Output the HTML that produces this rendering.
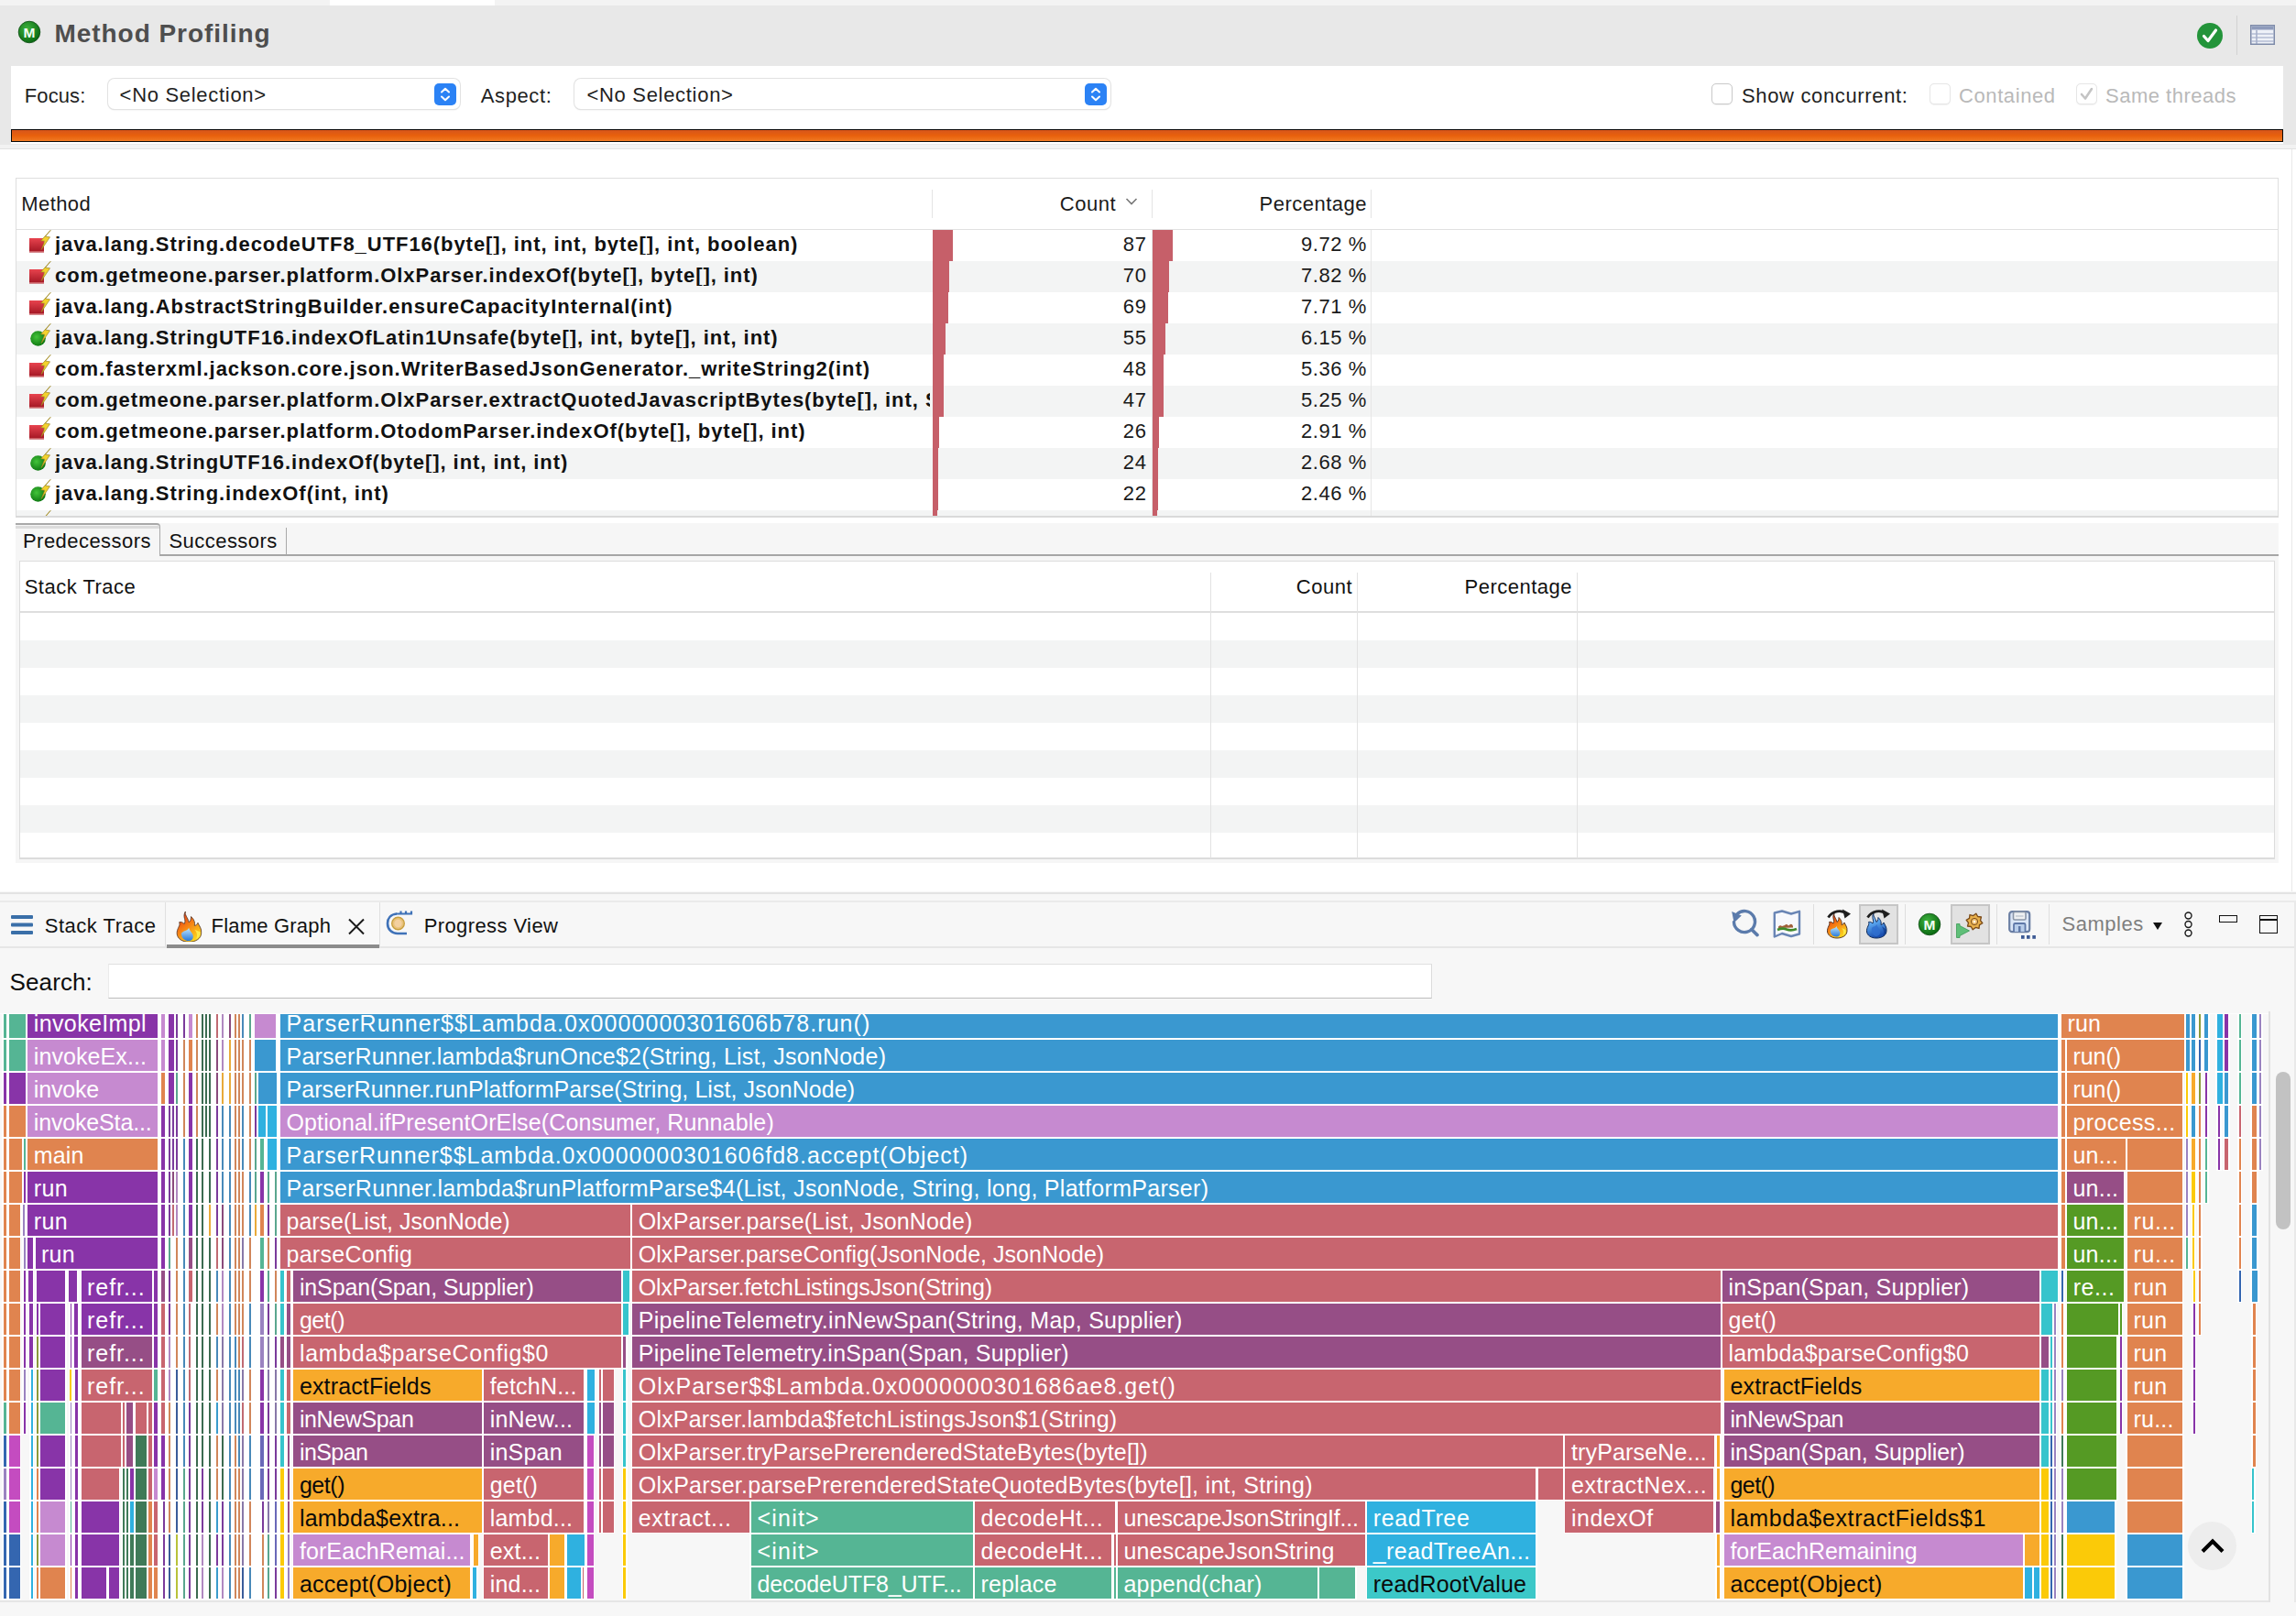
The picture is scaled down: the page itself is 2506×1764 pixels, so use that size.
<!DOCTYPE html>
<html><head><meta charset="utf-8"><title>Method Profiling</title><style>
html,body{margin:0;padding:0;}
body{width:2506px;height:1764px;position:relative;overflow:hidden;background:#fff;font-family:"Liberation Sans", sans-serif;}
.r{position:absolute;}
.t{position:absolute;white-space:pre;line-height:1;}
.fb{position:absolute;overflow:hidden;white-space:pre;font-size:25px;line-height:36px;letter-spacing:0.12px;}
.fb span{position:absolute;left:6.5px;top:0;}
</style></head><body>
<div class="r" style="left:0.00px;top:0.00px;width:2506.00px;height:6.00px;background:#f3f3f3;"></div>
<div class="r" style="left:360.00px;top:0.00px;width:180.00px;height:7.00px;background:#ffffff;"></div>
<div class="r" style="left:0.00px;top:6.00px;width:2506.00px;height:156.00px;background:#e8e8e8;"></div>
<svg class="r" style="left:19px;top:22px" width="26" height="26" viewBox="0 0 26 26"><defs><radialGradient id="gm" cx="40%" cy="35%" r="65%"><stop offset="0" stop-color="#3fb33f"/><stop offset="1" stop-color="#0b6a12"/></radialGradient></defs><circle cx="13" cy="13" r="11.8" fill="url(#gm)" stroke="#0a4a10" stroke-width="0.8"/><text x="13" y="18.8" font-family="Liberation Sans" font-size="15.5" font-weight="700" fill="#f4fff4" text-anchor="middle">M</text></svg>
<div class="t" style="left:59.5px;top:22.7px;font-size:28px;font-weight:700;color:#4e4e4e;letter-spacing:0.95px;">Method Profiling</div>
<svg class="r" style="left:2397px;top:24px" width="30" height="30" viewBox="0 0 30 30"><circle cx="15" cy="15" r="14" fill="#23943a"/><path d="M8.5 15.5 L13 20.5 L21.5 9" stroke="#fff" stroke-width="3.2" fill="none" stroke-linecap="round" stroke-linejoin="round"/></svg>
<div class="r" style="left:2441.00px;top:17.00px;width:1.00px;height:43.00px;background:#d2d2d2;"></div>
<svg class="r" style="left:2456px;top:27px" width="27" height="22" viewBox="0 0 27 22"><rect x="0.75" y="0.75" width="25.5" height="20.5" fill="#eef1f8" stroke="#7d8aa8" stroke-width="1.5"/><rect x="1.5" y="1.5" width="24" height="4" fill="#8e9bbb"/><line x1="7" y1="6" x2="7" y2="21" stroke="#8e9bbb" stroke-width="1.2"/><line x1="1" y1="10" x2="26" y2="10" stroke="#a6b1cc" stroke-width="1.2"/><line x1="1" y1="14" x2="26" y2="14" stroke="#a6b1cc" stroke-width="1.2"/><line x1="1" y1="18" x2="26" y2="18" stroke="#a6b1cc" stroke-width="1.2"/></svg>
<div class="r" style="left:12.00px;top:72.00px;width:2480.00px;height:85.00px;background:#ffffff;"></div>
<div class="t" style="left:26.8px;top:93.8px;font-size:22px;font-weight:400;color:#1f1f1f;letter-spacing:0.1px;">Focus:</div>
<div class="r" style="left:117.6px;top:86px;width:384.4px;height:33px;background:#fff;border-radius:7px;box-shadow:0 0 0 1px #e2e2e2, 0 1px 1.5px rgba(0,0,0,0.18);"></div>
<svg class="r" style="left:474px;top:91px" width="24" height="24" viewBox="0 0 24 24"><rect x="0" y="0" width="24" height="24" rx="5" fill="#2b82f5"/><path d="M8 9.5 L12 5.8 L16 9.5 M8 14.5 L12 18.2 L16 14.5" stroke="#fff" stroke-width="2" fill="none" stroke-linecap="round" stroke-linejoin="round"/></svg>
<div class="t" style="left:130.6px;top:92.9px;font-size:22px;font-weight:400;color:#1f1f1f;letter-spacing:0.7px;">&lt;No Selection&gt;</div>
<div class="t" style="left:524.8px;top:93.9px;font-size:22px;font-weight:400;color:#1f1f1f;letter-spacing:0.6px;">Aspect:</div>
<div class="r" style="left:627.4px;top:86px;width:584.6px;height:33px;background:#fff;border-radius:7px;box-shadow:0 0 0 1px #e2e2e2, 0 1px 1.5px rgba(0,0,0,0.18);"></div>
<svg class="r" style="left:1184px;top:91px" width="24" height="24" viewBox="0 0 24 24"><rect x="0" y="0" width="24" height="24" rx="5" fill="#2b82f5"/><path d="M8 9.5 L12 5.8 L16 9.5 M8 14.5 L12 18.2 L16 14.5" stroke="#fff" stroke-width="2" fill="none" stroke-linecap="round" stroke-linejoin="round"/></svg>
<div class="t" style="left:640.4px;top:92.9px;font-size:22px;font-weight:400;color:#1f1f1f;letter-spacing:0.7px;">&lt;No Selection&gt;</div>
<div class="r" style="left:1868px;top:91px;width:21px;height:21px;border:1.2px solid #c9c9c9;border-radius:5px;background:#fff;box-shadow:0 0.5px 1px rgba(0,0,0,0.06)"></div>
<div class="t" style="left:1901.0px;top:93.9px;font-size:22px;font-weight:400;color:#1f1f1f;letter-spacing:0.65px;">Show concurrent:</div>
<div class="r" style="left:2106px;top:91px;width:21px;height:21px;border:1.2px solid #e6e6e6;border-radius:5px;background:#fff;box-shadow:0 0.5px 1px rgba(0,0,0,0.06)"></div>
<div class="t" style="left:2138.0px;top:93.9px;font-size:22px;font-weight:400;color:#b9b9b9;letter-spacing:0.6px;">Contained</div>
<div class="r" style="left:2266px;top:91px;width:21px;height:21px;border:1.2px solid #e6e6e6;border-radius:5px;background:#fff;box-shadow:0 0.5px 1px rgba(0,0,0,0.06)"></div>
<svg class="r" style="left:2266px;top:91px" width="23" height="23" viewBox="0 0 23 23"><path d="M6 12 L10 16.5 L17 6" stroke="#c4c4c4" stroke-width="2.6" fill="none" stroke-linecap="round" stroke-linejoin="round"/></svg>
<div class="t" style="left:2298.0px;top:93.9px;font-size:22px;font-weight:400;color:#b9b9b9;letter-spacing:0.5px;">Same threads</div>
<div class="r" style="left:12px;top:141px;width:2480px;height:14px;box-sizing:border-box;border:1.6px solid #0a0a0a;background:linear-gradient(#d6561c,#e8600c 50%,#f07a22)"></div>
<div class="r" style="left:0.00px;top:158.00px;width:2506.00px;height:4.00px;background:#f2f2f2;"></div>
<div class="r" style="left:0.00px;top:161.50px;width:2506.00px;height:1.50px;background:#e2e2e2;"></div>
<div class="r" style="left:0.00px;top:163.00px;width:2506.00px;height:811.00px;background:#ffffff;"></div>
<div class="r" style="left:16.5px;top:193.5px;width:2470px;height:371px;box-sizing:border-box;border:1.3px solid #dedede;border-bottom:2px solid #dcdcdc;background:#fff"></div>
<div class="t" style="left:23.3px;top:212.4px;font-size:22px;font-weight:400;color:#1a1a1a;letter-spacing:0.4px;">Method</div>
<div class="t" style="left:18.0px;width:1200px;text-align:right;top:212.4px;font-size:22px;font-weight:400;color:#1a1a1a;letter-spacing:0.5px;">Count</div>
<svg class="r" style="left:1228px;top:215px" width="14" height="10" viewBox="0 0 14 10"><path d="M1.5 2 L7 7.5 L12.5 2" stroke="#777" stroke-width="1.6" fill="none"/></svg>
<div class="t" style="left:292.0px;width:1200px;text-align:right;top:212.4px;font-size:22px;font-weight:400;color:#1a1a1a;letter-spacing:0.5px;">Percentage</div>
<div class="r" style="left:1017.00px;top:207.00px;width:1.20px;height:31.00px;background:#e4e4e4;"></div>
<div class="r" style="left:1257.00px;top:207.00px;width:1.20px;height:31.00px;background:#e4e4e4;"></div>
<div class="r" style="left:1496.00px;top:207.00px;width:1.20px;height:31.00px;background:#e4e4e4;"></div>
<div class="r" style="left:17.50px;top:249.50px;width:2468.00px;height:1.50px;background:#e0e0e0;"></div>
<div class="r" style="left:1018.00px;top:250.50px;width:22.00px;height:34.00px;background:#c65f69;"></div>
<div class="r" style="left:1258.00px;top:250.50px;width:22.00px;height:34.00px;background:#c65f69;"></div>
<svg class="r" style="left:32px;top:250.5px" width="24" height="25" viewBox="0 0 24 25"><defs><linearGradient id="gr0" x1="0" y1="0" x2="0" y2="1"><stop offset="0" stop-color="#e8434e"/><stop offset="1" stop-color="#a01522"/></linearGradient></defs><rect x="0" y="9" width="16" height="15.5" fill="url(#gr0)"/><rect x="0" y="23" width="16" height="1.5" fill="#e89090" opacity="0.6"/><path d="M23.2 0.3 L17.5 7.2 L22.5 7.8 L13.2 21.5 L16.8 12.2 L12.6 11.8 Z" fill="#f3d22c" stroke="#9a8420" stroke-width="0.7" stroke-linejoin="round"/></svg>
<div class="t" style="left:60px;width:955px;overflow:hidden;top:256.2px;font-size:22px;font-weight:700;color:#111;letter-spacing:0.95px">java.lang.String.decodeUTF8_UTF16(byte[], int, int, byte[], int, boolean)</div>
<div class="t" style="left:51.5px;width:1200px;text-align:right;top:256.2px;font-size:22px;font-weight:400;color:#1a1a1a;letter-spacing:0.6px;">87</div>
<div class="t" style="left:292.0px;width:1200px;text-align:right;top:256.2px;font-size:22px;font-weight:400;color:#1a1a1a;letter-spacing:0.6px;">9.72 %</div>
<div class="r" style="left:17.50px;top:284.50px;width:2468.00px;height:34.00px;background:#f3f4f4;"></div>
<div class="r" style="left:1018.00px;top:284.50px;width:17.70px;height:34.00px;background:#c65f69;"></div>
<div class="r" style="left:1258.00px;top:284.50px;width:17.70px;height:34.00px;background:#c65f69;"></div>
<svg class="r" style="left:32px;top:284.5px" width="24" height="25" viewBox="0 0 24 25"><defs><linearGradient id="gr1" x1="0" y1="0" x2="0" y2="1"><stop offset="0" stop-color="#e8434e"/><stop offset="1" stop-color="#a01522"/></linearGradient></defs><rect x="0" y="9" width="16" height="15.5" fill="url(#gr1)"/><rect x="0" y="23" width="16" height="1.5" fill="#e89090" opacity="0.6"/><path d="M23.2 0.3 L17.5 7.2 L22.5 7.8 L13.2 21.5 L16.8 12.2 L12.6 11.8 Z" fill="#f3d22c" stroke="#9a8420" stroke-width="0.7" stroke-linejoin="round"/></svg>
<div class="t" style="left:60px;width:955px;overflow:hidden;top:290.2px;font-size:22px;font-weight:700;color:#111;letter-spacing:0.95px">com.getmeone.parser.platform.OlxParser.indexOf(byte[], byte[], int)</div>
<div class="t" style="left:51.5px;width:1200px;text-align:right;top:290.2px;font-size:22px;font-weight:400;color:#1a1a1a;letter-spacing:0.6px;">70</div>
<div class="t" style="left:292.0px;width:1200px;text-align:right;top:290.2px;font-size:22px;font-weight:400;color:#1a1a1a;letter-spacing:0.6px;">7.82 %</div>
<div class="r" style="left:1018.00px;top:318.50px;width:17.45px;height:34.00px;background:#c65f69;"></div>
<div class="r" style="left:1258.00px;top:318.50px;width:17.45px;height:34.00px;background:#c65f69;"></div>
<svg class="r" style="left:32px;top:318.5px" width="24" height="25" viewBox="0 0 24 25"><defs><linearGradient id="gr2" x1="0" y1="0" x2="0" y2="1"><stop offset="0" stop-color="#e8434e"/><stop offset="1" stop-color="#a01522"/></linearGradient></defs><rect x="0" y="9" width="16" height="15.5" fill="url(#gr2)"/><rect x="0" y="23" width="16" height="1.5" fill="#e89090" opacity="0.6"/><path d="M23.2 0.3 L17.5 7.2 L22.5 7.8 L13.2 21.5 L16.8 12.2 L12.6 11.8 Z" fill="#f3d22c" stroke="#9a8420" stroke-width="0.7" stroke-linejoin="round"/></svg>
<div class="t" style="left:60px;width:955px;overflow:hidden;top:324.2px;font-size:22px;font-weight:700;color:#111;letter-spacing:0.95px">java.lang.AbstractStringBuilder.ensureCapacityInternal(int)</div>
<div class="t" style="left:51.5px;width:1200px;text-align:right;top:324.2px;font-size:22px;font-weight:400;color:#1a1a1a;letter-spacing:0.6px;">69</div>
<div class="t" style="left:292.0px;width:1200px;text-align:right;top:324.2px;font-size:22px;font-weight:400;color:#1a1a1a;letter-spacing:0.6px;">7.71 %</div>
<div class="r" style="left:17.50px;top:352.50px;width:2468.00px;height:34.00px;background:#f3f4f4;"></div>
<div class="r" style="left:1018.00px;top:352.50px;width:13.91px;height:34.00px;background:#c65f69;"></div>
<div class="r" style="left:1258.00px;top:352.50px;width:13.91px;height:34.00px;background:#c65f69;"></div>
<svg class="r" style="left:32px;top:352.5px" width="24" height="25" viewBox="0 0 24 25"><defs><radialGradient id="gg3" cx="40%" cy="40%" r="60%"><stop offset="0" stop-color="#43c43a"/><stop offset="1" stop-color="#0f7a12"/></radialGradient></defs><circle cx="9.5" cy="16.5" r="8.3" fill="url(#gg3)"/><path d="M23.2 0.3 L17.5 7.2 L22.5 7.8 L13.2 21.5 L16.8 12.2 L12.6 11.8 Z" fill="#f3d22c" stroke="#9a8420" stroke-width="0.7" stroke-linejoin="round"/></svg>
<div class="t" style="left:60px;width:955px;overflow:hidden;top:358.2px;font-size:22px;font-weight:700;color:#111;letter-spacing:0.95px">java.lang.StringUTF16.indexOfLatin1Unsafe(byte[], int, byte[], int, int)</div>
<div class="t" style="left:51.5px;width:1200px;text-align:right;top:358.2px;font-size:22px;font-weight:400;color:#1a1a1a;letter-spacing:0.6px;">55</div>
<div class="t" style="left:292.0px;width:1200px;text-align:right;top:358.2px;font-size:22px;font-weight:400;color:#1a1a1a;letter-spacing:0.6px;">6.15 %</div>
<div class="r" style="left:1018.00px;top:386.50px;width:12.14px;height:34.00px;background:#c65f69;"></div>
<div class="r" style="left:1258.00px;top:386.50px;width:12.14px;height:34.00px;background:#c65f69;"></div>
<svg class="r" style="left:32px;top:386.5px" width="24" height="25" viewBox="0 0 24 25"><defs><linearGradient id="gr4" x1="0" y1="0" x2="0" y2="1"><stop offset="0" stop-color="#e8434e"/><stop offset="1" stop-color="#a01522"/></linearGradient></defs><rect x="0" y="9" width="16" height="15.5" fill="url(#gr4)"/><rect x="0" y="23" width="16" height="1.5" fill="#e89090" opacity="0.6"/><path d="M23.2 0.3 L17.5 7.2 L22.5 7.8 L13.2 21.5 L16.8 12.2 L12.6 11.8 Z" fill="#f3d22c" stroke="#9a8420" stroke-width="0.7" stroke-linejoin="round"/></svg>
<div class="t" style="left:60px;width:955px;overflow:hidden;top:392.2px;font-size:22px;font-weight:700;color:#111;letter-spacing:0.95px">com.fasterxml.jackson.core.json.WriterBasedJsonGenerator._writeString2(int)</div>
<div class="t" style="left:51.5px;width:1200px;text-align:right;top:392.2px;font-size:22px;font-weight:400;color:#1a1a1a;letter-spacing:0.6px;">48</div>
<div class="t" style="left:292.0px;width:1200px;text-align:right;top:392.2px;font-size:22px;font-weight:400;color:#1a1a1a;letter-spacing:0.6px;">5.36 %</div>
<div class="r" style="left:17.50px;top:420.50px;width:2468.00px;height:34.00px;background:#f3f4f4;"></div>
<div class="r" style="left:1018.00px;top:420.50px;width:11.89px;height:34.00px;background:#c65f69;"></div>
<div class="r" style="left:1258.00px;top:420.50px;width:11.89px;height:34.00px;background:#c65f69;"></div>
<svg class="r" style="left:32px;top:420.5px" width="24" height="25" viewBox="0 0 24 25"><defs><linearGradient id="gr5" x1="0" y1="0" x2="0" y2="1"><stop offset="0" stop-color="#e8434e"/><stop offset="1" stop-color="#a01522"/></linearGradient></defs><rect x="0" y="9" width="16" height="15.5" fill="url(#gr5)"/><rect x="0" y="23" width="16" height="1.5" fill="#e89090" opacity="0.6"/><path d="M23.2 0.3 L17.5 7.2 L22.5 7.8 L13.2 21.5 L16.8 12.2 L12.6 11.8 Z" fill="#f3d22c" stroke="#9a8420" stroke-width="0.7" stroke-linejoin="round"/></svg>
<div class="t" style="left:60px;width:955px;overflow:hidden;top:426.2px;font-size:22px;font-weight:700;color:#111;letter-spacing:0.95px">com.getmeone.parser.platform.OlxParser.extractQuotedJavascriptBytes(byte[], int, String)</div>
<div class="t" style="left:51.5px;width:1200px;text-align:right;top:426.2px;font-size:22px;font-weight:400;color:#1a1a1a;letter-spacing:0.6px;">47</div>
<div class="t" style="left:292.0px;width:1200px;text-align:right;top:426.2px;font-size:22px;font-weight:400;color:#1a1a1a;letter-spacing:0.6px;">5.25 %</div>
<div class="r" style="left:1018.00px;top:454.50px;width:6.57px;height:34.00px;background:#c65f69;"></div>
<div class="r" style="left:1258.00px;top:454.50px;width:6.57px;height:34.00px;background:#c65f69;"></div>
<svg class="r" style="left:32px;top:454.5px" width="24" height="25" viewBox="0 0 24 25"><defs><linearGradient id="gr6" x1="0" y1="0" x2="0" y2="1"><stop offset="0" stop-color="#e8434e"/><stop offset="1" stop-color="#a01522"/></linearGradient></defs><rect x="0" y="9" width="16" height="15.5" fill="url(#gr6)"/><rect x="0" y="23" width="16" height="1.5" fill="#e89090" opacity="0.6"/><path d="M23.2 0.3 L17.5 7.2 L22.5 7.8 L13.2 21.5 L16.8 12.2 L12.6 11.8 Z" fill="#f3d22c" stroke="#9a8420" stroke-width="0.7" stroke-linejoin="round"/></svg>
<div class="t" style="left:60px;width:955px;overflow:hidden;top:460.2px;font-size:22px;font-weight:700;color:#111;letter-spacing:0.95px">com.getmeone.parser.platform.OtodomParser.indexOf(byte[], byte[], int)</div>
<div class="t" style="left:51.5px;width:1200px;text-align:right;top:460.2px;font-size:22px;font-weight:400;color:#1a1a1a;letter-spacing:0.6px;">26</div>
<div class="t" style="left:292.0px;width:1200px;text-align:right;top:460.2px;font-size:22px;font-weight:400;color:#1a1a1a;letter-spacing:0.6px;">2.91 %</div>
<div class="r" style="left:17.50px;top:488.50px;width:2468.00px;height:34.00px;background:#f3f4f4;"></div>
<div class="r" style="left:1018.00px;top:488.50px;width:6.07px;height:34.00px;background:#c65f69;"></div>
<div class="r" style="left:1258.00px;top:488.50px;width:6.07px;height:34.00px;background:#c65f69;"></div>
<svg class="r" style="left:32px;top:488.5px" width="24" height="25" viewBox="0 0 24 25"><defs><radialGradient id="gg7" cx="40%" cy="40%" r="60%"><stop offset="0" stop-color="#43c43a"/><stop offset="1" stop-color="#0f7a12"/></radialGradient></defs><circle cx="9.5" cy="16.5" r="8.3" fill="url(#gg7)"/><path d="M23.2 0.3 L17.5 7.2 L22.5 7.8 L13.2 21.5 L16.8 12.2 L12.6 11.8 Z" fill="#f3d22c" stroke="#9a8420" stroke-width="0.7" stroke-linejoin="round"/></svg>
<div class="t" style="left:60px;width:955px;overflow:hidden;top:494.2px;font-size:22px;font-weight:700;color:#111;letter-spacing:0.95px">java.lang.StringUTF16.indexOf(byte[], int, int, int)</div>
<div class="t" style="left:51.5px;width:1200px;text-align:right;top:494.2px;font-size:22px;font-weight:400;color:#1a1a1a;letter-spacing:0.6px;">24</div>
<div class="t" style="left:292.0px;width:1200px;text-align:right;top:494.2px;font-size:22px;font-weight:400;color:#1a1a1a;letter-spacing:0.6px;">2.68 %</div>
<div class="r" style="left:1018.00px;top:522.50px;width:5.56px;height:34.00px;background:#c65f69;"></div>
<div class="r" style="left:1258.00px;top:522.50px;width:5.56px;height:34.00px;background:#c65f69;"></div>
<svg class="r" style="left:32px;top:522.5px" width="24" height="25" viewBox="0 0 24 25"><defs><radialGradient id="gg8" cx="40%" cy="40%" r="60%"><stop offset="0" stop-color="#43c43a"/><stop offset="1" stop-color="#0f7a12"/></radialGradient></defs><circle cx="9.5" cy="16.5" r="8.3" fill="url(#gg8)"/><path d="M23.2 0.3 L17.5 7.2 L22.5 7.8 L13.2 21.5 L16.8 12.2 L12.6 11.8 Z" fill="#f3d22c" stroke="#9a8420" stroke-width="0.7" stroke-linejoin="round"/></svg>
<div class="t" style="left:60px;width:955px;overflow:hidden;top:528.2px;font-size:22px;font-weight:700;color:#111;letter-spacing:0.95px">java.lang.String.indexOf(int, int)</div>
<div class="t" style="left:51.5px;width:1200px;text-align:right;top:528.2px;font-size:22px;font-weight:400;color:#1a1a1a;letter-spacing:0.6px;">22</div>
<div class="t" style="left:292.0px;width:1200px;text-align:right;top:528.2px;font-size:22px;font-weight:400;color:#1a1a1a;letter-spacing:0.6px;">2.46 %</div>
<div class="r" style="left:17.50px;top:556.50px;width:2468.00px;height:7.00px;background:#f3f4f4;"></div>
<div class="r" style="left:1018.00px;top:556.50px;width:5.06px;height:7.00px;background:#c65f69;"></div>
<div class="r" style="left:1258.00px;top:556.50px;width:5.06px;height:7.00px;background:#c65f69;"></div>
<svg class="r" style="left:32px;top:556.5px" width="24" height="13" viewBox="0 0 24 13" ><path d="M23.2 0.3 L17.5 7.2 L22.5 7.8 L13.2 21.5 L16.8 12.2 L12.6 11.8 Z" fill="#f3d22c" stroke="#9a8420" stroke-width="0.7" stroke-linejoin="round"/></svg>
<div class="r" style="left:1257.00px;top:251.00px;width:1.20px;height:312.50px;background:#e6e6e6;"></div>
<div class="r" style="left:1496.00px;top:251.00px;width:1.20px;height:312.50px;background:#e6e6e6;"></div>
<div class="r" style="left:16.50px;top:563.30px;width:2470.50px;height:2.00px;background:#d9d9d9;"></div>
<div class="r" style="left:16.50px;top:566.00px;width:2470.50px;height:376.00px;background:#f6f6f6;"></div>
<div class="r" style="left:16.50px;top:565.30px;width:2470.50px;height:5.70px;background:#ffffff;"></div>
<div class="r" style="left:17px;top:571px;width:158px;height:36px;background:#f6f6f6;border-top:2.5px solid #a9a9a9;border-right:1.5px solid #a9a9a9;border-top-right-radius:4px;box-sizing:border-box"></div>
<div class="r" style="left:17.00px;top:573.50px;width:157.00px;height:3.50px;background:#dcdcdc;"></div>
<div class="r" style="left:175.00px;top:605.00px;width:2312.00px;height:1.80px;background:#a6a6a6;"></div>
<div class="r" style="left:311.50px;top:576.00px;width:1.50px;height:30.00px;background:#a9a9a9;"></div>
<div class="t" style="left:25.0px;top:579.9px;font-size:22px;font-weight:400;color:#111;letter-spacing:0.45px;">Predecessors</div>
<div class="t" style="left:184.5px;top:579.9px;font-size:22px;font-weight:400;color:#111;letter-spacing:0.45px;">Successors</div>
<div class="r" style="left:20.5px;top:611.5px;width:2462.5px;height:326.5px;box-sizing:border-box;border:1.3px solid #dcdcdc;border-bottom:2px solid #dcdcdc;background:#fff"></div>
<div class="t" style="left:26.7px;top:630.2px;font-size:22px;font-weight:400;color:#111;letter-spacing:0.5px;">Stack Trace</div>
<div class="t" style="left:276.0px;width:1200px;text-align:right;top:630.2px;font-size:22px;font-weight:400;color:#111;letter-spacing:0.5px;">Count</div>
<div class="t" style="left:516.0px;width:1200px;text-align:right;top:630.2px;font-size:22px;font-weight:400;color:#111;letter-spacing:0.5px;">Percentage</div>
<div class="r" style="left:21.50px;top:667.00px;width:2460.50px;height:1.50px;background:#dedede;"></div>
<div class="r" style="left:21.50px;top:698.50px;width:2460.50px;height:30.00px;background:#f3f4f4;"></div>
<div class="r" style="left:21.50px;top:758.50px;width:2460.50px;height:30.00px;background:#f3f4f4;"></div>
<div class="r" style="left:21.50px;top:818.50px;width:2460.50px;height:30.00px;background:#f3f4f4;"></div>
<div class="r" style="left:21.50px;top:878.50px;width:2460.50px;height:30.00px;background:#f3f4f4;"></div>
<div class="r" style="left:1320.50px;top:625.00px;width:1.20px;height:312.00px;background:#e2e2e2;"></div>
<div class="r" style="left:1480.50px;top:625.00px;width:1.20px;height:312.00px;background:#e2e2e2;"></div>
<div class="r" style="left:1720.50px;top:625.00px;width:1.20px;height:312.00px;background:#e2e2e2;"></div>
<div class="r" style="left:2501.00px;top:163.00px;width:1.20px;height:810.50px;background:#e8e8e8;"></div>
<div class="r" style="left:0.00px;top:973.00px;width:2506.00px;height:791.00px;background:#f7f7f7;"></div>
<div class="r" style="left:0.00px;top:973.50px;width:2506.00px;height:2.00px;background:#e3e3e3;"></div>
<div class="r" style="left:0.00px;top:983.00px;width:2506.00px;height:1.50px;background:#ebebeb;"></div>
<div class="r" style="left:0.00px;top:1033.00px;width:2506.00px;height:2.00px;background:#e6e6e6;"></div>
<svg class="r" style="left:11px;top:998px" width="26" height="23" viewBox="0 0 26 23"><g fill="#3a6fa8"><rect x="1" y="1" width="24" height="4" rx="1"/><rect x="1" y="9.5" width="24" height="4" rx="1"/><rect x="1" y="18" width="24" height="4" rx="1"/></g></svg>
<div class="t" style="left:48.8px;top:1000.2px;font-size:22px;font-weight:400;color:#111;letter-spacing:0.5px;">Stack Trace</div>
<div class="r" style="left:180.00px;top:985.00px;width:1.20px;height:48.00px;background:#e0e0e0;"></div>
<div class="r" style="left:413.50px;top:985.00px;width:1.20px;height:48.00px;background:#e0e0e0;"></div>
<div class="r" style="left:181.50px;top:985.00px;width:232.00px;height:46.00px;background:#f8f8f8;"></div>
<div class="r" style="left:181.50px;top:1031.00px;width:232.00px;height:4.00px;background:#8c8c8c;"></div>
<svg class="r" style="left:191.5px;top:994px" width="29" height="34" viewBox="1.8 5.2 23 27.6"><defs><linearGradient id="ft" x1="0" y1="0" x2="0.6" y2="1"><stop offset="0" stop-color="#d81e1a"/><stop offset="0.5" stop-color="#f57a14"/><stop offset="1" stop-color="#fbd41c"/></linearGradient><linearGradient id="ft2" x1="0" y1="0" x2="0" y2="1"><stop offset="0" stop-color="#bfe6ff"/><stop offset="1" stop-color="#2a7ad8"/></linearGradient></defs><path d="M10 6 C7 11 11 13 9 17 C7.5 15.5 6 15 4.5 15.5 C6 18.5 2 21 2.5 26 C3 30 7 33 13 33 C19 33 24 30 24 25 C24.5 21 22 18.5 21 16 C20 18 19 18.5 18 18.5 C19 14.5 16 11.5 15 10.5 C15 13.5 14 15 13 15.5 C12 11 9 9 10 6 Z" fill="url(#ft)" stroke="#5a3a2a" stroke-width="0.7"/><path d="M6.5 25 C6 29 9 32 13 32 C16 32 17.5 29.5 16.5 26.5 C15.5 24 13.5 23 13 20.5 C11.5 23.5 9.5 22.5 6.5 25 Z" fill="url(#ft2)"/><path d="M18 22 C20 24 21 27 19.5 30.5 C22.5 29 23.5 26.5 23 24 Z" fill="#fce84a"/></svg>
<div class="t" style="left:230.6px;top:1000.2px;font-size:22px;font-weight:400;color:#111;letter-spacing:0.2px;">Flame Graph</div>
<svg class="r" style="left:379px;top:1002px" width="20" height="19" viewBox="0 0 20 19"><path d="M2 1.5 L18 17.5 M18 1.5 L2 17.5" stroke="#1a1a1a" stroke-width="2"/></svg>
<svg class="r" style="left:421px;top:994px" width="30" height="28" viewBox="0 0 30 28"><path d="M12 3.5 C5.5 4 2 8.5 2 14 C2 20.5 6.5 25 13 25 L23 25" stroke="#3f72b8" stroke-width="2.6" fill="none"/><path d="M11 3.5 L28 3.5 L28 0.5 M16.5 3.5 L16.5 0.5 M22 3.5 L22 0.5" stroke="#3f72b8" stroke-width="2.2" fill="none"/><circle cx="13.5" cy="14" r="6.8" fill="#e9c27a" stroke="#c9a040" stroke-width="1.4"/><circle cx="13.5" cy="14" r="4.2" fill="#f3d0a0"/></svg>
<div class="t" style="left:462.7px;top:1000.2px;font-size:22px;font-weight:400;color:#111;letter-spacing:0.4px;">Progress View</div>
<svg class="r" style="left:1888px;top:992px" width="34" height="33" viewBox="0 0 34 33"><path d="M7.9 5.9 A11.5 11.5 0 1 1 4.5 14.5" stroke="#5b7bab" stroke-width="3.4" fill="none" stroke-linecap="round"/><path d="M2.2 3 L12.8 7.6 L4.6 15.2 Z" fill="#5b7bab"/><path d="M23.8 22.6 L30 28.6" stroke="#5b7bab" stroke-width="3.6" stroke-linecap="round"/></svg>
<svg class="r" style="left:1935px;top:993px" width="31" height="32" viewBox="0 0 31 32"><path d="M1.8 3.5 L10 1.5 L20 4.5 L29 1.8 L29 26.5 L20 29 L10 26 L1.8 29.5 Z" fill="#f7f8fc" stroke="#6985b5" stroke-width="2.4" stroke-linejoin="round"/><path d="M6 18.5 Q8 16.5 10 18 L13 17 Q15 15 17 17.5 L19 16 Q21 15 22 18 L22 19.5 L6 20 Z" fill="#a0603a"/><path d="M5 22 Q11 19.5 15 21.5 Q20 23.5 26 21" stroke="#3f8a2a" stroke-width="2.6" fill="none"/></svg>
<div class="r" style="left:1978.50px;top:987.00px;width:1.20px;height:44.00px;background:#dedede;"></div>
<div class="r" style="left:2078.50px;top:987.00px;width:1.20px;height:44.00px;background:#dedede;"></div>
<div class="r" style="left:2178.50px;top:987.00px;width:1.20px;height:44.00px;background:#dedede;"></div>
<div class="r" style="left:2235.50px;top:987.00px;width:1.20px;height:44.00px;background:#dedede;"></div>
<div class="r" style="left:2028.50px;top:987.00px;width:43.00px;height:44.00px;background:#e2e2e2;box-shadow: inset 0 0 0 2px #c6c6c6"></div>
<div class="r" style="left:2128.50px;top:987.00px;width:43.00px;height:44.00px;background:#e2e2e2;box-shadow: inset 0 0 0 2px #c6c6c6"></div>
<svg class="r" style="left:1992px;top:991px" width="30" height="35" viewBox="0 0 30 35"><defs><linearGradient id="fa" x1="0" y1="0" x2="0.6" y2="1"><stop offset="0" stop-color="#d81e1a"/><stop offset="0.5" stop-color="#f57a14"/><stop offset="1" stop-color="#fbd41c"/></linearGradient><linearGradient id="fa2" x1="0" y1="0" x2="0" y2="1"><stop offset="0" stop-color="#bfe6ff"/><stop offset="1" stop-color="#2a7ad8"/></linearGradient></defs><path d="M10 6 C7 11 11 13 9 17 C7.5 15.5 6 15 4.5 15.5 C6 18.5 2 21 2.5 26 C3 30 7 33 13 33 C19 33 24 30 24 25 C24.5 21 22 18.5 21 16 C20 18 19 18.5 18 18.5 C19 14.5 16 11.5 15 10.5 C15 13.5 14 15 13 15.5 C12 11 9 9 10 6 Z" fill="url(#fa)" stroke="#4a2a1a" stroke-width="0.9"/><path d="M6 24 C5 28 8 31.5 12.5 31.5 C15.5 31.5 17 29 16 26 C15 23.5 13 22.5 12.5 20 C11 23 9 21.5 6 24 Z" fill="url(#fa2)"/><path d="M18 22 C20 24 21 27 19.5 30 C22 29 23 26.5 22.5 24 Z" fill="#fce84a"/><path d="M3.5 10.5 C8 3 18 1.5 23.5 6.5" stroke="#1e1e1e" stroke-width="2.8" fill="none"/><path d="M19 1.5 L28 6.5 L21.5 11.5 Z" fill="#1e1e1e"/></svg>
<svg class="r" style="left:2035px;top:991px" width="30" height="35" viewBox="0 0 30 35"><defs><linearGradient id="fb" x1="0" y1="0" x2="0.3" y2="1"><stop offset="0" stop-color="#cfeaff"/><stop offset="0.45" stop-color="#5aa6f0"/><stop offset="1" stop-color="#1a4fb0"/></linearGradient></defs><path d="M10 6 C7 11 11 13 9 17 C7.5 15.5 6 15 4.5 15.5 C6 18.5 2 21 2.5 26 C3 30 7 33 13 33 C19 33 24 30 24 25 C24.5 21 22 18.5 21 16 C20 18 19 18.5 18 18.5 C19 14.5 16 11.5 15 10.5 C15 13.5 14 15 13 15.5 C12 11 9 9 10 6 Z" fill="url(#fb)" stroke="#0e2a5a" stroke-width="1"/><path d="M8 22 C7 27 10 31 13 31 C16 31 18 28 17 25 C16 22 14 21 13.5 18 C12 21 10 19.5 8 22 Z" fill="#2f6fd0" opacity="0.8"/><path d="M18.5 20 C21 23 22 27 20 30.5 C23 29 24 26 23.2 23 Z" fill="#0f3a8a" opacity="0.7"/><path d="M3.5 10.5 C8 3 18 1.5 23.5 6.5" stroke="#1e1e1e" stroke-width="2.8" fill="none"/><path d="M19 1.5 L28 6.5 L21.5 11.5 Z" fill="#1e1e1e"/></svg>
<svg class="r" style="left:2093px;top:996px" width="26" height="26" viewBox="0 0 26 26"><defs><radialGradient id="gm2" cx="40%" cy="35%" r="65%"><stop offset="0" stop-color="#3fb33f"/><stop offset="1" stop-color="#0b6a12"/></radialGradient></defs><circle cx="13" cy="13" r="11.8" fill="url(#gm2)" stroke="#0a4a10" stroke-width="0.8"/><text x="13" y="18.8" font-family="Liberation Sans" font-size="15.5" font-weight="700" fill="#f4fff4" text-anchor="middle">M</text></svg>
<svg class="r" style="left:2134px;top:993px" width="34" height="32" viewBox="0 0 34 32"><path d="M1.5 15.5 L5 15.5 L5 17.5 L15.5 23 L5 28.5 L5 30.5 L1.5 30.5 Z" fill="#5fbf78" stroke="#3a9a55" stroke-width="0.8"/><path d="M29.83,14.76 L26.49,16.67 L26.00,20.48 L22.29,19.47 L19.24,21.83 L17.33,18.49 L13.52,18.00 L14.53,14.29 L12.17,11.24 L15.51,9.33 L16.00,5.52 L19.71,6.53 L22.76,4.17 L24.67,7.51 L28.48,8.00 L27.47,11.71 Z" fill="#e8b04a" stroke="#7a4a18" stroke-width="1.3" stroke-linejoin="round"/><circle cx="21" cy="13" r="3.6" fill="#f0c070" stroke="#7a4a18" stroke-width="1"/><circle cx="21" cy="13" r="1.3" fill="#fff"/></svg>
<svg class="r" style="left:2192px;top:994px" width="34" height="33" viewBox="0 0 34 33"><rect x="1.2" y="1.2" width="22" height="22" rx="3" fill="#dbe6f6" stroke="#6b7fa3" stroke-width="2.2"/><rect x="5.5" y="1.5" width="13.5" height="8.5" rx="1.5" fill="#eef0f2" stroke="#8a96a8" stroke-width="1.6"/><line x1="8" y1="6" x2="16.5" y2="6" stroke="#b8c0ca" stroke-width="1.2"/><path d="M6 23 L6 15.5 Q6 14 7.5 14 L17 14 Q18.5 14 18.5 15.5 L18.5 23" fill="#b8cdea" stroke="#5f78a8" stroke-width="1.8"/><rect x="11" y="17" width="2.5" height="6" fill="#5f78a8"/><rect x="14" y="27" width="3.6" height="3.8" fill="#3d5a94"/><rect x="20" y="27" width="3.6" height="3.8" fill="#3d5a94"/><rect x="26.3" y="27" width="3.6" height="3.8" fill="#3d5a94"/></svg>
<div class="t" style="left:2250.6px;top:998.4px;font-size:22px;font-weight:400;color:#7f7f7f;letter-spacing:0.5px;">Samples</div>
<svg class="r" style="left:2349px;top:1006px" width="12" height="10" viewBox="0 0 12 10"><path d="M1 1 L11 1 L6 9 Z" fill="#111"/></svg>
<svg class="r" style="left:2383px;top:995px" width="11" height="29" viewBox="0 0 11 29"><g fill="none" stroke="#1a1a1a" stroke-width="1.4"><circle cx="5.5" cy="4.5" r="3.5"/><circle cx="5.5" cy="14" r="3.5"/><circle cx="5.5" cy="23.5" r="3.5"/></g></svg>
<div class="r" style="left:2422px;top:999px;width:20px;height:8px;box-sizing:border-box;border:1.8px solid #111"></div>
<div class="r" style="left:2466px;top:999px;width:20px;height:20px;box-sizing:border-box;border:1.7px solid #111"></div>
<div class="r" style="left:2467.00px;top:1003.00px;width:18.00px;height:1.60px;background:#111;"></div>
<div class="t" style="left:10.6px;top:1059.0px;font-size:26px;font-weight:400;color:#0d0d0d;letter-spacing:0.1px;">Search:</div>
<div class="r" style="left:117.5px;top:1052px;width:1445px;height:38px;background:#fff;box-sizing:border-box;border:1px solid #ebebeb;border-top:1.2px solid #e0e0e0;border-right:1.2px solid #dcdcdc;border-bottom:1.8px solid #bcbcbc"></div>
<div class="r" style="left:0.00px;top:1104.00px;width:2476.00px;height:643.00px;background:#f7f7f7;"></div>
<div class="r" style="left:173.00px;top:1107.00px;width:132.00px;height:638.50px;background:#ffffff;"></div>
<div class="r" style="left:0.00px;top:1105.50px;width:2476.00px;height:1.50px;background:#fdfdfd;"></div>
<div class="r" style="left:0;top:1107px;width:2476px;height:640px;overflow:hidden">
<div class="r" style="left:2.4px;top:-9.1px;width:6.6px;height:36.1px;background:#fff"></div>
<div class="r" style="left:8.6px;top:-9.1px;width:20.8px;height:36.1px;background:#fff"></div>
<div class="r" style="left:28.7px;top:-9.1px;width:144.6px;height:36.1px;background:#fff"></div>
<div class="r" style="left:173.9px;top:-9.1px;width:7.6px;height:36.1px;background:#fff"></div>
<div class="r" style="left:182.6px;top:-9.1px;width:8.7px;height:36.1px;background:#fff"></div>
<div class="r" style="left:190.4px;top:-9.1px;width:5.1px;height:36.1px;background:#fff"></div>
<div class="r" style="left:198.4px;top:-9.1px;width:5.1px;height:36.1px;background:#fff"></div>
<div class="r" style="left:204.6px;top:-9.1px;width:7.0px;height:36.1px;background:#fff"></div>
<div class="r" style="left:212.6px;top:-9.1px;width:5.1px;height:36.1px;background:#fff"></div>
<div class="r" style="left:218.4px;top:-9.1px;width:5.1px;height:36.1px;background:#fff"></div>
<div class="r" style="left:222.6px;top:-9.1px;width:5.1px;height:36.1px;background:#fff"></div>
<div class="r" style="left:226.4px;top:-9.1px;width:5.0px;height:36.1px;background:#fff"></div>
<div class="r" style="left:234.4px;top:-9.1px;width:5.0px;height:36.1px;background:#fff"></div>
<div class="r" style="left:240.4px;top:-9.1px;width:5.1px;height:36.1px;background:#fff"></div>
<div class="r" style="left:248.4px;top:-9.1px;width:5.1px;height:36.1px;background:#fff"></div>
<div class="r" style="left:254.5px;top:-9.1px;width:5.1px;height:36.1px;background:#fff"></div>
<div class="r" style="left:258.4px;top:-9.1px;width:5.1px;height:36.1px;background:#fff"></div>
<div class="r" style="left:262.4px;top:-9.1px;width:5.1px;height:36.1px;background:#fff"></div>
<div class="r" style="left:270.4px;top:-9.1px;width:5.1px;height:36.1px;background:#fff"></div>
<div class="r" style="left:276.7px;top:-9.1px;width:26.4px;height:36.1px;background:#fff"></div>
<div class="r" style="left:304.4px;top:-9.1px;width:1943.2px;height:36.1px;background:#fff"></div>
<div class="r" style="left:2248.4px;top:-9.1px;width:137.0px;height:36.1px;background:#fff"></div>
<div class="r" style="left:2384.6px;top:-9.1px;width:6.6px;height:36.1px;background:#fff"></div>
<div class="r" style="left:2390.5px;top:-9.1px;width:7.2px;height:36.1px;background:#fff"></div>
<div class="r" style="left:2398.4px;top:-9.1px;width:5.2px;height:36.1px;background:#fff"></div>
<div class="r" style="left:2404.4px;top:-9.1px;width:7.2px;height:36.1px;background:#fff"></div>
<div class="r" style="left:2418.4px;top:-9.1px;width:9.2px;height:36.1px;background:#fff"></div>
<div class="r" style="left:2426.4px;top:-9.1px;width:7.2px;height:36.1px;background:#fff"></div>
<div class="r" style="left:2442.0px;top:-9.1px;width:5.2px;height:36.1px;background:#fff"></div>
<div class="r" style="left:2456.4px;top:-9.1px;width:8.6px;height:36.1px;background:#fff"></div>
<div class="r" style="left:2464.4px;top:-9.1px;width:5.2px;height:36.1px;background:#fff"></div>
<div class="r" style="left:2.4px;top:26.9px;width:6.6px;height:36.1px;background:#fff"></div>
<div class="r" style="left:8.6px;top:26.9px;width:20.8px;height:36.1px;background:#fff"></div>
<div class="r" style="left:28.7px;top:26.9px;width:144.6px;height:36.1px;background:#fff"></div>
<div class="r" style="left:173.9px;top:26.9px;width:7.6px;height:36.1px;background:#fff"></div>
<div class="r" style="left:182.6px;top:26.9px;width:8.7px;height:36.1px;background:#fff"></div>
<div class="r" style="left:190.4px;top:26.9px;width:5.1px;height:36.1px;background:#fff"></div>
<div class="r" style="left:198.4px;top:26.9px;width:5.1px;height:36.1px;background:#fff"></div>
<div class="r" style="left:204.6px;top:26.9px;width:7.0px;height:36.1px;background:#fff"></div>
<div class="r" style="left:212.6px;top:26.9px;width:5.1px;height:36.1px;background:#fff"></div>
<div class="r" style="left:218.4px;top:26.9px;width:5.1px;height:36.1px;background:#fff"></div>
<div class="r" style="left:222.6px;top:26.9px;width:5.1px;height:36.1px;background:#fff"></div>
<div class="r" style="left:226.4px;top:26.9px;width:5.0px;height:36.1px;background:#fff"></div>
<div class="r" style="left:234.4px;top:26.9px;width:5.0px;height:36.1px;background:#fff"></div>
<div class="r" style="left:240.4px;top:26.9px;width:5.1px;height:36.1px;background:#fff"></div>
<div class="r" style="left:248.4px;top:26.9px;width:5.1px;height:36.1px;background:#fff"></div>
<div class="r" style="left:254.5px;top:26.9px;width:5.1px;height:36.1px;background:#fff"></div>
<div class="r" style="left:258.4px;top:26.9px;width:5.1px;height:36.1px;background:#fff"></div>
<div class="r" style="left:262.4px;top:26.9px;width:5.1px;height:36.1px;background:#fff"></div>
<div class="r" style="left:270.4px;top:26.9px;width:5.1px;height:36.1px;background:#fff"></div>
<div class="r" style="left:276.7px;top:26.9px;width:26.4px;height:36.1px;background:#fff"></div>
<div class="r" style="left:304.4px;top:26.9px;width:1943.2px;height:36.1px;background:#fff"></div>
<div class="r" style="left:2248.4px;top:26.9px;width:6.7px;height:36.1px;background:#fff"></div>
<div class="r" style="left:2254.4px;top:26.9px;width:131.0px;height:36.1px;background:#fff"></div>
<div class="r" style="left:2384.6px;top:26.9px;width:6.6px;height:36.1px;background:#fff"></div>
<div class="r" style="left:2390.5px;top:26.9px;width:7.2px;height:36.1px;background:#fff"></div>
<div class="r" style="left:2398.4px;top:26.9px;width:5.2px;height:36.1px;background:#fff"></div>
<div class="r" style="left:2404.4px;top:26.9px;width:7.2px;height:36.1px;background:#fff"></div>
<div class="r" style="left:2418.4px;top:26.9px;width:9.2px;height:36.1px;background:#fff"></div>
<div class="r" style="left:2426.4px;top:26.9px;width:7.2px;height:36.1px;background:#fff"></div>
<div class="r" style="left:2442.0px;top:26.9px;width:5.2px;height:36.1px;background:#fff"></div>
<div class="r" style="left:2456.4px;top:26.9px;width:8.6px;height:36.1px;background:#fff"></div>
<div class="r" style="left:2464.4px;top:26.9px;width:5.2px;height:36.1px;background:#fff"></div>
<div class="r" style="left:2.4px;top:62.9px;width:6.6px;height:36.1px;background:#fff"></div>
<div class="r" style="left:8.6px;top:62.9px;width:20.8px;height:36.1px;background:#fff"></div>
<div class="r" style="left:28.7px;top:62.9px;width:144.6px;height:36.1px;background:#fff"></div>
<div class="r" style="left:173.9px;top:62.9px;width:7.6px;height:36.1px;background:#fff"></div>
<div class="r" style="left:182.6px;top:62.9px;width:8.7px;height:36.1px;background:#fff"></div>
<div class="r" style="left:190.4px;top:62.9px;width:5.1px;height:36.1px;background:#fff"></div>
<div class="r" style="left:198.4px;top:62.9px;width:5.1px;height:36.1px;background:#fff"></div>
<div class="r" style="left:204.6px;top:62.9px;width:7.0px;height:36.1px;background:#fff"></div>
<div class="r" style="left:212.6px;top:62.9px;width:5.1px;height:36.1px;background:#fff"></div>
<div class="r" style="left:218.4px;top:62.9px;width:5.1px;height:36.1px;background:#fff"></div>
<div class="r" style="left:222.6px;top:62.9px;width:5.1px;height:36.1px;background:#fff"></div>
<div class="r" style="left:226.4px;top:62.9px;width:5.0px;height:36.1px;background:#fff"></div>
<div class="r" style="left:234.4px;top:62.9px;width:5.0px;height:36.1px;background:#fff"></div>
<div class="r" style="left:240.4px;top:62.9px;width:5.1px;height:36.1px;background:#fff"></div>
<div class="r" style="left:248.4px;top:62.9px;width:5.1px;height:36.1px;background:#fff"></div>
<div class="r" style="left:254.5px;top:62.9px;width:5.1px;height:36.1px;background:#fff"></div>
<div class="r" style="left:258.4px;top:62.9px;width:5.1px;height:36.1px;background:#fff"></div>
<div class="r" style="left:262.4px;top:62.9px;width:5.1px;height:36.1px;background:#fff"></div>
<div class="r" style="left:270.4px;top:62.9px;width:5.1px;height:36.1px;background:#fff"></div>
<div class="r" style="left:276.4px;top:62.9px;width:5.0px;height:36.1px;background:#fff"></div>
<div class="r" style="left:280.4px;top:62.9px;width:22.7px;height:36.1px;background:#fff"></div>
<div class="r" style="left:304.4px;top:62.9px;width:1943.2px;height:36.1px;background:#fff"></div>
<div class="r" style="left:2248.4px;top:62.9px;width:6.7px;height:36.1px;background:#fff"></div>
<div class="r" style="left:2254.4px;top:62.9px;width:128.8px;height:36.1px;background:#fff"></div>
<div class="r" style="left:2384.6px;top:62.9px;width:5.0px;height:36.1px;background:#fff"></div>
<div class="r" style="left:2390.5px;top:62.9px;width:7.2px;height:36.1px;background:#fff"></div>
<div class="r" style="left:2398.4px;top:62.9px;width:5.2px;height:36.1px;background:#fff"></div>
<div class="r" style="left:2405.4px;top:62.9px;width:5.2px;height:36.1px;background:#fff"></div>
<div class="r" style="left:2418.4px;top:62.9px;width:9.2px;height:36.1px;background:#fff"></div>
<div class="r" style="left:2426.4px;top:62.9px;width:7.2px;height:36.1px;background:#fff"></div>
<div class="r" style="left:2442.0px;top:62.9px;width:5.2px;height:36.1px;background:#fff"></div>
<div class="r" style="left:2456.4px;top:62.9px;width:8.6px;height:36.1px;background:#fff"></div>
<div class="r" style="left:2464.4px;top:62.9px;width:5.2px;height:36.1px;background:#fff"></div>
<div class="r" style="left:2.4px;top:98.9px;width:6.6px;height:36.1px;background:#fff"></div>
<div class="r" style="left:8.6px;top:98.9px;width:20.8px;height:36.1px;background:#fff"></div>
<div class="r" style="left:28.7px;top:98.9px;width:144.6px;height:36.1px;background:#fff"></div>
<div class="r" style="left:173.9px;top:98.9px;width:7.6px;height:36.1px;background:#fff"></div>
<div class="r" style="left:182.6px;top:98.9px;width:5.0px;height:36.1px;background:#fff"></div>
<div class="r" style="left:186.4px;top:98.9px;width:5.0px;height:36.1px;background:#fff"></div>
<div class="r" style="left:190.4px;top:98.9px;width:5.1px;height:36.1px;background:#fff"></div>
<div class="r" style="left:198.4px;top:98.9px;width:5.1px;height:36.1px;background:#fff"></div>
<div class="r" style="left:204.6px;top:98.9px;width:7.0px;height:36.1px;background:#fff"></div>
<div class="r" style="left:212.6px;top:98.9px;width:5.1px;height:36.1px;background:#fff"></div>
<div class="r" style="left:218.4px;top:98.9px;width:5.1px;height:36.1px;background:#fff"></div>
<div class="r" style="left:222.6px;top:98.9px;width:5.1px;height:36.1px;background:#fff"></div>
<div class="r" style="left:226.4px;top:98.9px;width:5.0px;height:36.1px;background:#fff"></div>
<div class="r" style="left:234.4px;top:98.9px;width:5.0px;height:36.1px;background:#fff"></div>
<div class="r" style="left:240.4px;top:98.9px;width:5.1px;height:36.1px;background:#fff"></div>
<div class="r" style="left:248.4px;top:98.9px;width:5.1px;height:36.1px;background:#fff"></div>
<div class="r" style="left:254.5px;top:98.9px;width:5.1px;height:36.1px;background:#fff"></div>
<div class="r" style="left:258.4px;top:98.9px;width:5.1px;height:36.1px;background:#fff"></div>
<div class="r" style="left:262.4px;top:98.9px;width:5.1px;height:36.1px;background:#fff"></div>
<div class="r" style="left:270.4px;top:98.9px;width:5.1px;height:36.1px;background:#fff"></div>
<div class="r" style="left:276.4px;top:98.9px;width:5.0px;height:36.1px;background:#fff"></div>
<div class="r" style="left:280.4px;top:98.9px;width:10.9px;height:36.1px;background:#fff"></div>
<div class="r" style="left:290.4px;top:98.9px;width:12.7px;height:36.1px;background:#fff"></div>
<div class="r" style="left:304.4px;top:98.9px;width:1943.2px;height:36.1px;background:#fff"></div>
<div class="r" style="left:2248.4px;top:98.9px;width:6.7px;height:36.1px;background:#fff"></div>
<div class="r" style="left:2254.4px;top:98.9px;width:128.8px;height:36.1px;background:#fff"></div>
<div class="r" style="left:2384.6px;top:98.9px;width:5.0px;height:36.1px;background:#fff"></div>
<div class="r" style="left:2390.5px;top:98.9px;width:7.2px;height:36.1px;background:#fff"></div>
<div class="r" style="left:2398.4px;top:98.9px;width:5.2px;height:36.1px;background:#fff"></div>
<div class="r" style="left:2405.4px;top:98.9px;width:5.2px;height:36.1px;background:#fff"></div>
<div class="r" style="left:2419.4px;top:98.9px;width:5.2px;height:36.1px;background:#fff"></div>
<div class="r" style="left:2426.4px;top:98.9px;width:7.2px;height:36.1px;background:#fff"></div>
<div class="r" style="left:2442.0px;top:98.9px;width:5.2px;height:36.1px;background:#fff"></div>
<div class="r" style="left:2456.4px;top:98.9px;width:8.6px;height:36.1px;background:#fff"></div>
<div class="r" style="left:2464.4px;top:98.9px;width:5.2px;height:36.1px;background:#fff"></div>
<div class="r" style="left:2.4px;top:134.9px;width:6.6px;height:36.1px;background:#fff"></div>
<div class="r" style="left:8.6px;top:134.9px;width:16.8px;height:36.1px;background:#fff"></div>
<div class="r" style="left:24.4px;top:134.9px;width:5.2px;height:36.1px;background:#fff"></div>
<div class="r" style="left:28.7px;top:134.9px;width:144.6px;height:36.1px;background:#fff"></div>
<div class="r" style="left:173.9px;top:134.9px;width:7.6px;height:36.1px;background:#fff"></div>
<div class="r" style="left:182.6px;top:134.9px;width:5.0px;height:36.1px;background:#fff"></div>
<div class="r" style="left:186.4px;top:134.9px;width:5.0px;height:36.1px;background:#fff"></div>
<div class="r" style="left:190.4px;top:134.9px;width:5.1px;height:36.1px;background:#fff"></div>
<div class="r" style="left:198.4px;top:134.9px;width:5.1px;height:36.1px;background:#fff"></div>
<div class="r" style="left:204.6px;top:134.9px;width:7.0px;height:36.1px;background:#fff"></div>
<div class="r" style="left:212.6px;top:134.9px;width:5.1px;height:36.1px;background:#fff"></div>
<div class="r" style="left:218.4px;top:134.9px;width:5.1px;height:36.1px;background:#fff"></div>
<div class="r" style="left:226.4px;top:134.9px;width:5.0px;height:36.1px;background:#fff"></div>
<div class="r" style="left:234.4px;top:134.9px;width:5.0px;height:36.1px;background:#fff"></div>
<div class="r" style="left:240.4px;top:134.9px;width:5.1px;height:36.1px;background:#fff"></div>
<div class="r" style="left:248.4px;top:134.9px;width:5.1px;height:36.1px;background:#fff"></div>
<div class="r" style="left:254.5px;top:134.9px;width:5.1px;height:36.1px;background:#fff"></div>
<div class="r" style="left:258.4px;top:134.9px;width:5.1px;height:36.1px;background:#fff"></div>
<div class="r" style="left:262.4px;top:134.9px;width:5.1px;height:36.1px;background:#fff"></div>
<div class="r" style="left:270.4px;top:134.9px;width:5.1px;height:36.1px;background:#fff"></div>
<div class="r" style="left:276.4px;top:134.9px;width:5.0px;height:36.1px;background:#fff"></div>
<div class="r" style="left:282.4px;top:134.9px;width:7.2px;height:36.1px;background:#fff"></div>
<div class="r" style="left:290.4px;top:134.9px;width:12.7px;height:36.1px;background:#fff"></div>
<div class="r" style="left:304.4px;top:134.9px;width:1943.2px;height:36.1px;background:#fff"></div>
<div class="r" style="left:2248.4px;top:134.9px;width:6.7px;height:36.1px;background:#fff"></div>
<div class="r" style="left:2254.4px;top:134.9px;width:67.0px;height:36.1px;background:#fff"></div>
<div class="r" style="left:2320.4px;top:134.9px;width:62.8px;height:36.1px;background:#fff"></div>
<div class="r" style="left:2384.6px;top:134.9px;width:5.0px;height:36.1px;background:#fff"></div>
<div class="r" style="left:2390.5px;top:134.9px;width:7.2px;height:36.1px;background:#fff"></div>
<div class="r" style="left:2398.4px;top:134.9px;width:5.2px;height:36.1px;background:#fff"></div>
<div class="r" style="left:2405.4px;top:134.9px;width:5.2px;height:36.1px;background:#fff"></div>
<div class="r" style="left:2419.4px;top:134.9px;width:5.2px;height:36.1px;background:#fff"></div>
<div class="r" style="left:2426.4px;top:134.9px;width:7.2px;height:36.1px;background:#fff"></div>
<div class="r" style="left:2442.0px;top:134.9px;width:5.2px;height:36.1px;background:#fff"></div>
<div class="r" style="left:2456.4px;top:134.9px;width:8.6px;height:36.1px;background:#fff"></div>
<div class="r" style="left:2464.4px;top:134.9px;width:5.2px;height:36.1px;background:#fff"></div>
<div class="r" style="left:2.4px;top:170.9px;width:6.6px;height:36.1px;background:#fff"></div>
<div class="r" style="left:8.6px;top:170.9px;width:16.8px;height:36.1px;background:#fff"></div>
<div class="r" style="left:24.4px;top:170.9px;width:5.2px;height:36.1px;background:#fff"></div>
<div class="r" style="left:28.7px;top:170.9px;width:144.6px;height:36.1px;background:#fff"></div>
<div class="r" style="left:173.9px;top:170.9px;width:7.6px;height:36.1px;background:#fff"></div>
<div class="r" style="left:182.6px;top:170.9px;width:5.0px;height:36.1px;background:#fff"></div>
<div class="r" style="left:186.4px;top:170.9px;width:5.0px;height:36.1px;background:#fff"></div>
<div class="r" style="left:190.4px;top:170.9px;width:5.1px;height:36.1px;background:#fff"></div>
<div class="r" style="left:198.4px;top:170.9px;width:5.1px;height:36.1px;background:#fff"></div>
<div class="r" style="left:204.6px;top:170.9px;width:7.0px;height:36.1px;background:#fff"></div>
<div class="r" style="left:212.6px;top:170.9px;width:5.1px;height:36.1px;background:#fff"></div>
<div class="r" style="left:218.4px;top:170.9px;width:5.1px;height:36.1px;background:#fff"></div>
<div class="r" style="left:226.4px;top:170.9px;width:5.0px;height:36.1px;background:#fff"></div>
<div class="r" style="left:234.4px;top:170.9px;width:5.0px;height:36.1px;background:#fff"></div>
<div class="r" style="left:240.4px;top:170.9px;width:5.1px;height:36.1px;background:#fff"></div>
<div class="r" style="left:248.4px;top:170.9px;width:5.1px;height:36.1px;background:#fff"></div>
<div class="r" style="left:254.5px;top:170.9px;width:5.1px;height:36.1px;background:#fff"></div>
<div class="r" style="left:258.4px;top:170.9px;width:5.1px;height:36.1px;background:#fff"></div>
<div class="r" style="left:262.4px;top:170.9px;width:5.1px;height:36.1px;background:#fff"></div>
<div class="r" style="left:270.4px;top:170.9px;width:5.1px;height:36.1px;background:#fff"></div>
<div class="r" style="left:276.4px;top:170.9px;width:5.0px;height:36.1px;background:#fff"></div>
<div class="r" style="left:282.6px;top:170.9px;width:7.0px;height:36.1px;background:#fff"></div>
<div class="r" style="left:290.4px;top:170.9px;width:5.1px;height:36.1px;background:#fff"></div>
<div class="r" style="left:298.4px;top:170.9px;width:5.2px;height:36.1px;background:#fff"></div>
<div class="r" style="left:304.4px;top:170.9px;width:1943.2px;height:36.1px;background:#fff"></div>
<div class="r" style="left:2248.4px;top:170.9px;width:6.7px;height:36.1px;background:#fff"></div>
<div class="r" style="left:2254.4px;top:170.9px;width:65.1px;height:36.1px;background:#fff"></div>
<div class="r" style="left:2320.4px;top:170.9px;width:62.8px;height:36.1px;background:#fff"></div>
<div class="r" style="left:2384.6px;top:170.9px;width:5.0px;height:36.1px;background:#fff"></div>
<div class="r" style="left:2390.5px;top:170.9px;width:7.2px;height:36.1px;background:#fff"></div>
<div class="r" style="left:2398.4px;top:170.9px;width:5.2px;height:36.1px;background:#fff"></div>
<div class="r" style="left:2405.4px;top:170.9px;width:5.2px;height:36.1px;background:#fff"></div>
<div class="r" style="left:2442.0px;top:170.9px;width:5.2px;height:36.1px;background:#fff"></div>
<div class="r" style="left:2456.4px;top:170.9px;width:8.6px;height:36.1px;background:#fff"></div>
<div class="r" style="left:2.4px;top:206.9px;width:6.6px;height:36.1px;background:#fff"></div>
<div class="r" style="left:8.6px;top:206.9px;width:14.7px;height:36.1px;background:#fff"></div>
<div class="r" style="left:23.4px;top:206.9px;width:5.2px;height:36.1px;background:#fff"></div>
<div class="r" style="left:28.7px;top:206.9px;width:144.6px;height:36.1px;background:#fff"></div>
<div class="r" style="left:173.9px;top:206.9px;width:7.6px;height:36.1px;background:#fff"></div>
<div class="r" style="left:182.6px;top:206.9px;width:5.0px;height:36.1px;background:#fff"></div>
<div class="r" style="left:186.4px;top:206.9px;width:5.0px;height:36.1px;background:#fff"></div>
<div class="r" style="left:190.4px;top:206.9px;width:5.1px;height:36.1px;background:#fff"></div>
<div class="r" style="left:198.4px;top:206.9px;width:5.1px;height:36.1px;background:#fff"></div>
<div class="r" style="left:204.6px;top:206.9px;width:7.0px;height:36.1px;background:#fff"></div>
<div class="r" style="left:212.6px;top:206.9px;width:5.1px;height:36.1px;background:#fff"></div>
<div class="r" style="left:218.4px;top:206.9px;width:5.1px;height:36.1px;background:#fff"></div>
<div class="r" style="left:226.4px;top:206.9px;width:5.0px;height:36.1px;background:#fff"></div>
<div class="r" style="left:234.4px;top:206.9px;width:5.0px;height:36.1px;background:#fff"></div>
<div class="r" style="left:240.4px;top:206.9px;width:5.1px;height:36.1px;background:#fff"></div>
<div class="r" style="left:248.4px;top:206.9px;width:5.1px;height:36.1px;background:#fff"></div>
<div class="r" style="left:254.5px;top:206.9px;width:5.1px;height:36.1px;background:#fff"></div>
<div class="r" style="left:258.4px;top:206.9px;width:5.1px;height:36.1px;background:#fff"></div>
<div class="r" style="left:262.4px;top:206.9px;width:5.1px;height:36.1px;background:#fff"></div>
<div class="r" style="left:270.4px;top:206.9px;width:5.1px;height:36.1px;background:#fff"></div>
<div class="r" style="left:276.4px;top:206.9px;width:5.0px;height:36.1px;background:#fff"></div>
<div class="r" style="left:282.6px;top:206.9px;width:7.0px;height:36.1px;background:#fff"></div>
<div class="r" style="left:290.4px;top:206.9px;width:5.1px;height:36.1px;background:#fff"></div>
<div class="r" style="left:298.4px;top:206.9px;width:5.2px;height:36.1px;background:#fff"></div>
<div class="r" style="left:304.4px;top:206.9px;width:385.2px;height:36.1px;background:#fff"></div>
<div class="r" style="left:688.7px;top:206.9px;width:1558.9px;height:36.1px;background:#fff"></div>
<div class="r" style="left:2248.4px;top:206.9px;width:6.7px;height:36.1px;background:#fff"></div>
<div class="r" style="left:2254.4px;top:206.9px;width:65.1px;height:36.1px;background:#fff"></div>
<div class="r" style="left:2320.4px;top:206.9px;width:62.8px;height:36.1px;background:#fff"></div>
<div class="r" style="left:2384.6px;top:206.9px;width:5.0px;height:36.1px;background:#fff"></div>
<div class="r" style="left:2391.4px;top:206.9px;width:5.2px;height:36.1px;background:#fff"></div>
<div class="r" style="left:2398.4px;top:206.9px;width:5.2px;height:36.1px;background:#fff"></div>
<div class="r" style="left:2442.0px;top:206.9px;width:5.2px;height:36.1px;background:#fff"></div>
<div class="r" style="left:2456.4px;top:206.9px;width:8.6px;height:36.1px;background:#fff"></div>
<div class="r" style="left:2.4px;top:242.9px;width:6.6px;height:36.1px;background:#fff"></div>
<div class="r" style="left:8.6px;top:242.9px;width:14.7px;height:36.1px;background:#fff"></div>
<div class="r" style="left:24.4px;top:242.9px;width:5.2px;height:36.1px;background:#fff"></div>
<div class="r" style="left:28.7px;top:242.9px;width:9.4px;height:36.1px;background:#fff"></div>
<div class="r" style="left:36.9px;top:242.9px;width:136.4px;height:36.1px;background:#fff"></div>
<div class="r" style="left:173.9px;top:242.9px;width:7.6px;height:36.1px;background:#fff"></div>
<div class="r" style="left:182.6px;top:242.9px;width:5.0px;height:36.1px;background:#fff"></div>
<div class="r" style="left:190.4px;top:242.9px;width:5.1px;height:36.1px;background:#fff"></div>
<div class="r" style="left:198.4px;top:242.9px;width:5.1px;height:36.1px;background:#fff"></div>
<div class="r" style="left:204.6px;top:242.9px;width:7.0px;height:36.1px;background:#fff"></div>
<div class="r" style="left:212.6px;top:242.9px;width:5.1px;height:36.1px;background:#fff"></div>
<div class="r" style="left:218.4px;top:242.9px;width:5.1px;height:36.1px;background:#fff"></div>
<div class="r" style="left:226.4px;top:242.9px;width:5.0px;height:36.1px;background:#fff"></div>
<div class="r" style="left:234.4px;top:242.9px;width:5.0px;height:36.1px;background:#fff"></div>
<div class="r" style="left:240.4px;top:242.9px;width:5.1px;height:36.1px;background:#fff"></div>
<div class="r" style="left:248.4px;top:242.9px;width:5.1px;height:36.1px;background:#fff"></div>
<div class="r" style="left:254.5px;top:242.9px;width:5.1px;height:36.1px;background:#fff"></div>
<div class="r" style="left:258.4px;top:242.9px;width:5.1px;height:36.1px;background:#fff"></div>
<div class="r" style="left:262.4px;top:242.9px;width:5.1px;height:36.1px;background:#fff"></div>
<div class="r" style="left:270.4px;top:242.9px;width:5.1px;height:36.1px;background:#fff"></div>
<div class="r" style="left:282.6px;top:242.9px;width:7.0px;height:36.1px;background:#fff"></div>
<div class="r" style="left:290.4px;top:242.9px;width:5.1px;height:36.1px;background:#fff"></div>
<div class="r" style="left:298.4px;top:242.9px;width:5.2px;height:36.1px;background:#fff"></div>
<div class="r" style="left:304.4px;top:242.9px;width:385.2px;height:36.1px;background:#fff"></div>
<div class="r" style="left:688.7px;top:242.9px;width:1558.9px;height:36.1px;background:#fff"></div>
<div class="r" style="left:2248.4px;top:242.9px;width:6.7px;height:36.1px;background:#fff"></div>
<div class="r" style="left:2254.4px;top:242.9px;width:65.1px;height:36.1px;background:#fff"></div>
<div class="r" style="left:2320.4px;top:242.9px;width:62.8px;height:36.1px;background:#fff"></div>
<div class="r" style="left:2384.6px;top:242.9px;width:5.0px;height:36.1px;background:#fff"></div>
<div class="r" style="left:2391.4px;top:242.9px;width:5.2px;height:36.1px;background:#fff"></div>
<div class="r" style="left:2398.4px;top:242.9px;width:5.2px;height:36.1px;background:#fff"></div>
<div class="r" style="left:2442.0px;top:242.9px;width:5.2px;height:36.1px;background:#fff"></div>
<div class="r" style="left:2456.4px;top:242.9px;width:8.6px;height:36.1px;background:#fff"></div>
<div class="r" style="left:2.4px;top:278.9px;width:6.6px;height:36.1px;background:#fff"></div>
<div class="r" style="left:8.6px;top:278.9px;width:14.8px;height:36.1px;background:#fff"></div>
<div class="r" style="left:24.4px;top:278.9px;width:5.2px;height:36.1px;background:#fff"></div>
<div class="r" style="left:28.9px;top:278.9px;width:8.4px;height:36.1px;background:#fff"></div>
<div class="r" style="left:38.4px;top:278.9px;width:34.6px;height:36.1px;background:#fff"></div>
<div class="r" style="left:73.0px;top:278.9px;width:13.1px;height:36.1px;background:#fff"></div>
<div class="r" style="left:86.9px;top:278.9px;width:80.2px;height:36.1px;background:#fff"></div>
<div class="r" style="left:166.4px;top:278.9px;width:6.8px;height:36.1px;background:#fff"></div>
<div class="r" style="left:173.9px;top:278.9px;width:7.6px;height:36.1px;background:#fff"></div>
<div class="r" style="left:182.6px;top:278.9px;width:5.0px;height:36.1px;background:#fff"></div>
<div class="r" style="left:190.4px;top:278.9px;width:5.1px;height:36.1px;background:#fff"></div>
<div class="r" style="left:198.4px;top:278.9px;width:5.1px;height:36.1px;background:#fff"></div>
<div class="r" style="left:204.6px;top:278.9px;width:7.0px;height:36.1px;background:#fff"></div>
<div class="r" style="left:212.6px;top:278.9px;width:5.1px;height:36.1px;background:#fff"></div>
<div class="r" style="left:218.4px;top:278.9px;width:5.1px;height:36.1px;background:#fff"></div>
<div class="r" style="left:226.4px;top:278.9px;width:5.0px;height:36.1px;background:#fff"></div>
<div class="r" style="left:234.4px;top:278.9px;width:5.0px;height:36.1px;background:#fff"></div>
<div class="r" style="left:240.4px;top:278.9px;width:5.1px;height:36.1px;background:#fff"></div>
<div class="r" style="left:248.4px;top:278.9px;width:5.1px;height:36.1px;background:#fff"></div>
<div class="r" style="left:254.5px;top:278.9px;width:5.1px;height:36.1px;background:#fff"></div>
<div class="r" style="left:258.4px;top:278.9px;width:5.1px;height:36.1px;background:#fff"></div>
<div class="r" style="left:262.4px;top:278.9px;width:5.1px;height:36.1px;background:#fff"></div>
<div class="r" style="left:270.4px;top:278.9px;width:5.1px;height:36.1px;background:#fff"></div>
<div class="r" style="left:282.6px;top:278.9px;width:7.0px;height:36.1px;background:#fff"></div>
<div class="r" style="left:290.4px;top:278.9px;width:5.1px;height:36.1px;background:#fff"></div>
<div class="r" style="left:298.4px;top:278.9px;width:5.2px;height:36.1px;background:#fff"></div>
<div class="r" style="left:304.6px;top:278.9px;width:7.2px;height:36.1px;background:#fff"></div>
<div class="r" style="left:311.0px;top:278.9px;width:7.9px;height:36.1px;background:#fff"></div>
<div class="r" style="left:318.8px;top:278.9px;width:360.8px;height:36.1px;background:#fff"></div>
<div class="r" style="left:678.7px;top:278.9px;width:10.3px;height:36.1px;background:#fff"></div>
<div class="r" style="left:688.7px;top:278.9px;width:1190.6px;height:36.1px;background:#fff"></div>
<div class="r" style="left:1878.4px;top:278.9px;width:349.2px;height:36.1px;background:#fff"></div>
<div class="r" style="left:2226.7px;top:278.9px;width:20.7px;height:36.1px;background:#fff"></div>
<div class="r" style="left:2248.4px;top:278.9px;width:5.5px;height:36.1px;background:#fff"></div>
<div class="r" style="left:2254.6px;top:278.9px;width:64.8px;height:36.1px;background:#fff"></div>
<div class="r" style="left:2320.4px;top:278.9px;width:63.0px;height:36.1px;background:#fff"></div>
<div class="r" style="left:2392.6px;top:278.9px;width:4.8px;height:36.1px;background:#fff"></div>
<div class="r" style="left:2398.4px;top:278.9px;width:4.7px;height:36.1px;background:#fff"></div>
<div class="r" style="left:2442.2px;top:278.9px;width:5.3px;height:36.1px;background:#fff"></div>
<div class="r" style="left:2456.2px;top:278.9px;width:9.4px;height:36.1px;background:#fff"></div>
<div class="r" style="left:2.4px;top:314.9px;width:6.6px;height:36.1px;background:#fff"></div>
<div class="r" style="left:8.6px;top:314.9px;width:14.8px;height:36.1px;background:#fff"></div>
<div class="r" style="left:24.4px;top:314.9px;width:5.2px;height:36.1px;background:#fff"></div>
<div class="r" style="left:30.6px;top:314.9px;width:6.7px;height:36.1px;background:#fff"></div>
<div class="r" style="left:38.8px;top:314.9px;width:4.6px;height:36.1px;background:#fff"></div>
<div class="r" style="left:42.8px;top:314.9px;width:30.2px;height:36.1px;background:#fff"></div>
<div class="r" style="left:75.1px;top:314.9px;width:4.9px;height:36.1px;background:#fff"></div>
<div class="r" style="left:78.9px;top:314.9px;width:8.1px;height:36.1px;background:#fff"></div>
<div class="r" style="left:86.9px;top:314.9px;width:80.2px;height:36.1px;background:#fff"></div>
<div class="r" style="left:166.4px;top:314.9px;width:6.8px;height:36.1px;background:#fff"></div>
<div class="r" style="left:173.9px;top:314.9px;width:7.6px;height:36.1px;background:#fff"></div>
<div class="r" style="left:182.6px;top:314.9px;width:5.0px;height:36.1px;background:#fff"></div>
<div class="r" style="left:190.4px;top:314.9px;width:5.1px;height:36.1px;background:#fff"></div>
<div class="r" style="left:198.4px;top:314.9px;width:5.1px;height:36.1px;background:#fff"></div>
<div class="r" style="left:204.6px;top:314.9px;width:5.1px;height:36.1px;background:#fff"></div>
<div class="r" style="left:212.6px;top:314.9px;width:5.1px;height:36.1px;background:#fff"></div>
<div class="r" style="left:218.4px;top:314.9px;width:5.1px;height:36.1px;background:#fff"></div>
<div class="r" style="left:226.4px;top:314.9px;width:5.0px;height:36.1px;background:#fff"></div>
<div class="r" style="left:234.4px;top:314.9px;width:5.0px;height:36.1px;background:#fff"></div>
<div class="r" style="left:240.4px;top:314.9px;width:5.1px;height:36.1px;background:#fff"></div>
<div class="r" style="left:248.4px;top:314.9px;width:5.1px;height:36.1px;background:#fff"></div>
<div class="r" style="left:254.5px;top:314.9px;width:5.1px;height:36.1px;background:#fff"></div>
<div class="r" style="left:258.4px;top:314.9px;width:5.1px;height:36.1px;background:#fff"></div>
<div class="r" style="left:262.4px;top:314.9px;width:5.1px;height:36.1px;background:#fff"></div>
<div class="r" style="left:270.4px;top:314.9px;width:5.1px;height:36.1px;background:#fff"></div>
<div class="r" style="left:282.6px;top:314.9px;width:7.0px;height:36.1px;background:#fff"></div>
<div class="r" style="left:290.4px;top:314.9px;width:5.1px;height:36.1px;background:#fff"></div>
<div class="r" style="left:298.4px;top:314.9px;width:5.2px;height:36.1px;background:#fff"></div>
<div class="r" style="left:304.6px;top:314.9px;width:7.2px;height:36.1px;background:#fff"></div>
<div class="r" style="left:311.0px;top:314.9px;width:7.9px;height:36.1px;background:#fff"></div>
<div class="r" style="left:318.8px;top:314.9px;width:360.8px;height:36.1px;background:#fff"></div>
<div class="r" style="left:678.7px;top:314.9px;width:8.7px;height:36.1px;background:#fff"></div>
<div class="r" style="left:688.7px;top:314.9px;width:1190.6px;height:36.1px;background:#fff"></div>
<div class="r" style="left:1878.4px;top:314.9px;width:349.2px;height:36.1px;background:#fff"></div>
<div class="r" style="left:2226.7px;top:314.9px;width:14.7px;height:36.1px;background:#fff"></div>
<div class="r" style="left:2240.7px;top:314.9px;width:4.7px;height:36.1px;background:#fff"></div>
<div class="r" style="left:2248.4px;top:314.9px;width:5.5px;height:36.1px;background:#fff"></div>
<div class="r" style="left:2254.4px;top:314.9px;width:59.2px;height:36.1px;background:#fff"></div>
<div class="r" style="left:2312.4px;top:314.9px;width:4.8px;height:36.1px;background:#fff"></div>
<div class="r" style="left:2320.4px;top:314.9px;width:63.0px;height:36.1px;background:#fff"></div>
<div class="r" style="left:2392.2px;top:314.9px;width:5.2px;height:36.1px;background:#fff"></div>
<div class="r" style="left:2398.4px;top:314.9px;width:4.7px;height:36.1px;background:#fff"></div>
<div class="r" style="left:2457.0px;top:314.9px;width:6.3px;height:36.1px;background:#fff"></div>
<div class="r" style="left:2.4px;top:350.9px;width:6.6px;height:36.1px;background:#fff"></div>
<div class="r" style="left:8.6px;top:350.9px;width:14.8px;height:36.1px;background:#fff"></div>
<div class="r" style="left:24.4px;top:350.9px;width:5.2px;height:36.1px;background:#fff"></div>
<div class="r" style="left:30.6px;top:350.9px;width:6.7px;height:36.1px;background:#fff"></div>
<div class="r" style="left:38.4px;top:350.9px;width:5.0px;height:36.1px;background:#fff"></div>
<div class="r" style="left:42.8px;top:350.9px;width:30.2px;height:36.1px;background:#fff"></div>
<div class="r" style="left:75.1px;top:350.9px;width:4.9px;height:36.1px;background:#fff"></div>
<div class="r" style="left:79.4px;top:350.9px;width:7.6px;height:36.1px;background:#fff"></div>
<div class="r" style="left:86.9px;top:350.9px;width:80.2px;height:36.1px;background:#fff"></div>
<div class="r" style="left:166.4px;top:350.9px;width:6.8px;height:36.1px;background:#fff"></div>
<div class="r" style="left:173.9px;top:350.9px;width:7.6px;height:36.1px;background:#fff"></div>
<div class="r" style="left:182.6px;top:350.9px;width:5.0px;height:36.1px;background:#fff"></div>
<div class="r" style="left:190.4px;top:350.9px;width:5.1px;height:36.1px;background:#fff"></div>
<div class="r" style="left:198.4px;top:350.9px;width:5.1px;height:36.1px;background:#fff"></div>
<div class="r" style="left:204.6px;top:350.9px;width:5.1px;height:36.1px;background:#fff"></div>
<div class="r" style="left:212.6px;top:350.9px;width:5.1px;height:36.1px;background:#fff"></div>
<div class="r" style="left:218.4px;top:350.9px;width:5.1px;height:36.1px;background:#fff"></div>
<div class="r" style="left:226.4px;top:350.9px;width:5.0px;height:36.1px;background:#fff"></div>
<div class="r" style="left:234.4px;top:350.9px;width:5.0px;height:36.1px;background:#fff"></div>
<div class="r" style="left:240.4px;top:350.9px;width:5.1px;height:36.1px;background:#fff"></div>
<div class="r" style="left:248.4px;top:350.9px;width:5.1px;height:36.1px;background:#fff"></div>
<div class="r" style="left:254.5px;top:350.9px;width:5.1px;height:36.1px;background:#fff"></div>
<div class="r" style="left:258.4px;top:350.9px;width:5.1px;height:36.1px;background:#fff"></div>
<div class="r" style="left:262.4px;top:350.9px;width:5.1px;height:36.1px;background:#fff"></div>
<div class="r" style="left:270.4px;top:350.9px;width:5.1px;height:36.1px;background:#fff"></div>
<div class="r" style="left:282.6px;top:350.9px;width:7.0px;height:36.1px;background:#fff"></div>
<div class="r" style="left:290.4px;top:350.9px;width:5.1px;height:36.1px;background:#fff"></div>
<div class="r" style="left:298.4px;top:350.9px;width:5.2px;height:36.1px;background:#fff"></div>
<div class="r" style="left:304.6px;top:350.9px;width:7.2px;height:36.1px;background:#fff"></div>
<div class="r" style="left:311.0px;top:350.9px;width:7.9px;height:36.1px;background:#fff"></div>
<div class="r" style="left:318.8px;top:350.9px;width:360.8px;height:36.1px;background:#fff"></div>
<div class="r" style="left:678.7px;top:350.9px;width:6.3px;height:36.1px;background:#fff"></div>
<div class="r" style="left:688.7px;top:350.9px;width:1190.6px;height:36.1px;background:#fff"></div>
<div class="r" style="left:1878.4px;top:350.9px;width:349.2px;height:36.1px;background:#fff"></div>
<div class="r" style="left:2226.7px;top:350.9px;width:10.9px;height:36.1px;background:#fff"></div>
<div class="r" style="left:2236.8px;top:350.9px;width:4.4px;height:36.1px;background:#fff"></div>
<div class="r" style="left:2240.7px;top:350.9px;width:4.7px;height:36.1px;background:#fff"></div>
<div class="r" style="left:2248.4px;top:350.9px;width:5.5px;height:36.1px;background:#fff"></div>
<div class="r" style="left:2254.4px;top:350.9px;width:57.2px;height:36.1px;background:#fff"></div>
<div class="r" style="left:2312.4px;top:350.9px;width:4.8px;height:36.1px;background:#fff"></div>
<div class="r" style="left:2320.4px;top:350.9px;width:63.0px;height:36.1px;background:#fff"></div>
<div class="r" style="left:2392.2px;top:350.9px;width:5.2px;height:36.1px;background:#fff"></div>
<div class="r" style="left:2457.0px;top:350.9px;width:6.3px;height:36.1px;background:#fff"></div>
<div class="r" style="left:2.4px;top:386.9px;width:6.6px;height:36.1px;background:#fff"></div>
<div class="r" style="left:8.6px;top:386.9px;width:14.8px;height:36.1px;background:#fff"></div>
<div class="r" style="left:24.4px;top:386.9px;width:5.2px;height:36.1px;background:#fff"></div>
<div class="r" style="left:32.4px;top:386.9px;width:4.9px;height:36.1px;background:#fff"></div>
<div class="r" style="left:38.4px;top:386.9px;width:5.0px;height:36.1px;background:#fff"></div>
<div class="r" style="left:42.8px;top:386.9px;width:30.2px;height:36.1px;background:#fff"></div>
<div class="r" style="left:74.7px;top:386.9px;width:4.9px;height:36.1px;background:#fff"></div>
<div class="r" style="left:80.3px;top:386.9px;width:6.7px;height:36.1px;background:#fff"></div>
<div class="r" style="left:86.9px;top:386.9px;width:80.2px;height:36.1px;background:#fff"></div>
<div class="r" style="left:166.4px;top:386.9px;width:6.8px;height:36.1px;background:#fff"></div>
<div class="r" style="left:173.9px;top:386.9px;width:7.6px;height:36.1px;background:#fff"></div>
<div class="r" style="left:182.6px;top:386.9px;width:5.0px;height:36.1px;background:#fff"></div>
<div class="r" style="left:190.4px;top:386.9px;width:5.1px;height:36.1px;background:#fff"></div>
<div class="r" style="left:198.4px;top:386.9px;width:5.1px;height:36.1px;background:#fff"></div>
<div class="r" style="left:204.6px;top:386.9px;width:5.1px;height:36.1px;background:#fff"></div>
<div class="r" style="left:212.6px;top:386.9px;width:5.1px;height:36.1px;background:#fff"></div>
<div class="r" style="left:218.4px;top:386.9px;width:5.1px;height:36.1px;background:#fff"></div>
<div class="r" style="left:226.4px;top:386.9px;width:5.0px;height:36.1px;background:#fff"></div>
<div class="r" style="left:234.4px;top:386.9px;width:5.0px;height:36.1px;background:#fff"></div>
<div class="r" style="left:240.4px;top:386.9px;width:5.1px;height:36.1px;background:#fff"></div>
<div class="r" style="left:248.4px;top:386.9px;width:5.1px;height:36.1px;background:#fff"></div>
<div class="r" style="left:254.5px;top:386.9px;width:5.1px;height:36.1px;background:#fff"></div>
<div class="r" style="left:258.4px;top:386.9px;width:5.1px;height:36.1px;background:#fff"></div>
<div class="r" style="left:262.4px;top:386.9px;width:5.1px;height:36.1px;background:#fff"></div>
<div class="r" style="left:270.4px;top:386.9px;width:5.1px;height:36.1px;background:#fff"></div>
<div class="r" style="left:282.6px;top:386.9px;width:7.0px;height:36.1px;background:#fff"></div>
<div class="r" style="left:290.4px;top:386.9px;width:5.1px;height:36.1px;background:#fff"></div>
<div class="r" style="left:298.4px;top:386.9px;width:5.2px;height:36.1px;background:#fff"></div>
<div class="r" style="left:304.6px;top:386.9px;width:7.2px;height:36.1px;background:#fff"></div>
<div class="r" style="left:311.0px;top:386.9px;width:7.9px;height:36.1px;background:#fff"></div>
<div class="r" style="left:318.8px;top:386.9px;width:208.8px;height:36.1px;background:#fff"></div>
<div class="r" style="left:526.6px;top:386.9px;width:112.5px;height:36.1px;background:#fff"></div>
<div class="r" style="left:639.0px;top:386.9px;width:12.0px;height:36.1px;background:#fff"></div>
<div class="r" style="left:652.4px;top:386.9px;width:4.8px;height:36.1px;background:#fff"></div>
<div class="r" style="left:656.8px;top:386.9px;width:14.4px;height:36.1px;background:#fff"></div>
<div class="r" style="left:678.7px;top:386.9px;width:6.3px;height:36.1px;background:#fff"></div>
<div class="r" style="left:688.7px;top:386.9px;width:1190.6px;height:36.1px;background:#fff"></div>
<div class="r" style="left:1880.4px;top:386.9px;width:347.2px;height:36.1px;background:#fff"></div>
<div class="r" style="left:2226.7px;top:386.9px;width:10.9px;height:36.1px;background:#fff"></div>
<div class="r" style="left:2236.8px;top:386.9px;width:4.4px;height:36.1px;background:#fff"></div>
<div class="r" style="left:2240.7px;top:386.9px;width:4.7px;height:36.1px;background:#fff"></div>
<div class="r" style="left:2248.4px;top:386.9px;width:5.5px;height:36.1px;background:#fff"></div>
<div class="r" style="left:2254.4px;top:386.9px;width:57.2px;height:36.1px;background:#fff"></div>
<div class="r" style="left:2312.4px;top:386.9px;width:4.8px;height:36.1px;background:#fff"></div>
<div class="r" style="left:2320.4px;top:386.9px;width:63.0px;height:36.1px;background:#fff"></div>
<div class="r" style="left:2392.2px;top:386.9px;width:5.2px;height:36.1px;background:#fff"></div>
<div class="r" style="left:2457.0px;top:386.9px;width:6.3px;height:36.1px;background:#fff"></div>
<div class="r" style="left:2.4px;top:422.9px;width:6.6px;height:36.1px;background:#fff"></div>
<div class="r" style="left:8.6px;top:422.9px;width:14.8px;height:36.1px;background:#fff"></div>
<div class="r" style="left:32.4px;top:422.9px;width:4.9px;height:36.1px;background:#fff"></div>
<div class="r" style="left:38.4px;top:422.9px;width:5.0px;height:36.1px;background:#fff"></div>
<div class="r" style="left:42.8px;top:422.9px;width:30.2px;height:36.1px;background:#fff"></div>
<div class="r" style="left:75.1px;top:422.9px;width:4.9px;height:36.1px;background:#fff"></div>
<div class="r" style="left:80.3px;top:422.9px;width:6.7px;height:36.1px;background:#fff"></div>
<div class="r" style="left:24.4px;top:422.9px;width:5.2px;height:36.1px;background:#fff"></div>
<div class="r" style="left:132.4px;top:422.9px;width:4.9px;height:36.1px;background:#fff"></div>
<div class="r" style="left:86.9px;top:422.9px;width:46.2px;height:36.1px;background:#fff"></div>
<div class="r" style="left:136.0px;top:422.9px;width:11.1px;height:36.1px;background:#fff"></div>
<div class="r" style="left:146.4px;top:422.9px;width:15.2px;height:36.1px;background:#fff"></div>
<div class="r" style="left:160.4px;top:422.9px;width:6.7px;height:36.1px;background:#fff"></div>
<div class="r" style="left:166.4px;top:422.9px;width:6.8px;height:36.1px;background:#fff"></div>
<div class="r" style="left:173.9px;top:422.9px;width:7.6px;height:36.1px;background:#fff"></div>
<div class="r" style="left:182.6px;top:422.9px;width:5.0px;height:36.1px;background:#fff"></div>
<div class="r" style="left:190.4px;top:422.9px;width:5.1px;height:36.1px;background:#fff"></div>
<div class="r" style="left:198.4px;top:422.9px;width:5.1px;height:36.1px;background:#fff"></div>
<div class="r" style="left:204.6px;top:422.9px;width:5.1px;height:36.1px;background:#fff"></div>
<div class="r" style="left:212.6px;top:422.9px;width:5.1px;height:36.1px;background:#fff"></div>
<div class="r" style="left:218.4px;top:422.9px;width:5.1px;height:36.1px;background:#fff"></div>
<div class="r" style="left:226.4px;top:422.9px;width:5.0px;height:36.1px;background:#fff"></div>
<div class="r" style="left:234.4px;top:422.9px;width:5.0px;height:36.1px;background:#fff"></div>
<div class="r" style="left:240.4px;top:422.9px;width:5.1px;height:36.1px;background:#fff"></div>
<div class="r" style="left:248.4px;top:422.9px;width:5.1px;height:36.1px;background:#fff"></div>
<div class="r" style="left:254.5px;top:422.9px;width:5.1px;height:36.1px;background:#fff"></div>
<div class="r" style="left:258.4px;top:422.9px;width:5.1px;height:36.1px;background:#fff"></div>
<div class="r" style="left:262.4px;top:422.9px;width:5.1px;height:36.1px;background:#fff"></div>
<div class="r" style="left:270.4px;top:422.9px;width:5.1px;height:36.1px;background:#fff"></div>
<div class="r" style="left:282.6px;top:422.9px;width:7.0px;height:36.1px;background:#fff"></div>
<div class="r" style="left:290.4px;top:422.9px;width:5.1px;height:36.1px;background:#fff"></div>
<div class="r" style="left:298.4px;top:422.9px;width:5.2px;height:36.1px;background:#fff"></div>
<div class="r" style="left:304.6px;top:422.9px;width:7.2px;height:36.1px;background:#fff"></div>
<div class="r" style="left:311.0px;top:422.9px;width:7.9px;height:36.1px;background:#fff"></div>
<div class="r" style="left:318.8px;top:422.9px;width:208.8px;height:36.1px;background:#fff"></div>
<div class="r" style="left:526.6px;top:422.9px;width:112.5px;height:36.1px;background:#fff"></div>
<div class="r" style="left:639.0px;top:422.9px;width:12.0px;height:36.1px;background:#fff"></div>
<div class="r" style="left:652.4px;top:422.9px;width:4.8px;height:36.1px;background:#fff"></div>
<div class="r" style="left:656.8px;top:422.9px;width:14.4px;height:36.1px;background:#fff"></div>
<div class="r" style="left:678.7px;top:422.9px;width:6.3px;height:36.1px;background:#fff"></div>
<div class="r" style="left:688.7px;top:422.9px;width:1190.6px;height:36.1px;background:#fff"></div>
<div class="r" style="left:1880.4px;top:422.9px;width:347.2px;height:36.1px;background:#fff"></div>
<div class="r" style="left:2226.7px;top:422.9px;width:10.9px;height:36.1px;background:#fff"></div>
<div class="r" style="left:2236.8px;top:422.9px;width:4.4px;height:36.1px;background:#fff"></div>
<div class="r" style="left:2240.7px;top:422.9px;width:4.7px;height:36.1px;background:#fff"></div>
<div class="r" style="left:2248.4px;top:422.9px;width:5.5px;height:36.1px;background:#fff"></div>
<div class="r" style="left:2254.4px;top:422.9px;width:57.2px;height:36.1px;background:#fff"></div>
<div class="r" style="left:2312.4px;top:422.9px;width:4.8px;height:36.1px;background:#fff"></div>
<div class="r" style="left:2320.4px;top:422.9px;width:63.0px;height:36.1px;background:#fff"></div>
<div class="r" style="left:2392.2px;top:422.9px;width:5.2px;height:36.1px;background:#fff"></div>
<div class="r" style="left:2457.0px;top:422.9px;width:6.3px;height:36.1px;background:#fff"></div>
<div class="r" style="left:2.4px;top:458.9px;width:6.6px;height:36.1px;background:#fff"></div>
<div class="r" style="left:8.6px;top:458.9px;width:14.8px;height:36.1px;background:#fff"></div>
<div class="r" style="left:32.4px;top:458.9px;width:4.9px;height:36.1px;background:#fff"></div>
<div class="r" style="left:38.4px;top:458.9px;width:5.0px;height:36.1px;background:#fff"></div>
<div class="r" style="left:42.8px;top:458.9px;width:30.2px;height:36.1px;background:#fff"></div>
<div class="r" style="left:75.1px;top:458.9px;width:4.9px;height:36.1px;background:#fff"></div>
<div class="r" style="left:80.3px;top:458.9px;width:6.7px;height:36.1px;background:#fff"></div>
<div class="r" style="left:132.4px;top:458.9px;width:4.9px;height:36.1px;background:#fff"></div>
<div class="r" style="left:86.9px;top:458.9px;width:46.2px;height:36.1px;background:#fff"></div>
<div class="r" style="left:136.0px;top:458.9px;width:11.1px;height:36.1px;background:#fff"></div>
<div class="r" style="left:146.4px;top:458.9px;width:15.2px;height:36.1px;background:#fff"></div>
<div class="r" style="left:160.4px;top:458.9px;width:6.7px;height:36.1px;background:#fff"></div>
<div class="r" style="left:166.4px;top:458.9px;width:6.8px;height:36.1px;background:#fff"></div>
<div class="r" style="left:173.9px;top:458.9px;width:7.6px;height:36.1px;background:#fff"></div>
<div class="r" style="left:182.6px;top:458.9px;width:5.0px;height:36.1px;background:#fff"></div>
<div class="r" style="left:190.4px;top:458.9px;width:5.1px;height:36.1px;background:#fff"></div>
<div class="r" style="left:198.4px;top:458.9px;width:5.1px;height:36.1px;background:#fff"></div>
<div class="r" style="left:204.6px;top:458.9px;width:5.1px;height:36.1px;background:#fff"></div>
<div class="r" style="left:212.6px;top:458.9px;width:5.1px;height:36.1px;background:#fff"></div>
<div class="r" style="left:218.4px;top:458.9px;width:5.1px;height:36.1px;background:#fff"></div>
<div class="r" style="left:226.4px;top:458.9px;width:5.0px;height:36.1px;background:#fff"></div>
<div class="r" style="left:234.4px;top:458.9px;width:5.0px;height:36.1px;background:#fff"></div>
<div class="r" style="left:240.4px;top:458.9px;width:5.1px;height:36.1px;background:#fff"></div>
<div class="r" style="left:248.4px;top:458.9px;width:5.1px;height:36.1px;background:#fff"></div>
<div class="r" style="left:254.5px;top:458.9px;width:5.1px;height:36.1px;background:#fff"></div>
<div class="r" style="left:258.4px;top:458.9px;width:5.1px;height:36.1px;background:#fff"></div>
<div class="r" style="left:262.4px;top:458.9px;width:5.1px;height:36.1px;background:#fff"></div>
<div class="r" style="left:270.4px;top:458.9px;width:5.1px;height:36.1px;background:#fff"></div>
<div class="r" style="left:282.6px;top:458.9px;width:7.0px;height:36.1px;background:#fff"></div>
<div class="r" style="left:290.4px;top:458.9px;width:5.1px;height:36.1px;background:#fff"></div>
<div class="r" style="left:298.4px;top:458.9px;width:5.2px;height:36.1px;background:#fff"></div>
<div class="r" style="left:304.6px;top:458.9px;width:7.2px;height:36.1px;background:#fff"></div>
<div class="r" style="left:312.4px;top:458.9px;width:5.2px;height:36.1px;background:#fff"></div>
<div class="r" style="left:318.8px;top:458.9px;width:208.8px;height:36.1px;background:#fff"></div>
<div class="r" style="left:526.6px;top:458.9px;width:112.5px;height:36.1px;background:#fff"></div>
<div class="r" style="left:639.0px;top:458.9px;width:10.3px;height:36.1px;background:#fff"></div>
<div class="r" style="left:652.4px;top:458.9px;width:4.8px;height:36.1px;background:#fff"></div>
<div class="r" style="left:656.8px;top:458.9px;width:14.4px;height:36.1px;background:#fff"></div>
<div class="r" style="left:678.7px;top:458.9px;width:6.3px;height:36.1px;background:#fff"></div>
<div class="r" style="left:688.7px;top:458.9px;width:1018.9px;height:36.1px;background:#fff"></div>
<div class="r" style="left:1706.8px;top:458.9px;width:166.2px;height:36.1px;background:#fff"></div>
<div class="r" style="left:1872.4px;top:458.9px;width:6.2px;height:36.1px;background:#fff"></div>
<div class="r" style="left:1880.4px;top:458.9px;width:347.2px;height:36.1px;background:#fff"></div>
<div class="r" style="left:2226.7px;top:458.9px;width:10.9px;height:36.1px;background:#fff"></div>
<div class="r" style="left:2236.4px;top:458.9px;width:5.0px;height:36.1px;background:#fff"></div>
<div class="r" style="left:2240.4px;top:458.9px;width:4.9px;height:36.1px;background:#fff"></div>
<div class="r" style="left:2248.2px;top:458.9px;width:5.4px;height:36.1px;background:#fff"></div>
<div class="r" style="left:2254.4px;top:458.9px;width:57.2px;height:36.1px;background:#fff"></div>
<div class="r" style="left:2320.4px;top:458.9px;width:63.2px;height:36.1px;background:#fff"></div>
<div class="r" style="left:2457.0px;top:458.9px;width:6.3px;height:36.1px;background:#fff"></div>
<div class="r" style="left:2.4px;top:494.9px;width:6.6px;height:36.1px;background:#fff"></div>
<div class="r" style="left:8.6px;top:494.9px;width:14.8px;height:36.1px;background:#fff"></div>
<div class="r" style="left:32.4px;top:494.9px;width:4.9px;height:36.1px;background:#fff"></div>
<div class="r" style="left:38.4px;top:494.9px;width:5.0px;height:36.1px;background:#fff"></div>
<div class="r" style="left:42.8px;top:494.9px;width:30.2px;height:36.1px;background:#fff"></div>
<div class="r" style="left:75.1px;top:494.9px;width:4.9px;height:36.1px;background:#fff"></div>
<div class="r" style="left:80.3px;top:494.9px;width:6.7px;height:36.1px;background:#fff"></div>
<div class="r" style="left:86.9px;top:494.9px;width:44.5px;height:36.1px;background:#fff"></div>
<div class="r" style="left:132.4px;top:494.9px;width:4.9px;height:36.1px;background:#fff"></div>
<div class="r" style="left:136.7px;top:494.9px;width:4.5px;height:36.1px;background:#fff"></div>
<div class="r" style="left:140.4px;top:494.9px;width:6.7px;height:36.1px;background:#fff"></div>
<div class="r" style="left:146.4px;top:494.9px;width:15.2px;height:36.1px;background:#fff"></div>
<div class="r" style="left:160.4px;top:494.9px;width:6.7px;height:36.1px;background:#fff"></div>
<div class="r" style="left:166.4px;top:494.9px;width:6.8px;height:36.1px;background:#fff"></div>
<div class="r" style="left:173.9px;top:494.9px;width:7.6px;height:36.1px;background:#fff"></div>
<div class="r" style="left:182.6px;top:494.9px;width:5.0px;height:36.1px;background:#fff"></div>
<div class="r" style="left:190.4px;top:494.9px;width:5.1px;height:36.1px;background:#fff"></div>
<div class="r" style="left:198.4px;top:494.9px;width:5.1px;height:36.1px;background:#fff"></div>
<div class="r" style="left:204.6px;top:494.9px;width:5.1px;height:36.1px;background:#fff"></div>
<div class="r" style="left:212.6px;top:494.9px;width:5.1px;height:36.1px;background:#fff"></div>
<div class="r" style="left:218.4px;top:494.9px;width:5.1px;height:36.1px;background:#fff"></div>
<div class="r" style="left:226.4px;top:494.9px;width:5.0px;height:36.1px;background:#fff"></div>
<div class="r" style="left:234.4px;top:494.9px;width:5.0px;height:36.1px;background:#fff"></div>
<div class="r" style="left:240.4px;top:494.9px;width:5.1px;height:36.1px;background:#fff"></div>
<div class="r" style="left:248.4px;top:494.9px;width:5.1px;height:36.1px;background:#fff"></div>
<div class="r" style="left:254.5px;top:494.9px;width:5.1px;height:36.1px;background:#fff"></div>
<div class="r" style="left:258.4px;top:494.9px;width:5.1px;height:36.1px;background:#fff"></div>
<div class="r" style="left:262.4px;top:494.9px;width:5.1px;height:36.1px;background:#fff"></div>
<div class="r" style="left:270.4px;top:494.9px;width:5.1px;height:36.1px;background:#fff"></div>
<div class="r" style="left:282.6px;top:494.9px;width:7.0px;height:36.1px;background:#fff"></div>
<div class="r" style="left:290.4px;top:494.9px;width:5.1px;height:36.1px;background:#fff"></div>
<div class="r" style="left:298.4px;top:494.9px;width:5.2px;height:36.1px;background:#fff"></div>
<div class="r" style="left:304.6px;top:494.9px;width:7.2px;height:36.1px;background:#fff"></div>
<div class="r" style="left:312.4px;top:494.9px;width:5.2px;height:36.1px;background:#fff"></div>
<div class="r" style="left:318.8px;top:494.9px;width:208.8px;height:36.1px;background:#fff"></div>
<div class="r" style="left:526.6px;top:494.9px;width:112.5px;height:36.1px;background:#fff"></div>
<div class="r" style="left:639.0px;top:494.9px;width:10.3px;height:36.1px;background:#fff"></div>
<div class="r" style="left:652.4px;top:494.9px;width:4.8px;height:36.1px;background:#fff"></div>
<div class="r" style="left:656.8px;top:494.9px;width:14.4px;height:36.1px;background:#fff"></div>
<div class="r" style="left:678.7px;top:494.9px;width:6.3px;height:36.1px;background:#fff"></div>
<div class="r" style="left:688.7px;top:494.9px;width:989.2px;height:36.1px;background:#fff"></div>
<div class="r" style="left:1677.1px;top:494.9px;width:30.5px;height:36.1px;background:#fff"></div>
<div class="r" style="left:1706.8px;top:494.9px;width:164.5px;height:36.1px;background:#fff"></div>
<div class="r" style="left:1872.4px;top:494.9px;width:6.2px;height:36.1px;background:#fff"></div>
<div class="r" style="left:1880.4px;top:494.9px;width:347.2px;height:36.1px;background:#fff"></div>
<div class="r" style="left:2226.7px;top:494.9px;width:10.9px;height:36.1px;background:#fff"></div>
<div class="r" style="left:2236.4px;top:494.9px;width:5.0px;height:36.1px;background:#fff"></div>
<div class="r" style="left:2240.4px;top:494.9px;width:4.9px;height:36.1px;background:#fff"></div>
<div class="r" style="left:2248.2px;top:494.9px;width:5.4px;height:36.1px;background:#fff"></div>
<div class="r" style="left:2254.4px;top:494.9px;width:57.2px;height:36.1px;background:#fff"></div>
<div class="r" style="left:2320.4px;top:494.9px;width:63.2px;height:36.1px;background:#fff"></div>
<div class="r" style="left:2456.7px;top:494.9px;width:4.9px;height:36.1px;background:#fff"></div>
<div class="r" style="left:2.4px;top:530.9px;width:6.6px;height:36.1px;background:#fff"></div>
<div class="r" style="left:8.6px;top:530.9px;width:14.8px;height:36.1px;background:#fff"></div>
<div class="r" style="left:32.4px;top:530.9px;width:4.9px;height:36.1px;background:#fff"></div>
<div class="r" style="left:38.4px;top:530.9px;width:5.0px;height:36.1px;background:#fff"></div>
<div class="r" style="left:42.8px;top:530.9px;width:30.2px;height:36.1px;background:#fff"></div>
<div class="r" style="left:75.1px;top:530.9px;width:4.9px;height:36.1px;background:#fff"></div>
<div class="r" style="left:80.3px;top:530.9px;width:6.7px;height:36.1px;background:#fff"></div>
<div class="r" style="left:86.9px;top:530.9px;width:44.5px;height:36.1px;background:#fff"></div>
<div class="r" style="left:132.4px;top:530.9px;width:4.9px;height:36.1px;background:#fff"></div>
<div class="r" style="left:136.7px;top:530.9px;width:4.5px;height:36.1px;background:#fff"></div>
<div class="r" style="left:140.4px;top:530.9px;width:6.7px;height:36.1px;background:#fff"></div>
<div class="r" style="left:146.4px;top:530.9px;width:15.2px;height:36.1px;background:#fff"></div>
<div class="r" style="left:160.4px;top:530.9px;width:6.7px;height:36.1px;background:#fff"></div>
<div class="r" style="left:166.4px;top:530.9px;width:6.8px;height:36.1px;background:#fff"></div>
<div class="r" style="left:176.2px;top:530.9px;width:5.3px;height:36.1px;background:#fff"></div>
<div class="r" style="left:182.6px;top:530.9px;width:5.0px;height:36.1px;background:#fff"></div>
<div class="r" style="left:190.4px;top:530.9px;width:5.1px;height:36.1px;background:#fff"></div>
<div class="r" style="left:198.4px;top:530.9px;width:5.1px;height:36.1px;background:#fff"></div>
<div class="r" style="left:204.6px;top:530.9px;width:5.1px;height:36.1px;background:#fff"></div>
<div class="r" style="left:212.6px;top:530.9px;width:5.1px;height:36.1px;background:#fff"></div>
<div class="r" style="left:218.4px;top:530.9px;width:5.1px;height:36.1px;background:#fff"></div>
<div class="r" style="left:226.4px;top:530.9px;width:5.0px;height:36.1px;background:#fff"></div>
<div class="r" style="left:234.4px;top:530.9px;width:5.0px;height:36.1px;background:#fff"></div>
<div class="r" style="left:240.4px;top:530.9px;width:5.1px;height:36.1px;background:#fff"></div>
<div class="r" style="left:248.4px;top:530.9px;width:5.1px;height:36.1px;background:#fff"></div>
<div class="r" style="left:254.5px;top:530.9px;width:5.1px;height:36.1px;background:#fff"></div>
<div class="r" style="left:258.4px;top:530.9px;width:5.1px;height:36.1px;background:#fff"></div>
<div class="r" style="left:262.4px;top:530.9px;width:5.1px;height:36.1px;background:#fff"></div>
<div class="r" style="left:270.4px;top:530.9px;width:5.1px;height:36.1px;background:#fff"></div>
<div class="r" style="left:284.4px;top:530.9px;width:5.2px;height:36.1px;background:#fff"></div>
<div class="r" style="left:290.4px;top:530.9px;width:5.1px;height:36.1px;background:#fff"></div>
<div class="r" style="left:298.4px;top:530.9px;width:5.2px;height:36.1px;background:#fff"></div>
<div class="r" style="left:304.6px;top:530.9px;width:7.2px;height:36.1px;background:#fff"></div>
<div class="r" style="left:312.4px;top:530.9px;width:5.2px;height:36.1px;background:#fff"></div>
<div class="r" style="left:318.8px;top:530.9px;width:208.8px;height:36.1px;background:#fff"></div>
<div class="r" style="left:526.6px;top:530.9px;width:112.5px;height:36.1px;background:#fff"></div>
<div class="r" style="left:639.0px;top:530.9px;width:10.3px;height:36.1px;background:#fff"></div>
<div class="r" style="left:652.4px;top:530.9px;width:4.8px;height:36.1px;background:#fff"></div>
<div class="r" style="left:656.8px;top:530.9px;width:14.4px;height:36.1px;background:#fff"></div>
<div class="r" style="left:678.7px;top:530.9px;width:6.3px;height:36.1px;background:#fff"></div>
<div class="r" style="left:688.7px;top:530.9px;width:130.9px;height:36.1px;background:#fff"></div>
<div class="r" style="left:818.4px;top:530.9px;width:245.2px;height:36.1px;background:#fff"></div>
<div class="r" style="left:1062.4px;top:530.9px;width:156.2px;height:36.1px;background:#fff"></div>
<div class="r" style="left:1218.4px;top:530.9px;width:273.2px;height:36.1px;background:#fff"></div>
<div class="r" style="left:1490.7px;top:530.9px;width:187.2px;height:36.1px;background:#fff"></div>
<div class="r" style="left:1706.8px;top:530.9px;width:164.5px;height:36.1px;background:#fff"></div>
<div class="r" style="left:1871.4px;top:530.9px;width:7.2px;height:36.1px;background:#fff"></div>
<div class="r" style="left:1880.4px;top:530.9px;width:347.2px;height:36.1px;background:#fff"></div>
<div class="r" style="left:2226.7px;top:530.9px;width:10.9px;height:36.1px;background:#fff"></div>
<div class="r" style="left:2236.4px;top:530.9px;width:5.0px;height:36.1px;background:#fff"></div>
<div class="r" style="left:2240.4px;top:530.9px;width:4.9px;height:36.1px;background:#fff"></div>
<div class="r" style="left:2248.2px;top:530.9px;width:5.4px;height:36.1px;background:#fff"></div>
<div class="r" style="left:2254.4px;top:530.9px;width:55.2px;height:36.1px;background:#fff"></div>
<div class="r" style="left:2320.4px;top:530.9px;width:63.2px;height:36.1px;background:#fff"></div>
<div class="r" style="left:2456.7px;top:530.9px;width:4.9px;height:36.1px;background:#fff"></div>
<div class="r" style="left:2.4px;top:566.9px;width:6.6px;height:36.1px;background:#fff"></div>
<div class="r" style="left:8.6px;top:566.9px;width:14.8px;height:36.1px;background:#fff"></div>
<div class="r" style="left:32.4px;top:566.9px;width:4.9px;height:36.1px;background:#fff"></div>
<div class="r" style="left:38.4px;top:566.9px;width:5.0px;height:36.1px;background:#fff"></div>
<div class="r" style="left:42.8px;top:566.9px;width:30.2px;height:36.1px;background:#fff"></div>
<div class="r" style="left:75.1px;top:566.9px;width:4.9px;height:36.1px;background:#fff"></div>
<div class="r" style="left:80.3px;top:566.9px;width:6.7px;height:36.1px;background:#fff"></div>
<div class="r" style="left:86.9px;top:566.9px;width:44.5px;height:36.1px;background:#fff"></div>
<div class="r" style="left:132.4px;top:566.9px;width:4.9px;height:36.1px;background:#fff"></div>
<div class="r" style="left:136.7px;top:566.9px;width:4.5px;height:36.1px;background:#fff"></div>
<div class="r" style="left:140.4px;top:566.9px;width:6.7px;height:36.1px;background:#fff"></div>
<div class="r" style="left:146.4px;top:566.9px;width:15.2px;height:36.1px;background:#fff"></div>
<div class="r" style="left:160.4px;top:566.9px;width:6.7px;height:36.1px;background:#fff"></div>
<div class="r" style="left:166.4px;top:566.9px;width:6.8px;height:36.1px;background:#fff"></div>
<div class="r" style="left:176.2px;top:566.9px;width:5.3px;height:36.1px;background:#fff"></div>
<div class="r" style="left:182.6px;top:566.9px;width:5.0px;height:36.1px;background:#fff"></div>
<div class="r" style="left:190.4px;top:566.9px;width:5.1px;height:36.1px;background:#fff"></div>
<div class="r" style="left:198.4px;top:566.9px;width:5.1px;height:36.1px;background:#fff"></div>
<div class="r" style="left:204.6px;top:566.9px;width:5.1px;height:36.1px;background:#fff"></div>
<div class="r" style="left:212.6px;top:566.9px;width:5.1px;height:36.1px;background:#fff"></div>
<div class="r" style="left:218.4px;top:566.9px;width:5.1px;height:36.1px;background:#fff"></div>
<div class="r" style="left:226.4px;top:566.9px;width:5.0px;height:36.1px;background:#fff"></div>
<div class="r" style="left:234.4px;top:566.9px;width:5.0px;height:36.1px;background:#fff"></div>
<div class="r" style="left:240.4px;top:566.9px;width:5.1px;height:36.1px;background:#fff"></div>
<div class="r" style="left:248.4px;top:566.9px;width:5.1px;height:36.1px;background:#fff"></div>
<div class="r" style="left:254.5px;top:566.9px;width:5.1px;height:36.1px;background:#fff"></div>
<div class="r" style="left:258.4px;top:566.9px;width:5.1px;height:36.1px;background:#fff"></div>
<div class="r" style="left:262.4px;top:566.9px;width:5.1px;height:36.1px;background:#fff"></div>
<div class="r" style="left:270.4px;top:566.9px;width:5.1px;height:36.1px;background:#fff"></div>
<div class="r" style="left:284.4px;top:566.9px;width:5.2px;height:36.1px;background:#fff"></div>
<div class="r" style="left:290.4px;top:566.9px;width:5.1px;height:36.1px;background:#fff"></div>
<div class="r" style="left:298.4px;top:566.9px;width:5.2px;height:36.1px;background:#fff"></div>
<div class="r" style="left:304.6px;top:566.9px;width:7.2px;height:36.1px;background:#fff"></div>
<div class="r" style="left:312.4px;top:566.9px;width:5.2px;height:36.1px;background:#fff"></div>
<div class="r" style="left:318.8px;top:566.9px;width:196.2px;height:36.1px;background:#fff"></div>
<div class="r" style="left:515.4px;top:566.9px;width:8.0px;height:36.1px;background:#fff"></div>
<div class="r" style="left:526.6px;top:566.9px;width:72.8px;height:36.1px;background:#fff"></div>
<div class="r" style="left:598.6px;top:566.9px;width:18.6px;height:36.1px;background:#fff"></div>
<div class="r" style="left:616.9px;top:566.9px;width:22.2px;height:36.1px;background:#fff"></div>
<div class="r" style="left:639.0px;top:566.9px;width:10.3px;height:36.1px;background:#fff"></div>
<div class="r" style="left:678.7px;top:566.9px;width:6.3px;height:36.1px;background:#fff"></div>
<div class="r" style="left:818.4px;top:566.9px;width:245.2px;height:36.1px;background:#fff"></div>
<div class="r" style="left:1062.4px;top:566.9px;width:152.2px;height:36.1px;background:#fff"></div>
<div class="r" style="left:1213.9px;top:566.9px;width:5.2px;height:36.1px;background:#fff"></div>
<div class="r" style="left:1218.4px;top:566.9px;width:273.2px;height:36.1px;background:#fff"></div>
<div class="r" style="left:1490.7px;top:566.9px;width:187.2px;height:36.1px;background:#fff"></div>
<div class="r" style="left:1872.4px;top:566.9px;width:6.2px;height:36.1px;background:#fff"></div>
<div class="r" style="left:1880.4px;top:566.9px;width:329.0px;height:36.1px;background:#fff"></div>
<div class="r" style="left:2208.4px;top:566.9px;width:19.0px;height:36.1px;background:#fff"></div>
<div class="r" style="left:2226.7px;top:566.9px;width:10.9px;height:36.1px;background:#fff"></div>
<div class="r" style="left:2236.4px;top:566.9px;width:5.0px;height:36.1px;background:#fff"></div>
<div class="r" style="left:2240.4px;top:566.9px;width:4.9px;height:36.1px;background:#fff"></div>
<div class="r" style="left:2248.2px;top:566.9px;width:5.4px;height:36.1px;background:#fff"></div>
<div class="r" style="left:2254.4px;top:566.9px;width:55.2px;height:36.1px;background:#fff"></div>
<div class="r" style="left:2320.4px;top:566.9px;width:63.2px;height:36.1px;background:#fff"></div>
<div class="r" style="left:2.4px;top:602.9px;width:6.6px;height:36.1px;background:#fff"></div>
<div class="r" style="left:8.6px;top:602.9px;width:14.8px;height:36.1px;background:#fff"></div>
<div class="r" style="left:32.4px;top:602.9px;width:4.9px;height:36.1px;background:#fff"></div>
<div class="r" style="left:38.4px;top:602.9px;width:5.0px;height:36.1px;background:#fff"></div>
<div class="r" style="left:42.8px;top:602.9px;width:30.2px;height:36.1px;background:#fff"></div>
<div class="r" style="left:75.1px;top:602.9px;width:4.9px;height:36.1px;background:#fff"></div>
<div class="r" style="left:80.3px;top:602.9px;width:6.7px;height:36.1px;background:#fff"></div>
<div class="r" style="left:86.9px;top:602.9px;width:30.6px;height:36.1px;background:#fff"></div>
<div class="r" style="left:116.9px;top:602.9px;width:14.5px;height:36.1px;background:#fff"></div>
<div class="r" style="left:132.4px;top:602.9px;width:4.9px;height:36.1px;background:#fff"></div>
<div class="r" style="left:136.7px;top:602.9px;width:4.5px;height:36.1px;background:#fff"></div>
<div class="r" style="left:140.4px;top:602.9px;width:6.7px;height:36.1px;background:#fff"></div>
<div class="r" style="left:146.4px;top:602.9px;width:15.2px;height:36.1px;background:#fff"></div>
<div class="r" style="left:160.4px;top:602.9px;width:6.7px;height:36.1px;background:#fff"></div>
<div class="r" style="left:166.4px;top:602.9px;width:6.8px;height:36.1px;background:#fff"></div>
<div class="r" style="left:176.2px;top:602.9px;width:5.3px;height:36.1px;background:#fff"></div>
<div class="r" style="left:182.6px;top:602.9px;width:5.0px;height:36.1px;background:#fff"></div>
<div class="r" style="left:190.4px;top:602.9px;width:5.1px;height:36.1px;background:#fff"></div>
<div class="r" style="left:198.4px;top:602.9px;width:5.1px;height:36.1px;background:#fff"></div>
<div class="r" style="left:204.6px;top:602.9px;width:5.1px;height:36.1px;background:#fff"></div>
<div class="r" style="left:212.6px;top:602.9px;width:5.1px;height:36.1px;background:#fff"></div>
<div class="r" style="left:218.4px;top:602.9px;width:5.1px;height:36.1px;background:#fff"></div>
<div class="r" style="left:226.4px;top:602.9px;width:5.0px;height:36.1px;background:#fff"></div>
<div class="r" style="left:234.4px;top:602.9px;width:5.0px;height:36.1px;background:#fff"></div>
<div class="r" style="left:240.4px;top:602.9px;width:5.1px;height:36.1px;background:#fff"></div>
<div class="r" style="left:248.4px;top:602.9px;width:5.1px;height:36.1px;background:#fff"></div>
<div class="r" style="left:254.5px;top:602.9px;width:5.1px;height:36.1px;background:#fff"></div>
<div class="r" style="left:258.4px;top:602.9px;width:5.1px;height:36.1px;background:#fff"></div>
<div class="r" style="left:262.4px;top:602.9px;width:5.1px;height:36.1px;background:#fff"></div>
<div class="r" style="left:270.4px;top:602.9px;width:5.1px;height:36.1px;background:#fff"></div>
<div class="r" style="left:284.4px;top:602.9px;width:5.2px;height:36.1px;background:#fff"></div>
<div class="r" style="left:290.4px;top:602.9px;width:5.1px;height:36.1px;background:#fff"></div>
<div class="r" style="left:298.4px;top:602.9px;width:5.2px;height:36.1px;background:#fff"></div>
<div class="r" style="left:304.6px;top:602.9px;width:7.2px;height:36.1px;background:#fff"></div>
<div class="r" style="left:312.4px;top:602.9px;width:5.2px;height:36.1px;background:#fff"></div>
<div class="r" style="left:318.8px;top:602.9px;width:196.2px;height:36.1px;background:#fff"></div>
<div class="r" style="left:514.7px;top:602.9px;width:6.9px;height:36.1px;background:#fff"></div>
<div class="r" style="left:526.6px;top:602.9px;width:72.8px;height:36.1px;background:#fff"></div>
<div class="r" style="left:598.6px;top:602.9px;width:18.6px;height:36.1px;background:#fff"></div>
<div class="r" style="left:616.9px;top:602.9px;width:18.2px;height:36.1px;background:#fff"></div>
<div class="r" style="left:634.2px;top:602.9px;width:4.9px;height:36.1px;background:#fff"></div>
<div class="r" style="left:639.0px;top:602.9px;width:10.3px;height:36.1px;background:#fff"></div>
<div class="r" style="left:678.7px;top:602.9px;width:6.3px;height:36.1px;background:#fff"></div>
<div class="r" style="left:818.4px;top:602.9px;width:245.2px;height:36.1px;background:#fff"></div>
<div class="r" style="left:1062.4px;top:602.9px;width:152.2px;height:36.1px;background:#fff"></div>
<div class="r" style="left:1213.9px;top:602.9px;width:5.2px;height:36.1px;background:#fff"></div>
<div class="r" style="left:1218.4px;top:602.9px;width:220.8px;height:36.1px;background:#fff"></div>
<div class="r" style="left:1438.4px;top:602.9px;width:42.6px;height:36.1px;background:#fff"></div>
<div class="r" style="left:1490.7px;top:602.9px;width:187.2px;height:36.1px;background:#fff"></div>
<div class="r" style="left:1872.4px;top:602.9px;width:6.2px;height:36.1px;background:#fff"></div>
<div class="r" style="left:1880.4px;top:602.9px;width:329.0px;height:36.1px;background:#fff"></div>
<div class="r" style="left:2208.4px;top:602.9px;width:11.2px;height:36.1px;background:#fff"></div>
<div class="r" style="left:2218.4px;top:602.9px;width:9.0px;height:36.1px;background:#fff"></div>
<div class="r" style="left:2226.7px;top:602.9px;width:10.9px;height:36.1px;background:#fff"></div>
<div class="r" style="left:2236.4px;top:602.9px;width:5.0px;height:36.1px;background:#fff"></div>
<div class="r" style="left:2240.4px;top:602.9px;width:4.9px;height:36.1px;background:#fff"></div>
<div class="r" style="left:2248.2px;top:602.9px;width:5.4px;height:36.1px;background:#fff"></div>
<div class="r" style="left:2254.4px;top:602.9px;width:55.2px;height:36.1px;background:#fff"></div>
<div class="r" style="left:2320.4px;top:602.9px;width:63.2px;height:36.1px;background:#fff"></div>
<div class="fb" style="left:4.0px;top:-7.7px;width:3.4px;height:33.3px;background:#55b594"></div>
<div class="fb" style="left:10.2px;top:-7.7px;width:17.6px;height:33.3px;background:#55b594"></div>
<div class="fb" style="left:30.3px;top:-7.7px;width:141.4px;height:33.3px;background:#8834a8;color:#ffffff"><span style="letter-spacing:0.37px">invokeImpl</span></div>
<div class="fb" style="left:175.5px;top:-7.7px;width:4.4px;height:33.3px;background:#c68ad0"></div>
<div class="fb" style="left:184.2px;top:-7.7px;width:5.5px;height:33.3px;background:#8834a8"></div>
<div class="fb" style="left:192.0px;top:-7.7px;width:1.9px;height:33.3px;background:#7b3b9b"></div>
<div class="fb" style="left:200.0px;top:-7.7px;width:1.9px;height:33.3px;background:#7b3b9b"></div>
<div class="fb" style="left:206.2px;top:-7.7px;width:3.8px;height:33.3px;background:#c68ad0"></div>
<div class="fb" style="left:214.2px;top:-7.7px;width:1.9px;height:33.3px;background:#d0865a"></div>
<div class="fb" style="left:220.0px;top:-7.7px;width:1.9px;height:33.3px;background:#3b6b50"></div>
<div class="fb" style="left:224.2px;top:-7.7px;width:1.9px;height:33.3px;background:#3b6b50"></div>
<div class="fb" style="left:228.0px;top:-7.7px;width:1.8px;height:33.3px;background:#3b6b50"></div>
<div class="fb" style="left:236.0px;top:-7.7px;width:1.8px;height:33.3px;background:#c06a72"></div>
<div class="fb" style="left:242.0px;top:-7.7px;width:1.9px;height:33.3px;background:#b088c0"></div>
<div class="fb" style="left:250.0px;top:-7.7px;width:1.9px;height:33.3px;background:#8a4a7c"></div>
<div class="fb" style="left:256.1px;top:-7.7px;width:1.9px;height:33.3px;background:#d0865a"></div>
<div class="fb" style="left:260.0px;top:-7.7px;width:1.9px;height:33.3px;background:#d0865a"></div>
<div class="fb" style="left:264.0px;top:-7.7px;width:1.9px;height:33.3px;background:#4889b9"></div>
<div class="fb" style="left:272.0px;top:-7.7px;width:1.9px;height:33.3px;background:#5aa68e"></div>
<div class="fb" style="left:278.3px;top:-7.7px;width:23.2px;height:33.3px;background:#c68ad0"></div>
<div class="fb" style="left:306.0px;top:-7.7px;width:1940.0px;height:33.3px;background:#3a98d0;color:#ffffff"><span style="letter-spacing:1.08px">ParserRunner$$Lambda.0x0000000301606b78.run()</span></div>
<div class="fb" style="left:2250.0px;top:-7.7px;width:133.8px;height:33.3px;background:#e0844f;color:#ffffff"><span style="letter-spacing:0.18px">run</span></div>
<div class="fb" style="left:2386.2px;top:-7.7px;width:3.4px;height:33.3px;background:#3a98d0"></div>
<div class="fb" style="left:2392.1px;top:-7.7px;width:4.0px;height:33.3px;background:#3a98d0"></div>
<div class="fb" style="left:2400.0px;top:-7.7px;width:2.0px;height:33.3px;background:#8a9a3a"></div>
<div class="fb" style="left:2406.0px;top:-7.7px;width:4.0px;height:33.3px;background:#3a98d0"></div>
<div class="fb" style="left:2420.0px;top:-7.7px;width:6.0px;height:33.3px;background:#2fb1e0"></div>
<div class="fb" style="left:2428.0px;top:-7.7px;width:4.0px;height:33.3px;background:#8834a8"></div>
<div class="fb" style="left:2443.6px;top:-7.7px;width:2.0px;height:33.3px;background:#55b594"></div>
<div class="fb" style="left:2458.0px;top:-7.7px;width:5.4px;height:33.3px;background:#3a98d0"></div>
<div class="fb" style="left:2466.0px;top:-7.7px;width:2.0px;height:33.3px;background:#9a82c0"></div>
<div class="fb" style="left:4.0px;top:28.3px;width:3.4px;height:33.3px;background:#55b594"></div>
<div class="fb" style="left:10.2px;top:28.3px;width:17.6px;height:33.3px;background:#55b594"></div>
<div class="fb" style="left:30.3px;top:28.3px;width:141.4px;height:33.3px;background:#c68ad0;color:#ffffff"><span style="letter-spacing:0.09px">invokeEx...</span></div>
<div class="fb" style="left:175.5px;top:28.3px;width:4.4px;height:33.3px;background:#c68ad0"></div>
<div class="fb" style="left:184.2px;top:28.3px;width:5.5px;height:33.3px;background:#8834a8"></div>
<div class="fb" style="left:192.0px;top:28.3px;width:1.9px;height:33.3px;background:#7b3b9b"></div>
<div class="fb" style="left:200.0px;top:28.3px;width:1.9px;height:33.3px;background:#d0865a"></div>
<div class="fb" style="left:206.2px;top:28.3px;width:3.8px;height:33.3px;background:#e0844f"></div>
<div class="fb" style="left:214.2px;top:28.3px;width:1.9px;height:33.3px;background:#d0865a"></div>
<div class="fb" style="left:220.0px;top:28.3px;width:1.9px;height:33.3px;background:#3b6b50"></div>
<div class="fb" style="left:224.2px;top:28.3px;width:1.9px;height:33.3px;background:#3b6b50"></div>
<div class="fb" style="left:228.0px;top:28.3px;width:1.8px;height:33.3px;background:#3b6b50"></div>
<div class="fb" style="left:236.0px;top:28.3px;width:1.8px;height:33.3px;background:#8a4a7c"></div>
<div class="fb" style="left:242.0px;top:28.3px;width:1.9px;height:33.3px;background:#b088c0"></div>
<div class="fb" style="left:250.0px;top:28.3px;width:1.9px;height:33.3px;background:#e8aa3a"></div>
<div class="fb" style="left:256.1px;top:28.3px;width:1.9px;height:33.3px;background:#d0865a"></div>
<div class="fb" style="left:260.0px;top:28.3px;width:1.9px;height:33.3px;background:#d0865a"></div>
<div class="fb" style="left:264.0px;top:28.3px;width:1.9px;height:33.3px;background:#d0865a"></div>
<div class="fb" style="left:272.0px;top:28.3px;width:1.9px;height:33.3px;background:#d0865a"></div>
<div class="fb" style="left:278.3px;top:28.3px;width:23.2px;height:33.3px;background:#3a98d0"></div>
<div class="fb" style="left:306.0px;top:28.3px;width:1940.0px;height:33.3px;background:#3a98d0;color:#ffffff"><span style="letter-spacing:0.24px">ParserRunner.lambda$runOnce$2(String, List, JsonNode)</span></div>
<div class="fb" style="left:2250.0px;top:28.3px;width:3.5px;height:33.3px;background:#e0844f"></div>
<div class="fb" style="left:2256.0px;top:28.3px;width:127.8px;height:33.3px;background:#e0844f;color:#ffffff"><span style="letter-spacing:-0.07px">run()</span></div>
<div class="fb" style="left:2386.2px;top:28.3px;width:3.4px;height:33.3px;background:#3a98d0"></div>
<div class="fb" style="left:2392.1px;top:28.3px;width:4.0px;height:33.3px;background:#3a98d0"></div>
<div class="fb" style="left:2400.0px;top:28.3px;width:2.0px;height:33.3px;background:#3466b0"></div>
<div class="fb" style="left:2406.0px;top:28.3px;width:4.0px;height:33.3px;background:#3a98d0"></div>
<div class="fb" style="left:2420.0px;top:28.3px;width:6.0px;height:33.3px;background:#2fb1e0"></div>
<div class="fb" style="left:2428.0px;top:28.3px;width:4.0px;height:33.3px;background:#8834a8"></div>
<div class="fb" style="left:2443.6px;top:28.3px;width:2.0px;height:33.3px;background:#55b594"></div>
<div class="fb" style="left:2458.0px;top:28.3px;width:5.4px;height:33.3px;background:#3a98d0"></div>
<div class="fb" style="left:2466.0px;top:28.3px;width:2.0px;height:33.3px;background:#9a82c0"></div>
<div class="fb" style="left:4.0px;top:64.3px;width:3.4px;height:33.3px;background:#8834a8"></div>
<div class="fb" style="left:10.2px;top:64.3px;width:17.6px;height:33.3px;background:#8834a8"></div>
<div class="fb" style="left:30.3px;top:64.3px;width:141.4px;height:33.3px;background:#c68ad0;color:#ffffff"><span style="letter-spacing:-0.17px">invoke</span></div>
<div class="fb" style="left:175.5px;top:64.3px;width:4.4px;height:33.3px;background:#e0844f"></div>
<div class="fb" style="left:184.2px;top:64.3px;width:5.5px;height:33.3px;background:#8834a8"></div>
<div class="fb" style="left:192.0px;top:64.3px;width:1.9px;height:33.3px;background:#5aa68e"></div>
<div class="fb" style="left:200.0px;top:64.3px;width:1.9px;height:33.3px;background:#d0865a"></div>
<div class="fb" style="left:206.2px;top:64.3px;width:3.8px;height:33.3px;background:#8834a8"></div>
<div class="fb" style="left:214.2px;top:64.3px;width:1.9px;height:33.3px;background:#d0865a"></div>
<div class="fb" style="left:220.0px;top:64.3px;width:1.9px;height:33.3px;background:#3b6b50"></div>
<div class="fb" style="left:224.2px;top:64.3px;width:1.9px;height:33.3px;background:#3b6b50"></div>
<div class="fb" style="left:228.0px;top:64.3px;width:1.8px;height:33.3px;background:#3b6b50"></div>
<div class="fb" style="left:236.0px;top:64.3px;width:1.8px;height:33.3px;background:#8a4a7c"></div>
<div class="fb" style="left:242.0px;top:64.3px;width:1.9px;height:33.3px;background:#e8aa3a"></div>
<div class="fb" style="left:250.0px;top:64.3px;width:1.9px;height:33.3px;background:#e8aa3a"></div>
<div class="fb" style="left:256.1px;top:64.3px;width:1.9px;height:33.3px;background:#d0865a"></div>
<div class="fb" style="left:260.0px;top:64.3px;width:1.9px;height:33.3px;background:#d0865a"></div>
<div class="fb" style="left:264.0px;top:64.3px;width:1.9px;height:33.3px;background:#d0865a"></div>
<div class="fb" style="left:272.0px;top:64.3px;width:1.9px;height:33.3px;background:#d0865a"></div>
<div class="fb" style="left:278.0px;top:64.3px;width:1.8px;height:33.3px;background:#5aa68e"></div>
<div class="fb" style="left:282.0px;top:64.3px;width:19.5px;height:33.3px;background:#3a98d0"></div>
<div class="fb" style="left:306.0px;top:64.3px;width:1940.0px;height:33.3px;background:#3a98d0;color:#ffffff"><span style="letter-spacing:0.07px">ParserRunner.runPlatformParse(String, List, JsonNode)</span></div>
<div class="fb" style="left:2250.0px;top:64.3px;width:3.5px;height:33.3px;background:#e0844f"></div>
<div class="fb" style="left:2256.0px;top:64.3px;width:125.6px;height:33.3px;background:#e0844f;color:#ffffff"><span style="letter-spacing:-0.07px">run()</span></div>
<div class="fb" style="left:2386.2px;top:64.3px;width:1.8px;height:33.3px;background:#fbca08"></div>
<div class="fb" style="left:2392.1px;top:64.3px;width:4.0px;height:33.3px;background:#f7aa2b"></div>
<div class="fb" style="left:2400.0px;top:64.3px;width:2.0px;height:33.3px;background:#8a9a3a"></div>
<div class="fb" style="left:2407.0px;top:64.3px;width:2.0px;height:33.3px;background:#8834a8"></div>
<div class="fb" style="left:2420.0px;top:64.3px;width:6.0px;height:33.3px;background:#2fb1e0"></div>
<div class="fb" style="left:2428.0px;top:64.3px;width:4.0px;height:33.3px;background:#3a98d0"></div>
<div class="fb" style="left:2443.6px;top:64.3px;width:2.0px;height:33.3px;background:#55b594"></div>
<div class="fb" style="left:2458.0px;top:64.3px;width:5.4px;height:33.3px;background:#3a98d0"></div>
<div class="fb" style="left:2466.0px;top:64.3px;width:2.0px;height:33.3px;background:#9a82c0"></div>
<div class="fb" style="left:4.0px;top:100.3px;width:3.4px;height:33.3px;background:#e0844f"></div>
<div class="fb" style="left:10.2px;top:100.3px;width:17.6px;height:33.3px;background:#e0844f"></div>
<div class="fb" style="left:30.3px;top:100.3px;width:141.4px;height:33.3px;background:#c68ad0;color:#ffffff"><span style="letter-spacing:-0.16px">invokeSta...</span></div>
<div class="fb" style="left:175.5px;top:100.3px;width:4.4px;height:33.3px;background:#8834a8"></div>
<div class="fb" style="left:184.2px;top:100.3px;width:1.8px;height:33.3px;background:#7b3b9b"></div>
<div class="fb" style="left:188.0px;top:100.3px;width:1.8px;height:33.3px;background:#7b3b9b"></div>
<div class="fb" style="left:192.0px;top:100.3px;width:1.9px;height:33.3px;background:#7b3b9b"></div>
<div class="fb" style="left:200.0px;top:100.3px;width:1.9px;height:33.3px;background:#d0865a"></div>
<div class="fb" style="left:206.2px;top:100.3px;width:3.8px;height:33.3px;background:#8834a8"></div>
<div class="fb" style="left:214.2px;top:100.3px;width:1.9px;height:33.3px;background:#d0865a"></div>
<div class="fb" style="left:220.0px;top:100.3px;width:1.9px;height:33.3px;background:#3b6b50"></div>
<div class="fb" style="left:224.2px;top:100.3px;width:1.9px;height:33.3px;background:#3b6b50"></div>
<div class="fb" style="left:228.0px;top:100.3px;width:1.8px;height:33.3px;background:#3b6b50"></div>
<div class="fb" style="left:236.0px;top:100.3px;width:1.8px;height:33.3px;background:#7b3b9b"></div>
<div class="fb" style="left:242.0px;top:100.3px;width:1.9px;height:33.3px;background:#4889b9"></div>
<div class="fb" style="left:250.0px;top:100.3px;width:1.9px;height:33.3px;background:#4889b9"></div>
<div class="fb" style="left:256.1px;top:100.3px;width:1.9px;height:33.3px;background:#d0865a"></div>
<div class="fb" style="left:260.0px;top:100.3px;width:1.9px;height:33.3px;background:#d0865a"></div>
<div class="fb" style="left:264.0px;top:100.3px;width:1.9px;height:33.3px;background:#4889b9"></div>
<div class="fb" style="left:272.0px;top:100.3px;width:1.9px;height:33.3px;background:#d0865a"></div>
<div class="fb" style="left:278.0px;top:100.3px;width:1.8px;height:33.3px;background:#7b3b9b"></div>
<div class="fb" style="left:282.0px;top:100.3px;width:7.7px;height:33.3px;background:#2fb1e0"></div>
<div class="fb" style="left:292.0px;top:100.3px;width:9.5px;height:33.3px;background:#2fb1e0"></div>
<div class="fb" style="left:306.0px;top:100.3px;width:1940.0px;height:33.3px;background:#c68ad0;color:#ffffff"><span style="letter-spacing:0.13px">Optional.ifPresentOrElse(Consumer, Runnable)</span></div>
<div class="fb" style="left:2250.0px;top:100.3px;width:3.5px;height:33.3px;background:#e0844f"></div>
<div class="fb" style="left:2256.0px;top:100.3px;width:125.6px;height:33.3px;background:#e0844f;color:#ffffff"><span style="letter-spacing:0.38px">process...</span></div>
<div class="fb" style="left:2386.2px;top:100.3px;width:1.8px;height:33.3px;background:#fbca08"></div>
<div class="fb" style="left:2392.1px;top:100.3px;width:4.0px;height:33.3px;background:#3a98d0"></div>
<div class="fb" style="left:2400.0px;top:100.3px;width:2.0px;height:33.3px;background:#e0844f"></div>
<div class="fb" style="left:2407.0px;top:100.3px;width:2.0px;height:33.3px;background:#8834a8"></div>
<div class="fb" style="left:2421.0px;top:100.3px;width:2.0px;height:33.3px;background:#8834a8"></div>
<div class="fb" style="left:2428.0px;top:100.3px;width:4.0px;height:33.3px;background:#3a98d0"></div>
<div class="fb" style="left:2443.6px;top:100.3px;width:2.0px;height:33.3px;background:#c8656f"></div>
<div class="fb" style="left:2458.0px;top:100.3px;width:5.4px;height:33.3px;background:#e0844f"></div>
<div class="fb" style="left:2466.0px;top:100.3px;width:2.0px;height:33.3px;background:#9a82c0"></div>
<div class="fb" style="left:4.0px;top:136.3px;width:3.4px;height:33.3px;background:#e0844f"></div>
<div class="fb" style="left:10.2px;top:136.3px;width:13.6px;height:33.3px;background:#e0844f"></div>
<div class="fb" style="left:26.0px;top:136.3px;width:2.0px;height:33.3px;background:#55b594"></div>
<div class="fb" style="left:30.3px;top:136.3px;width:141.4px;height:33.3px;background:#e0844f;color:#ffffff"><span style="letter-spacing:0.17px">main</span></div>
<div class="fb" style="left:175.5px;top:136.3px;width:4.4px;height:33.3px;background:#8834a8"></div>
<div class="fb" style="left:184.2px;top:136.3px;width:1.8px;height:33.3px;background:#7b3b9b"></div>
<div class="fb" style="left:188.0px;top:136.3px;width:1.8px;height:33.3px;background:#7b3b9b"></div>
<div class="fb" style="left:192.0px;top:136.3px;width:1.9px;height:33.3px;background:#7b3b9b"></div>
<div class="fb" style="left:200.0px;top:136.3px;width:1.9px;height:33.3px;background:#4889b9"></div>
<div class="fb" style="left:206.2px;top:136.3px;width:3.8px;height:33.3px;background:#8834a8"></div>
<div class="fb" style="left:214.2px;top:136.3px;width:1.9px;height:33.3px;background:#3b6b50"></div>
<div class="fb" style="left:220.0px;top:136.3px;width:1.9px;height:33.3px;background:#3b6b50"></div>
<div class="fb" style="left:228.0px;top:136.3px;width:1.8px;height:33.3px;background:#3b6b50"></div>
<div class="fb" style="left:236.0px;top:136.3px;width:1.8px;height:33.3px;background:#7b3b9b"></div>
<div class="fb" style="left:242.0px;top:136.3px;width:1.9px;height:33.3px;background:#4889b9"></div>
<div class="fb" style="left:250.0px;top:136.3px;width:1.9px;height:33.3px;background:#4889b9"></div>
<div class="fb" style="left:256.1px;top:136.3px;width:1.9px;height:33.3px;background:#d0865a"></div>
<div class="fb" style="left:260.0px;top:136.3px;width:1.9px;height:33.3px;background:#d0865a"></div>
<div class="fb" style="left:264.0px;top:136.3px;width:1.9px;height:33.3px;background:#4889b9"></div>
<div class="fb" style="left:272.0px;top:136.3px;width:1.9px;height:33.3px;background:#d0865a"></div>
<div class="fb" style="left:278.0px;top:136.3px;width:1.8px;height:33.3px;background:#5aa68e"></div>
<div class="fb" style="left:284.0px;top:136.3px;width:4.0px;height:33.3px;background:#55b594"></div>
<div class="fb" style="left:292.0px;top:136.3px;width:9.5px;height:33.3px;background:#2fb1e0"></div>
<div class="fb" style="left:306.0px;top:136.3px;width:1940.0px;height:33.3px;background:#3a98d0;color:#ffffff"><span style="letter-spacing:0.97px">ParserRunner$$Lambda.0x0000000301606fd8.accept(Object)</span></div>
<div class="fb" style="left:2250.0px;top:136.3px;width:3.5px;height:33.3px;background:#e0844f"></div>
<div class="fb" style="left:2256.0px;top:136.3px;width:63.8px;height:33.3px;background:#e0844f;color:#ffffff"><span style="letter-spacing:0.21px">un...</span></div>
<div class="fb" style="left:2322.0px;top:136.3px;width:59.6px;height:33.3px;background:#e0844f"></div>
<div class="fb" style="left:2386.2px;top:136.3px;width:1.8px;height:33.3px;background:#9a82c0"></div>
<div class="fb" style="left:2392.1px;top:136.3px;width:4.0px;height:33.3px;background:#f7aa2b"></div>
<div class="fb" style="left:2400.0px;top:136.3px;width:2.0px;height:33.3px;background:#e0844f"></div>
<div class="fb" style="left:2407.0px;top:136.3px;width:2.0px;height:33.3px;background:#55b594"></div>
<div class="fb" style="left:2421.0px;top:136.3px;width:2.0px;height:33.3px;background:#8834a8"></div>
<div class="fb" style="left:2428.0px;top:136.3px;width:4.0px;height:33.3px;background:#c8656f"></div>
<div class="fb" style="left:2443.6px;top:136.3px;width:2.0px;height:33.3px;background:#e0844f"></div>
<div class="fb" style="left:2458.0px;top:136.3px;width:5.4px;height:33.3px;background:#e0844f"></div>
<div class="fb" style="left:2466.0px;top:136.3px;width:2.0px;height:33.3px;background:#9a82c0"></div>
<div class="fb" style="left:4.0px;top:172.3px;width:3.4px;height:33.3px;background:#e0844f"></div>
<div class="fb" style="left:10.2px;top:172.3px;width:13.6px;height:33.3px;background:#e0844f"></div>
<div class="fb" style="left:26.0px;top:172.3px;width:2.0px;height:33.3px;background:#8834a8"></div>
<div class="fb" style="left:30.3px;top:172.3px;width:141.4px;height:33.3px;background:#8834a8;color:#ffffff"><span style="letter-spacing:0.38px">run</span></div>
<div class="fb" style="left:175.5px;top:172.3px;width:4.4px;height:33.3px;background:#8834a8"></div>
<div class="fb" style="left:184.2px;top:172.3px;width:1.8px;height:33.3px;background:#7b3b9b"></div>
<div class="fb" style="left:188.0px;top:172.3px;width:1.8px;height:33.3px;background:#8a4a7c"></div>
<div class="fb" style="left:192.0px;top:172.3px;width:1.9px;height:33.3px;background:#b088c0"></div>
<div class="fb" style="left:200.0px;top:172.3px;width:1.9px;height:33.3px;background:#4889b9"></div>
<div class="fb" style="left:206.2px;top:172.3px;width:3.8px;height:33.3px;background:#8834a8"></div>
<div class="fb" style="left:214.2px;top:172.3px;width:1.9px;height:33.3px;background:#3b6b50"></div>
<div class="fb" style="left:220.0px;top:172.3px;width:1.9px;height:33.3px;background:#3b6b50"></div>
<div class="fb" style="left:228.0px;top:172.3px;width:1.8px;height:33.3px;background:#3b6b50"></div>
<div class="fb" style="left:236.0px;top:172.3px;width:1.8px;height:33.3px;background:#7b3b9b"></div>
<div class="fb" style="left:242.0px;top:172.3px;width:1.9px;height:33.3px;background:#4889b9"></div>
<div class="fb" style="left:250.0px;top:172.3px;width:1.9px;height:33.3px;background:#4889b9"></div>
<div class="fb" style="left:256.1px;top:172.3px;width:1.9px;height:33.3px;background:#d0865a"></div>
<div class="fb" style="left:260.0px;top:172.3px;width:1.9px;height:33.3px;background:#d0865a"></div>
<div class="fb" style="left:264.0px;top:172.3px;width:1.9px;height:33.3px;background:#d0865a"></div>
<div class="fb" style="left:272.0px;top:172.3px;width:1.9px;height:33.3px;background:#4889b9"></div>
<div class="fb" style="left:278.0px;top:172.3px;width:1.8px;height:33.3px;background:#5aa68e"></div>
<div class="fb" style="left:284.2px;top:172.3px;width:3.8px;height:33.3px;background:#8834a8"></div>
<div class="fb" style="left:292.0px;top:172.3px;width:1.9px;height:33.3px;background:#5aa68e"></div>
<div class="fb" style="left:300.0px;top:172.3px;width:2.0px;height:33.3px;background:#5aa68e"></div>
<div class="fb" style="left:306.0px;top:172.3px;width:1940.0px;height:33.3px;background:#3a98d0;color:#ffffff"><span style="letter-spacing:0.29px">ParserRunner.lambda$runPlatformParse$4(List, JsonNode, String, long, PlatformParser)</span></div>
<div class="fb" style="left:2250.0px;top:172.3px;width:3.5px;height:33.3px;background:#e0844f"></div>
<div class="fb" style="left:2256.0px;top:172.3px;width:61.9px;height:33.3px;background:#964e86;color:#ffffff"><span style="letter-spacing:0.21px">un...</span></div>
<div class="fb" style="left:2322.0px;top:172.3px;width:59.6px;height:33.3px;background:#e0844f"></div>
<div class="fb" style="left:2386.2px;top:172.3px;width:1.8px;height:33.3px;background:#9a82c0"></div>
<div class="fb" style="left:2392.1px;top:172.3px;width:4.0px;height:33.3px;background:#fbca08"></div>
<div class="fb" style="left:2400.0px;top:172.3px;width:2.0px;height:33.3px;background:#e0844f"></div>
<div class="fb" style="left:2407.0px;top:172.3px;width:2.0px;height:33.3px;background:#55b594"></div>
<div class="fb" style="left:2443.6px;top:172.3px;width:2.0px;height:33.3px;background:#e0844f"></div>
<div class="fb" style="left:2458.0px;top:172.3px;width:5.4px;height:33.3px;background:#e0844f"></div>
<div class="fb" style="left:4.0px;top:208.3px;width:3.4px;height:33.3px;background:#e0844f"></div>
<div class="fb" style="left:10.2px;top:208.3px;width:11.5px;height:33.3px;background:#e0844f"></div>
<div class="fb" style="left:25.0px;top:208.3px;width:2.0px;height:33.3px;background:#9a82c0"></div>
<div class="fb" style="left:30.3px;top:208.3px;width:141.4px;height:33.3px;background:#8834a8;color:#ffffff"><span style="letter-spacing:0.38px">run</span></div>
<div class="fb" style="left:175.5px;top:208.3px;width:4.4px;height:33.3px;background:#8834a8"></div>
<div class="fb" style="left:184.2px;top:208.3px;width:1.8px;height:33.3px;background:#7b3b9b"></div>
<div class="fb" style="left:188.0px;top:208.3px;width:1.8px;height:33.3px;background:#c06a72"></div>
<div class="fb" style="left:192.0px;top:208.3px;width:1.9px;height:33.3px;background:#b088c0"></div>
<div class="fb" style="left:200.0px;top:208.3px;width:1.9px;height:33.3px;background:#4889b9"></div>
<div class="fb" style="left:206.2px;top:208.3px;width:3.8px;height:33.3px;background:#8834a8"></div>
<div class="fb" style="left:214.2px;top:208.3px;width:1.9px;height:33.3px;background:#3b6b50"></div>
<div class="fb" style="left:220.0px;top:208.3px;width:1.9px;height:33.3px;background:#3b6b50"></div>
<div class="fb" style="left:228.0px;top:208.3px;width:1.8px;height:33.3px;background:#e8aa3a"></div>
<div class="fb" style="left:236.0px;top:208.3px;width:1.8px;height:33.3px;background:#7b3b9b"></div>
<div class="fb" style="left:242.0px;top:208.3px;width:1.9px;height:33.3px;background:#8a4a7c"></div>
<div class="fb" style="left:250.0px;top:208.3px;width:1.9px;height:33.3px;background:#4889b9"></div>
<div class="fb" style="left:256.1px;top:208.3px;width:1.9px;height:33.3px;background:#d0865a"></div>
<div class="fb" style="left:260.0px;top:208.3px;width:1.9px;height:33.3px;background:#d0865a"></div>
<div class="fb" style="left:264.0px;top:208.3px;width:1.9px;height:33.3px;background:#d0865a"></div>
<div class="fb" style="left:272.0px;top:208.3px;width:1.9px;height:33.3px;background:#4889b9"></div>
<div class="fb" style="left:278.0px;top:208.3px;width:1.8px;height:33.3px;background:#e8aa3a"></div>
<div class="fb" style="left:284.2px;top:208.3px;width:3.8px;height:33.3px;background:#e0844f"></div>
<div class="fb" style="left:292.0px;top:208.3px;width:1.9px;height:33.3px;background:#7b3b9b"></div>
<div class="fb" style="left:300.0px;top:208.3px;width:2.0px;height:33.3px;background:#5aa68e"></div>
<div class="fb" style="left:306.0px;top:208.3px;width:382.0px;height:33.3px;background:#c8656f;color:#ffffff"><span style="letter-spacing:-0.02px">parse(List, JsonNode)</span></div>
<div class="fb" style="left:690.3px;top:208.3px;width:1555.7px;height:33.3px;background:#c8656f;color:#ffffff"><span style="letter-spacing:0.11px">OlxParser.parse(List, JsonNode)</span></div>
<div class="fb" style="left:2250.0px;top:208.3px;width:3.5px;height:33.3px;background:#e0844f"></div>
<div class="fb" style="left:2256.0px;top:208.3px;width:61.9px;height:33.3px;background:#559a24;color:#ffffff"><span style="letter-spacing:0.21px">un...</span></div>
<div class="fb" style="left:2322.0px;top:208.3px;width:59.6px;height:33.3px;background:#e0844f;color:#ffffff"><span style="letter-spacing:0.68px">ru...</span></div>
<div class="fb" style="left:2386.2px;top:208.3px;width:1.8px;height:33.3px;background:#9a82c0"></div>
<div class="fb" style="left:2393.0px;top:208.3px;width:2.0px;height:33.3px;background:#fbca08"></div>
<div class="fb" style="left:2400.0px;top:208.3px;width:2.0px;height:33.3px;background:#e0844f"></div>
<div class="fb" style="left:2443.6px;top:208.3px;width:2.0px;height:33.3px;background:#e0844f"></div>
<div class="fb" style="left:2458.0px;top:208.3px;width:5.4px;height:33.3px;background:#3a98d0"></div>
<div class="fb" style="left:4.0px;top:244.3px;width:3.4px;height:33.3px;background:#e0844f"></div>
<div class="fb" style="left:10.2px;top:244.3px;width:11.5px;height:33.3px;background:#e0844f"></div>
<div class="fb" style="left:26.0px;top:244.3px;width:2.0px;height:33.3px;background:#9a82c0"></div>
<div class="fb" style="left:30.3px;top:244.3px;width:6.2px;height:33.3px;background:#8834a8"></div>
<div class="fb" style="left:38.5px;top:244.3px;width:133.2px;height:33.3px;background:#8834a8;color:#ffffff"><span style="letter-spacing:0.23px">run</span></div>
<div class="fb" style="left:175.5px;top:244.3px;width:4.4px;height:33.3px;background:#8834a8"></div>
<div class="fb" style="left:184.2px;top:244.3px;width:1.8px;height:33.3px;background:#5aa68e"></div>
<div class="fb" style="left:192.0px;top:244.3px;width:1.9px;height:33.3px;background:#d0865a"></div>
<div class="fb" style="left:200.0px;top:244.3px;width:1.9px;height:33.3px;background:#4889b9"></div>
<div class="fb" style="left:206.2px;top:244.3px;width:3.8px;height:33.3px;background:#964e86"></div>
<div class="fb" style="left:214.2px;top:244.3px;width:1.9px;height:33.3px;background:#3b6b50"></div>
<div class="fb" style="left:220.0px;top:244.3px;width:1.9px;height:33.3px;background:#3b6b50"></div>
<div class="fb" style="left:228.0px;top:244.3px;width:1.8px;height:33.3px;background:#3b6b50"></div>
<div class="fb" style="left:236.0px;top:244.3px;width:1.8px;height:33.3px;background:#c06a72"></div>
<div class="fb" style="left:242.0px;top:244.3px;width:1.9px;height:33.3px;background:#8a4a7c"></div>
<div class="fb" style="left:250.0px;top:244.3px;width:1.9px;height:33.3px;background:#4889b9"></div>
<div class="fb" style="left:256.1px;top:244.3px;width:1.9px;height:33.3px;background:#d0865a"></div>
<div class="fb" style="left:260.0px;top:244.3px;width:1.9px;height:33.3px;background:#d0865a"></div>
<div class="fb" style="left:264.0px;top:244.3px;width:1.9px;height:33.3px;background:#8878a8"></div>
<div class="fb" style="left:272.0px;top:244.3px;width:1.9px;height:33.3px;background:#d0865a"></div>
<div class="fb" style="left:284.2px;top:244.3px;width:3.8px;height:33.3px;background:#55b594"></div>
<div class="fb" style="left:292.0px;top:244.3px;width:1.9px;height:33.3px;background:#d0865a"></div>
<div class="fb" style="left:300.0px;top:244.3px;width:2.0px;height:33.3px;background:#7b3b9b"></div>
<div class="fb" style="left:306.0px;top:244.3px;width:382.0px;height:33.3px;background:#c8656f;color:#ffffff"><span style="letter-spacing:0.27px">parseConfig</span></div>
<div class="fb" style="left:690.3px;top:244.3px;width:1555.7px;height:33.3px;background:#c8656f;color:#ffffff"><span style="letter-spacing:0.03px">OlxParser.parseConfig(JsonNode, JsonNode)</span></div>
<div class="fb" style="left:2250.0px;top:244.3px;width:3.5px;height:33.3px;background:#e0844f"></div>
<div class="fb" style="left:2256.0px;top:244.3px;width:61.9px;height:33.3px;background:#559a24;color:#ffffff"><span style="letter-spacing:0.21px">un...</span></div>
<div class="fb" style="left:2322.0px;top:244.3px;width:59.6px;height:33.3px;background:#e0844f;color:#ffffff"><span style="letter-spacing:0.68px">ru...</span></div>
<div class="fb" style="left:2386.2px;top:244.3px;width:1.8px;height:33.3px;background:#55b594"></div>
<div class="fb" style="left:2393.0px;top:244.3px;width:2.0px;height:33.3px;background:#fbca08"></div>
<div class="fb" style="left:2400.0px;top:244.3px;width:2.0px;height:33.3px;background:#e0844f"></div>
<div class="fb" style="left:2443.6px;top:244.3px;width:2.0px;height:33.3px;background:#e0844f"></div>
<div class="fb" style="left:2458.0px;top:244.3px;width:5.4px;height:33.3px;background:#3a98d0"></div>
<div class="fb" style="left:4.0px;top:280.3px;width:3.4px;height:33.3px;background:#e0844f"></div>
<div class="fb" style="left:10.2px;top:280.3px;width:11.6px;height:33.3px;background:#e0844f"></div>
<div class="fb" style="left:26.0px;top:280.3px;width:2.0px;height:33.3px;background:#8834a8"></div>
<div class="fb" style="left:30.5px;top:280.3px;width:5.2px;height:33.3px;background:#8834a8"></div>
<div class="fb" style="left:40.0px;top:280.3px;width:31.4px;height:33.3px;background:#8834a8"></div>
<div class="fb" style="left:74.6px;top:280.3px;width:9.9px;height:33.3px;background:#8834a8"></div>
<div class="fb" style="left:88.5px;top:280.3px;width:77.0px;height:33.3px;background:#8834a8;color:#ffffff"><span style="letter-spacing:0.95px">refr...</span></div>
<div class="fb" style="left:168.0px;top:280.3px;width:3.6px;height:33.3px;background:#8834a8"></div>
<div class="fb" style="left:175.5px;top:280.3px;width:4.4px;height:33.3px;background:#964e86"></div>
<div class="fb" style="left:184.2px;top:280.3px;width:1.8px;height:33.3px;background:#7b3b9b"></div>
<div class="fb" style="left:192.0px;top:280.3px;width:1.9px;height:33.3px;background:#d0865a"></div>
<div class="fb" style="left:200.0px;top:280.3px;width:1.9px;height:33.3px;background:#4889b9"></div>
<div class="fb" style="left:206.2px;top:280.3px;width:3.8px;height:33.3px;background:#c8656f"></div>
<div class="fb" style="left:214.2px;top:280.3px;width:1.9px;height:33.3px;background:#3b6b50"></div>
<div class="fb" style="left:220.0px;top:280.3px;width:1.9px;height:33.3px;background:#3b6b50"></div>
<div class="fb" style="left:228.0px;top:280.3px;width:1.8px;height:33.3px;background:#3b6b50"></div>
<div class="fb" style="left:236.0px;top:280.3px;width:1.8px;height:33.3px;background:#4889b9"></div>
<div class="fb" style="left:242.0px;top:280.3px;width:1.9px;height:33.3px;background:#b088c0"></div>
<div class="fb" style="left:250.0px;top:280.3px;width:1.9px;height:33.3px;background:#4889b9"></div>
<div class="fb" style="left:256.1px;top:280.3px;width:1.9px;height:33.3px;background:#d0865a"></div>
<div class="fb" style="left:260.0px;top:280.3px;width:1.9px;height:33.3px;background:#d0865a"></div>
<div class="fb" style="left:264.0px;top:280.3px;width:1.9px;height:33.3px;background:#d0865a"></div>
<div class="fb" style="left:272.0px;top:280.3px;width:1.9px;height:33.3px;background:#d0865a"></div>
<div class="fb" style="left:284.2px;top:280.3px;width:3.8px;height:33.3px;background:#8834a8"></div>
<div class="fb" style="left:292.0px;top:280.3px;width:1.9px;height:33.3px;background:#5aa68e"></div>
<div class="fb" style="left:300.0px;top:280.3px;width:2.0px;height:33.3px;background:#d0865a"></div>
<div class="fb" style="left:306.2px;top:280.3px;width:4.0px;height:33.3px;background:#36c4cc"></div>
<div class="fb" style="left:312.6px;top:280.3px;width:4.7px;height:33.3px;background:#c8656f"></div>
<div class="fb" style="left:320.4px;top:280.3px;width:357.6px;height:33.3px;background:#964e86;color:#ffffff"><span style="letter-spacing:-0.12px">inSpan(Span, Supplier)</span></div>
<div class="fb" style="left:680.3px;top:280.3px;width:7.1px;height:33.3px;background:#36c4cc"></div>
<div class="fb" style="left:690.3px;top:280.3px;width:1187.4px;height:33.3px;background:#c8656f;color:#ffffff"><span style="letter-spacing:-0.12px">OlxParser.fetchListingsJson(String)</span></div>
<div class="fb" style="left:1880.0px;top:280.3px;width:346.0px;height:33.3px;background:#964e86;color:#ffffff"><span style="letter-spacing:0.20px">inSpan(Span, Supplier)</span></div>
<div class="fb" style="left:2228.3px;top:280.3px;width:17.5px;height:33.3px;background:#36c4cc"></div>
<div class="fb" style="left:2250.0px;top:280.3px;width:2.3px;height:33.3px;background:#3466b0"></div>
<div class="fb" style="left:2256.2px;top:280.3px;width:61.6px;height:33.3px;background:#559a24;color:#ffffff"><span style="letter-spacing:0.56px">re...</span></div>
<div class="fb" style="left:2322.0px;top:280.3px;width:59.8px;height:33.3px;background:#e0844f;color:#ffffff"><span style="letter-spacing:0.38px">run</span></div>
<div class="fb" style="left:2394.2px;top:280.3px;width:1.6px;height:33.3px;background:#fbca08"></div>
<div class="fb" style="left:2400.0px;top:280.3px;width:1.5px;height:33.3px;background:#e0844f"></div>
<div class="fb" style="left:2443.8px;top:280.3px;width:2.1px;height:33.3px;background:#3466b0"></div>
<div class="fb" style="left:2457.8px;top:280.3px;width:6.2px;height:33.3px;background:#3a98d0"></div>
<div class="fb" style="left:4.0px;top:316.3px;width:3.4px;height:33.3px;background:#e0844f"></div>
<div class="fb" style="left:10.2px;top:316.3px;width:11.6px;height:33.3px;background:#e0844f"></div>
<div class="fb" style="left:26.0px;top:316.3px;width:2.0px;height:33.3px;background:#8834a8"></div>
<div class="fb" style="left:32.2px;top:316.3px;width:3.5px;height:33.3px;background:#8834a8"></div>
<div class="fb" style="left:40.4px;top:316.3px;width:1.4px;height:33.3px;background:#8834a8"></div>
<div class="fb" style="left:44.4px;top:316.3px;width:27.0px;height:33.3px;background:#8834a8"></div>
<div class="fb" style="left:76.7px;top:316.3px;width:1.7px;height:33.3px;background:#8834a8"></div>
<div class="fb" style="left:80.5px;top:316.3px;width:4.9px;height:33.3px;background:#8834a8"></div>
<div class="fb" style="left:88.5px;top:316.3px;width:77.0px;height:33.3px;background:#8834a8;color:#ffffff"><span style="letter-spacing:0.95px">refr...</span></div>
<div class="fb" style="left:168.0px;top:316.3px;width:3.6px;height:33.3px;background:#8834a8"></div>
<div class="fb" style="left:175.5px;top:316.3px;width:4.4px;height:33.3px;background:#c8656f"></div>
<div class="fb" style="left:184.2px;top:316.3px;width:1.8px;height:33.3px;background:#7b3b9b"></div>
<div class="fb" style="left:192.0px;top:316.3px;width:1.9px;height:33.3px;background:#d0865a"></div>
<div class="fb" style="left:200.0px;top:316.3px;width:1.9px;height:33.3px;background:#4889b9"></div>
<div class="fb" style="left:206.2px;top:316.3px;width:1.9px;height:33.3px;background:#c06a72"></div>
<div class="fb" style="left:214.2px;top:316.3px;width:1.9px;height:33.3px;background:#3b6b50"></div>
<div class="fb" style="left:220.0px;top:316.3px;width:1.9px;height:33.3px;background:#3b6b50"></div>
<div class="fb" style="left:228.0px;top:316.3px;width:1.8px;height:33.3px;background:#3b6b50"></div>
<div class="fb" style="left:236.0px;top:316.3px;width:1.8px;height:33.3px;background:#d0865a"></div>
<div class="fb" style="left:242.0px;top:316.3px;width:1.9px;height:33.3px;background:#b088c0"></div>
<div class="fb" style="left:250.0px;top:316.3px;width:1.9px;height:33.3px;background:#4889b9"></div>
<div class="fb" style="left:256.1px;top:316.3px;width:1.9px;height:33.3px;background:#d0865a"></div>
<div class="fb" style="left:260.0px;top:316.3px;width:1.9px;height:33.3px;background:#d0865a"></div>
<div class="fb" style="left:264.0px;top:316.3px;width:1.9px;height:33.3px;background:#d0865a"></div>
<div class="fb" style="left:272.0px;top:316.3px;width:1.9px;height:33.3px;background:#4889b9"></div>
<div class="fb" style="left:284.2px;top:316.3px;width:3.8px;height:33.3px;background:#9a82c0"></div>
<div class="fb" style="left:292.0px;top:316.3px;width:1.9px;height:33.3px;background:#7b3b9b"></div>
<div class="fb" style="left:300.0px;top:316.3px;width:2.0px;height:33.3px;background:#5aa68e"></div>
<div class="fb" style="left:306.2px;top:316.3px;width:4.0px;height:33.3px;background:#36c4cc"></div>
<div class="fb" style="left:312.6px;top:316.3px;width:4.7px;height:33.3px;background:#964e86"></div>
<div class="fb" style="left:320.4px;top:316.3px;width:357.6px;height:33.3px;background:#c8656f;color:#ffffff"><span style="letter-spacing:-0.45px">get()</span></div>
<div class="fb" style="left:680.3px;top:316.3px;width:5.5px;height:33.3px;background:#36c4cc"></div>
<div class="fb" style="left:690.3px;top:316.3px;width:1187.4px;height:33.3px;background:#964e86;color:#ffffff"><span style="letter-spacing:0.27px">PipelineTelemetry.inNewSpan(String, Map, Supplier)</span></div>
<div class="fb" style="left:1880.0px;top:316.3px;width:346.0px;height:33.3px;background:#c8656f;color:#ffffff"><span style="letter-spacing:0.20px">get()</span></div>
<div class="fb" style="left:2228.3px;top:316.3px;width:11.5px;height:33.3px;background:#36c4cc"></div>
<div class="fb" style="left:2242.3px;top:316.3px;width:1.5px;height:33.3px;background:#9a82c0"></div>
<div class="fb" style="left:2250.0px;top:316.3px;width:2.3px;height:33.3px;background:#e0844f"></div>
<div class="fb" style="left:2256.0px;top:316.3px;width:56.0px;height:33.3px;background:#559a24"></div>
<div class="fb" style="left:2314.0px;top:316.3px;width:1.6px;height:33.3px;background:#559a24"></div>
<div class="fb" style="left:2322.0px;top:316.3px;width:59.8px;height:33.3px;background:#e0844f;color:#ffffff"><span style="letter-spacing:0.20px">run</span></div>
<div class="fb" style="left:2393.8px;top:316.3px;width:2.0px;height:33.3px;background:#8834a8"></div>
<div class="fb" style="left:2400.0px;top:316.3px;width:1.5px;height:33.3px;background:#e0844f"></div>
<div class="fb" style="left:2458.6px;top:316.3px;width:3.1px;height:33.3px;background:#e0844f"></div>
<div class="fb" style="left:4.0px;top:352.3px;width:3.4px;height:33.3px;background:#e0844f"></div>
<div class="fb" style="left:10.2px;top:352.3px;width:11.6px;height:33.3px;background:#e0844f"></div>
<div class="fb" style="left:26.0px;top:352.3px;width:2.0px;height:33.3px;background:#8834a8"></div>
<div class="fb" style="left:32.2px;top:352.3px;width:3.5px;height:33.3px;background:#8834a8"></div>
<div class="fb" style="left:40.0px;top:352.3px;width:1.8px;height:33.3px;background:#8a9a3a"></div>
<div class="fb" style="left:44.4px;top:352.3px;width:27.0px;height:33.3px;background:#8834a8"></div>
<div class="fb" style="left:76.7px;top:352.3px;width:1.7px;height:33.3px;background:#8834a8"></div>
<div class="fb" style="left:81.0px;top:352.3px;width:4.4px;height:33.3px;background:#8834a8"></div>
<div class="fb" style="left:88.5px;top:352.3px;width:77.0px;height:33.3px;background:#964e86;color:#ffffff"><span style="letter-spacing:0.95px">refr...</span></div>
<div class="fb" style="left:168.0px;top:352.3px;width:3.6px;height:33.3px;background:#8834a8"></div>
<div class="fb" style="left:175.5px;top:352.3px;width:4.4px;height:33.3px;background:#c8656f"></div>
<div class="fb" style="left:184.2px;top:352.3px;width:1.8px;height:33.3px;background:#b088c0"></div>
<div class="fb" style="left:192.0px;top:352.3px;width:1.9px;height:33.3px;background:#d0865a"></div>
<div class="fb" style="left:200.0px;top:352.3px;width:1.9px;height:33.3px;background:#4889b9"></div>
<div class="fb" style="left:206.2px;top:352.3px;width:1.9px;height:33.3px;background:#c06a72"></div>
<div class="fb" style="left:214.2px;top:352.3px;width:1.9px;height:33.3px;background:#3b6b50"></div>
<div class="fb" style="left:220.0px;top:352.3px;width:1.9px;height:33.3px;background:#3b6b50"></div>
<div class="fb" style="left:228.0px;top:352.3px;width:1.8px;height:33.3px;background:#3b6b50"></div>
<div class="fb" style="left:236.0px;top:352.3px;width:1.8px;height:33.3px;background:#4889b9"></div>
<div class="fb" style="left:242.0px;top:352.3px;width:1.9px;height:33.3px;background:#8878a8"></div>
<div class="fb" style="left:250.0px;top:352.3px;width:1.9px;height:33.3px;background:#4889b9"></div>
<div class="fb" style="left:256.1px;top:352.3px;width:1.9px;height:33.3px;background:#4889b9"></div>
<div class="fb" style="left:260.0px;top:352.3px;width:1.9px;height:33.3px;background:#d0865a"></div>
<div class="fb" style="left:264.0px;top:352.3px;width:1.9px;height:33.3px;background:#c06a72"></div>
<div class="fb" style="left:272.0px;top:352.3px;width:1.9px;height:33.3px;background:#4889b9"></div>
<div class="fb" style="left:284.2px;top:352.3px;width:3.8px;height:33.3px;background:#9a82c0"></div>
<div class="fb" style="left:292.0px;top:352.3px;width:1.9px;height:33.3px;background:#8878a8"></div>
<div class="fb" style="left:300.0px;top:352.3px;width:2.0px;height:33.3px;background:#7b3b9b"></div>
<div class="fb" style="left:306.2px;top:352.3px;width:4.0px;height:33.3px;background:#964e86"></div>
<div class="fb" style="left:312.6px;top:352.3px;width:4.7px;height:33.3px;background:#964e86"></div>
<div class="fb" style="left:320.4px;top:352.3px;width:357.6px;height:33.3px;background:#c8656f;color:#ffffff"><span style="letter-spacing:0.69px">lambda$parseConfig$0</span></div>
<div class="fb" style="left:680.3px;top:352.3px;width:3.1px;height:33.3px;background:#964e86"></div>
<div class="fb" style="left:690.3px;top:352.3px;width:1187.4px;height:33.3px;background:#964e86;color:#ffffff"><span style="letter-spacing:0.23px">PipelineTelemetry.inSpan(Span, Supplier)</span></div>
<div class="fb" style="left:1880.0px;top:352.3px;width:346.0px;height:33.3px;background:#c8656f;color:#ffffff"><span style="letter-spacing:0.20px">lambda$parseConfig$0</span></div>
<div class="fb" style="left:2228.3px;top:352.3px;width:7.7px;height:33.3px;background:#964e86"></div>
<div class="fb" style="left:2238.4px;top:352.3px;width:1.2px;height:33.3px;background:#36c4cc"></div>
<div class="fb" style="left:2242.3px;top:352.3px;width:1.5px;height:33.3px;background:#9a82c0"></div>
<div class="fb" style="left:2250.0px;top:352.3px;width:2.3px;height:33.3px;background:#e0844f"></div>
<div class="fb" style="left:2256.0px;top:352.3px;width:54.0px;height:33.3px;background:#559a24"></div>
<div class="fb" style="left:2314.0px;top:352.3px;width:1.6px;height:33.3px;background:#8834a8"></div>
<div class="fb" style="left:2322.0px;top:352.3px;width:59.8px;height:33.3px;background:#e0844f;color:#ffffff"><span style="letter-spacing:0.20px">run</span></div>
<div class="fb" style="left:2393.8px;top:352.3px;width:2.0px;height:33.3px;background:#8834a8"></div>
<div class="fb" style="left:2458.6px;top:352.3px;width:3.1px;height:33.3px;background:#e0844f"></div>
<div class="fb" style="left:4.0px;top:388.3px;width:3.4px;height:33.3px;background:#e0844f"></div>
<div class="fb" style="left:10.2px;top:388.3px;width:11.6px;height:33.3px;background:#e0844f"></div>
<div class="fb" style="left:26.0px;top:388.3px;width:2.0px;height:33.3px;background:#9a82c0"></div>
<div class="fb" style="left:34.0px;top:388.3px;width:1.7px;height:33.3px;background:#2fb1e0"></div>
<div class="fb" style="left:40.0px;top:388.3px;width:1.8px;height:33.3px;background:#8a9a3a"></div>
<div class="fb" style="left:44.4px;top:388.3px;width:27.0px;height:33.3px;background:#8834a8"></div>
<div class="fb" style="left:76.3px;top:388.3px;width:1.7px;height:33.3px;background:#fbca08"></div>
<div class="fb" style="left:81.9px;top:388.3px;width:3.5px;height:33.3px;background:#8834a8"></div>
<div class="fb" style="left:88.5px;top:388.3px;width:77.0px;height:33.3px;background:#c8656f;color:#ffffff"><span style="letter-spacing:0.95px">refr...</span></div>
<div class="fb" style="left:168.0px;top:388.3px;width:3.6px;height:33.3px;background:#55b594"></div>
<div class="fb" style="left:175.5px;top:388.3px;width:4.4px;height:33.3px;background:#c8656f"></div>
<div class="fb" style="left:184.2px;top:388.3px;width:1.8px;height:33.3px;background:#b088c0"></div>
<div class="fb" style="left:192.0px;top:388.3px;width:1.9px;height:33.3px;background:#3a5c9a"></div>
<div class="fb" style="left:200.0px;top:388.3px;width:1.9px;height:33.3px;background:#4889b9"></div>
<div class="fb" style="left:206.2px;top:388.3px;width:1.9px;height:33.3px;background:#c06a72"></div>
<div class="fb" style="left:214.2px;top:388.3px;width:1.9px;height:33.3px;background:#3b6b50"></div>
<div class="fb" style="left:220.0px;top:388.3px;width:1.9px;height:33.3px;background:#3b6b50"></div>
<div class="fb" style="left:228.0px;top:388.3px;width:1.8px;height:33.3px;background:#3b6b50"></div>
<div class="fb" style="left:236.0px;top:388.3px;width:1.8px;height:33.3px;background:#d0865a"></div>
<div class="fb" style="left:242.0px;top:388.3px;width:1.9px;height:33.3px;background:#8878a8"></div>
<div class="fb" style="left:250.0px;top:388.3px;width:1.9px;height:33.3px;background:#4889b9"></div>
<div class="fb" style="left:256.1px;top:388.3px;width:1.9px;height:33.3px;background:#4889b9"></div>
<div class="fb" style="left:260.0px;top:388.3px;width:1.9px;height:33.3px;background:#4889b9"></div>
<div class="fb" style="left:264.0px;top:388.3px;width:1.9px;height:33.3px;background:#8878a8"></div>
<div class="fb" style="left:272.0px;top:388.3px;width:1.9px;height:33.3px;background:#d0865a"></div>
<div class="fb" style="left:284.2px;top:388.3px;width:3.8px;height:33.3px;background:#8834a8"></div>
<div class="fb" style="left:292.0px;top:388.3px;width:1.9px;height:33.3px;background:#8878a8"></div>
<div class="fb" style="left:300.0px;top:388.3px;width:2.0px;height:33.3px;background:#8878a8"></div>
<div class="fb" style="left:306.2px;top:388.3px;width:4.0px;height:33.3px;background:#36c4cc"></div>
<div class="fb" style="left:312.6px;top:388.3px;width:4.7px;height:33.3px;background:#c8656f"></div>
<div class="fb" style="left:320.4px;top:388.3px;width:205.6px;height:33.3px;background:#f7aa2b;color:#0a0a0a"><span style="letter-spacing:0.15px">extractFields</span></div>
<div class="fb" style="left:528.2px;top:388.3px;width:109.3px;height:33.3px;background:#c8656f;color:#ffffff"><span style="letter-spacing:0.20px">fetchN...</span></div>
<div class="fb" style="left:640.6px;top:388.3px;width:8.8px;height:33.3px;background:#2fb1e0"></div>
<div class="fb" style="left:654.0px;top:388.3px;width:1.6px;height:33.3px;background:#c8656f"></div>
<div class="fb" style="left:658.4px;top:388.3px;width:11.2px;height:33.3px;background:#c8656f"></div>
<div class="fb" style="left:680.3px;top:388.3px;width:3.1px;height:33.3px;background:#36c4cc"></div>
<div class="fb" style="left:690.3px;top:388.3px;width:1187.4px;height:33.3px;background:#c8656f;color:#ffffff"><span style="letter-spacing:1.04px">OlxParser$$Lambda.0x0000000301686ae8.get()</span></div>
<div class="fb" style="left:1882.0px;top:388.3px;width:344.0px;height:33.3px;background:#f7aa2b;color:#0a0a0a"><span style="letter-spacing:0.18px">extractFields</span></div>
<div class="fb" style="left:2228.3px;top:388.3px;width:7.7px;height:33.3px;background:#36c4cc"></div>
<div class="fb" style="left:2238.4px;top:388.3px;width:1.2px;height:33.3px;background:#36c4cc"></div>
<div class="fb" style="left:2242.3px;top:388.3px;width:1.5px;height:33.3px;background:#9a82c0"></div>
<div class="fb" style="left:2250.0px;top:388.3px;width:2.3px;height:33.3px;background:#9a82c0"></div>
<div class="fb" style="left:2256.0px;top:388.3px;width:54.0px;height:33.3px;background:#559a24"></div>
<div class="fb" style="left:2314.0px;top:388.3px;width:1.6px;height:33.3px;background:#8834a8"></div>
<div class="fb" style="left:2322.0px;top:388.3px;width:59.8px;height:33.3px;background:#e0844f;color:#ffffff"><span style="letter-spacing:0.20px">run</span></div>
<div class="fb" style="left:2393.8px;top:388.3px;width:2.0px;height:33.3px;background:#8834a8"></div>
<div class="fb" style="left:2458.6px;top:388.3px;width:3.1px;height:33.3px;background:#e0844f"></div>
<div class="fb" style="left:4.0px;top:424.3px;width:3.4px;height:33.3px;background:#55b594"></div>
<div class="fb" style="left:10.2px;top:424.3px;width:11.6px;height:33.3px;background:#e0844f"></div>
<div class="fb" style="left:34.0px;top:424.3px;width:1.7px;height:33.3px;background:#2fb1e0"></div>
<div class="fb" style="left:40.0px;top:424.3px;width:1.8px;height:33.3px;background:#8a9a3a"></div>
<div class="fb" style="left:44.4px;top:424.3px;width:27.0px;height:33.3px;background:#55b594"></div>
<div class="fb" style="left:76.7px;top:424.3px;width:1.7px;height:33.3px;background:#9a82c0"></div>
<div class="fb" style="left:81.9px;top:424.3px;width:3.5px;height:33.3px;background:#8834a8"></div>
<div class="fb" style="left:26.0px;top:424.3px;width:2.0px;height:33.3px;background:#8834a8"></div>
<div class="fb" style="left:134.0px;top:424.3px;width:1.7px;height:33.3px;background:#c8656f"></div>
<div class="fb" style="left:88.5px;top:424.3px;width:43.0px;height:33.3px;background:#c8656f"></div>
<div class="fb" style="left:137.6px;top:424.3px;width:7.9px;height:33.3px;background:#964e86"></div>
<div class="fb" style="left:148.0px;top:424.3px;width:12.0px;height:33.3px;background:#c8656f"></div>
<div class="fb" style="left:162.0px;top:424.3px;width:3.5px;height:33.3px;background:#c8656f"></div>
<div class="fb" style="left:168.0px;top:424.3px;width:3.6px;height:33.3px;background:#8834a8"></div>
<div class="fb" style="left:175.5px;top:424.3px;width:4.4px;height:33.3px;background:#c8656f"></div>
<div class="fb" style="left:184.2px;top:424.3px;width:1.8px;height:33.3px;background:#d0865a"></div>
<div class="fb" style="left:192.0px;top:424.3px;width:1.9px;height:33.3px;background:#3a5c9a"></div>
<div class="fb" style="left:200.0px;top:424.3px;width:1.9px;height:33.3px;background:#4889b9"></div>
<div class="fb" style="left:206.2px;top:424.3px;width:1.9px;height:33.3px;background:#7b3b9b"></div>
<div class="fb" style="left:214.2px;top:424.3px;width:1.9px;height:33.3px;background:#3b6b50"></div>
<div class="fb" style="left:220.0px;top:424.3px;width:1.9px;height:33.3px;background:#3b6b50"></div>
<div class="fb" style="left:228.0px;top:424.3px;width:1.8px;height:33.3px;background:#3b6b50"></div>
<div class="fb" style="left:236.0px;top:424.3px;width:1.8px;height:33.3px;background:#3a9ccc"></div>
<div class="fb" style="left:242.0px;top:424.3px;width:1.9px;height:33.3px;background:#8878a8"></div>
<div class="fb" style="left:250.0px;top:424.3px;width:1.9px;height:33.3px;background:#4889b9"></div>
<div class="fb" style="left:256.1px;top:424.3px;width:1.9px;height:33.3px;background:#4889b9"></div>
<div class="fb" style="left:260.0px;top:424.3px;width:1.9px;height:33.3px;background:#4889b9"></div>
<div class="fb" style="left:264.0px;top:424.3px;width:1.9px;height:33.3px;background:#c06a72"></div>
<div class="fb" style="left:272.0px;top:424.3px;width:1.9px;height:33.3px;background:#d0865a"></div>
<div class="fb" style="left:284.2px;top:424.3px;width:3.8px;height:33.3px;background:#8834a8"></div>
<div class="fb" style="left:292.0px;top:424.3px;width:1.9px;height:33.3px;background:#7b3b9b"></div>
<div class="fb" style="left:300.0px;top:424.3px;width:2.0px;height:33.3px;background:#8878a8"></div>
<div class="fb" style="left:306.2px;top:424.3px;width:4.0px;height:33.3px;background:#36c4cc"></div>
<div class="fb" style="left:312.6px;top:424.3px;width:4.7px;height:33.3px;background:#c8656f"></div>
<div class="fb" style="left:320.4px;top:424.3px;width:205.6px;height:33.3px;background:#964e86;color:#ffffff"><span style="letter-spacing:-0.37px">inNewSpan</span></div>
<div class="fb" style="left:528.2px;top:424.3px;width:109.3px;height:33.3px;background:#964e86;color:#ffffff"><span style="letter-spacing:0.20px">inNew...</span></div>
<div class="fb" style="left:640.6px;top:424.3px;width:8.8px;height:33.3px;background:#2fb1e0"></div>
<div class="fb" style="left:654.0px;top:424.3px;width:1.6px;height:33.3px;background:#964e86"></div>
<div class="fb" style="left:658.4px;top:424.3px;width:11.2px;height:33.3px;background:#964e86"></div>
<div class="fb" style="left:680.3px;top:424.3px;width:3.1px;height:33.3px;background:#36c4cc"></div>
<div class="fb" style="left:690.3px;top:424.3px;width:1187.4px;height:33.3px;background:#c8656f;color:#ffffff"><span style="letter-spacing:0.19px">OlxParser.lambda$fetchListingsJson$1(String)</span></div>
<div class="fb" style="left:1882.0px;top:424.3px;width:344.0px;height:33.3px;background:#964e86;color:#ffffff"><span style="letter-spacing:-0.48px">inNewSpan</span></div>
<div class="fb" style="left:2228.3px;top:424.3px;width:7.7px;height:33.3px;background:#36c4cc"></div>
<div class="fb" style="left:2238.4px;top:424.3px;width:1.2px;height:33.3px;background:#36c4cc"></div>
<div class="fb" style="left:2242.3px;top:424.3px;width:1.5px;height:33.3px;background:#9a82c0"></div>
<div class="fb" style="left:2250.0px;top:424.3px;width:2.3px;height:33.3px;background:#e0844f"></div>
<div class="fb" style="left:2256.0px;top:424.3px;width:54.0px;height:33.3px;background:#559a24"></div>
<div class="fb" style="left:2314.0px;top:424.3px;width:1.6px;height:33.3px;background:#8834a8"></div>
<div class="fb" style="left:2322.0px;top:424.3px;width:59.8px;height:33.3px;background:#e0844f;color:#ffffff"><span style="letter-spacing:0.20px">ru...</span></div>
<div class="fb" style="left:2393.8px;top:424.3px;width:2.0px;height:33.3px;background:#8834a8"></div>
<div class="fb" style="left:2458.6px;top:424.3px;width:3.1px;height:33.3px;background:#e0844f"></div>
<div class="fb" style="left:4.0px;top:460.3px;width:3.4px;height:33.3px;background:#3466b0"></div>
<div class="fb" style="left:10.2px;top:460.3px;width:11.6px;height:33.3px;background:#c44cc0"></div>
<div class="fb" style="left:34.0px;top:460.3px;width:1.7px;height:33.3px;background:#2fb1e0"></div>
<div class="fb" style="left:40.0px;top:460.3px;width:1.8px;height:33.3px;background:#8a9a3a"></div>
<div class="fb" style="left:44.4px;top:460.3px;width:27.0px;height:33.3px;background:#8834a8"></div>
<div class="fb" style="left:76.7px;top:460.3px;width:1.7px;height:33.3px;background:#9a82c0"></div>
<div class="fb" style="left:81.9px;top:460.3px;width:3.5px;height:33.3px;background:#8834a8"></div>
<div class="fb" style="left:134.0px;top:460.3px;width:1.7px;height:33.3px;background:#c8656f"></div>
<div class="fb" style="left:88.5px;top:460.3px;width:43.0px;height:33.3px;background:#c8656f"></div>
<div class="fb" style="left:137.6px;top:460.3px;width:7.9px;height:33.3px;background:#964e86"></div>
<div class="fb" style="left:148.0px;top:460.3px;width:12.0px;height:33.3px;background:#3f7a58"></div>
<div class="fb" style="left:162.0px;top:460.3px;width:3.5px;height:33.3px;background:#c8656f"></div>
<div class="fb" style="left:168.0px;top:460.3px;width:3.6px;height:33.3px;background:#8834a8"></div>
<div class="fb" style="left:175.5px;top:460.3px;width:4.4px;height:33.3px;background:#8834a8"></div>
<div class="fb" style="left:184.2px;top:460.3px;width:1.8px;height:33.3px;background:#d0865a"></div>
<div class="fb" style="left:192.0px;top:460.3px;width:1.9px;height:33.3px;background:#3a5c9a"></div>
<div class="fb" style="left:200.0px;top:460.3px;width:1.9px;height:33.3px;background:#4889b9"></div>
<div class="fb" style="left:206.2px;top:460.3px;width:1.9px;height:33.3px;background:#7b3b9b"></div>
<div class="fb" style="left:214.2px;top:460.3px;width:1.9px;height:33.3px;background:#3b6b50"></div>
<div class="fb" style="left:220.0px;top:460.3px;width:1.9px;height:33.3px;background:#3b6b50"></div>
<div class="fb" style="left:228.0px;top:460.3px;width:1.8px;height:33.3px;background:#3b6b50"></div>
<div class="fb" style="left:236.0px;top:460.3px;width:1.8px;height:33.3px;background:#d0865a"></div>
<div class="fb" style="left:242.0px;top:460.3px;width:1.9px;height:33.3px;background:#3b6b50"></div>
<div class="fb" style="left:250.0px;top:460.3px;width:1.9px;height:33.3px;background:#4889b9"></div>
<div class="fb" style="left:256.1px;top:460.3px;width:1.9px;height:33.3px;background:#d0865a"></div>
<div class="fb" style="left:260.0px;top:460.3px;width:1.9px;height:33.3px;background:#4889b9"></div>
<div class="fb" style="left:264.0px;top:460.3px;width:1.9px;height:33.3px;background:#8878a8"></div>
<div class="fb" style="left:272.0px;top:460.3px;width:1.9px;height:33.3px;background:#4889b9"></div>
<div class="fb" style="left:284.2px;top:460.3px;width:3.8px;height:33.3px;background:#6a68b8"></div>
<div class="fb" style="left:292.0px;top:460.3px;width:1.9px;height:33.3px;background:#7b3b9b"></div>
<div class="fb" style="left:300.0px;top:460.3px;width:2.0px;height:33.3px;background:#7b3b9b"></div>
<div class="fb" style="left:306.2px;top:460.3px;width:4.0px;height:33.3px;background:#36c4cc"></div>
<div class="fb" style="left:314.0px;top:460.3px;width:2.0px;height:33.3px;background:#964e86"></div>
<div class="fb" style="left:320.4px;top:460.3px;width:205.6px;height:33.3px;background:#964e86;color:#ffffff"><span style="letter-spacing:-0.55px">inSpan</span></div>
<div class="fb" style="left:528.2px;top:460.3px;width:109.3px;height:33.3px;background:#964e86;color:#ffffff"><span style="letter-spacing:0.20px">inSpan</span></div>
<div class="fb" style="left:640.6px;top:460.3px;width:7.1px;height:33.3px;background:#c44cc0"></div>
<div class="fb" style="left:654.0px;top:460.3px;width:1.6px;height:33.3px;background:#964e86"></div>
<div class="fb" style="left:658.4px;top:460.3px;width:11.2px;height:33.3px;background:#964e86"></div>
<div class="fb" style="left:680.3px;top:460.3px;width:3.1px;height:33.3px;background:#36c4cc"></div>
<div class="fb" style="left:690.3px;top:460.3px;width:1015.7px;height:33.3px;background:#c8656f;color:#ffffff"><span style="letter-spacing:0.18px">OlxParser.tryParsePrerenderedStateBytes(byte[])</span></div>
<div class="fb" style="left:1708.4px;top:460.3px;width:163.0px;height:33.3px;background:#c8656f;color:#ffffff"><span style="letter-spacing:0.16px">tryParseNe...</span></div>
<div class="fb" style="left:1874.0px;top:460.3px;width:3.0px;height:33.3px;background:#f7aa2b"></div>
<div class="fb" style="left:1882.0px;top:460.3px;width:344.0px;height:33.3px;background:#964e86;color:#ffffff"><span style="letter-spacing:-0.12px">inSpan(Span, Supplier)</span></div>
<div class="fb" style="left:2228.3px;top:460.3px;width:7.7px;height:33.3px;background:#36c4cc"></div>
<div class="fb" style="left:2238.0px;top:460.3px;width:1.8px;height:33.3px;background:#3466b0"></div>
<div class="fb" style="left:2242.0px;top:460.3px;width:1.7px;height:33.3px;background:#9a82c0"></div>
<div class="fb" style="left:2249.8px;top:460.3px;width:2.2px;height:33.3px;background:#3f7a58"></div>
<div class="fb" style="left:2256.0px;top:460.3px;width:54.0px;height:33.3px;background:#559a24"></div>
<div class="fb" style="left:2322.0px;top:460.3px;width:60.0px;height:33.3px;background:#e0844f"></div>
<div class="fb" style="left:2458.6px;top:460.3px;width:3.1px;height:33.3px;background:#e0844f"></div>
<div class="fb" style="left:4.0px;top:496.3px;width:3.4px;height:33.3px;background:#9a82c0"></div>
<div class="fb" style="left:10.2px;top:496.3px;width:11.6px;height:33.3px;background:#c44cc0"></div>
<div class="fb" style="left:34.0px;top:496.3px;width:1.7px;height:33.3px;background:#2fb1e0"></div>
<div class="fb" style="left:40.0px;top:496.3px;width:1.8px;height:33.3px;background:#e0844f"></div>
<div class="fb" style="left:44.4px;top:496.3px;width:27.0px;height:33.3px;background:#8834a8"></div>
<div class="fb" style="left:76.7px;top:496.3px;width:1.7px;height:33.3px;background:#9a82c0"></div>
<div class="fb" style="left:81.9px;top:496.3px;width:3.5px;height:33.3px;background:#8834a8"></div>
<div class="fb" style="left:88.5px;top:496.3px;width:41.3px;height:33.3px;background:#c8656f"></div>
<div class="fb" style="left:134.0px;top:496.3px;width:1.7px;height:33.3px;background:#3f7a58"></div>
<div class="fb" style="left:138.3px;top:496.3px;width:1.3px;height:33.3px;background:#3f7a58"></div>
<div class="fb" style="left:142.0px;top:496.3px;width:3.5px;height:33.3px;background:#8834a8"></div>
<div class="fb" style="left:148.0px;top:496.3px;width:12.0px;height:33.3px;background:#3f7a58"></div>
<div class="fb" style="left:162.0px;top:496.3px;width:3.5px;height:33.3px;background:#c8656f"></div>
<div class="fb" style="left:168.0px;top:496.3px;width:3.6px;height:33.3px;background:#c68ad0"></div>
<div class="fb" style="left:175.5px;top:496.3px;width:4.4px;height:33.3px;background:#8834a8"></div>
<div class="fb" style="left:184.2px;top:496.3px;width:1.8px;height:33.3px;background:#d0865a"></div>
<div class="fb" style="left:192.0px;top:496.3px;width:1.9px;height:33.3px;background:#3a5c9a"></div>
<div class="fb" style="left:200.0px;top:496.3px;width:1.9px;height:33.3px;background:#5aa68e"></div>
<div class="fb" style="left:206.2px;top:496.3px;width:1.9px;height:33.3px;background:#7b3b9b"></div>
<div class="fb" style="left:214.2px;top:496.3px;width:1.9px;height:33.3px;background:#3b6b50"></div>
<div class="fb" style="left:220.0px;top:496.3px;width:1.9px;height:33.3px;background:#7b3b9b"></div>
<div class="fb" style="left:228.0px;top:496.3px;width:1.8px;height:33.3px;background:#3b6b50"></div>
<div class="fb" style="left:236.0px;top:496.3px;width:1.8px;height:33.3px;background:#d0865a"></div>
<div class="fb" style="left:242.0px;top:496.3px;width:1.9px;height:33.3px;background:#3b6b50"></div>
<div class="fb" style="left:250.0px;top:496.3px;width:1.9px;height:33.3px;background:#4889b9"></div>
<div class="fb" style="left:256.1px;top:496.3px;width:1.9px;height:33.3px;background:#d0865a"></div>
<div class="fb" style="left:260.0px;top:496.3px;width:1.9px;height:33.3px;background:#d0865a"></div>
<div class="fb" style="left:264.0px;top:496.3px;width:1.9px;height:33.3px;background:#8878a8"></div>
<div class="fb" style="left:272.0px;top:496.3px;width:1.9px;height:33.3px;background:#4889b9"></div>
<div class="fb" style="left:284.2px;top:496.3px;width:3.8px;height:33.3px;background:#6a68b8"></div>
<div class="fb" style="left:292.0px;top:496.3px;width:1.9px;height:33.3px;background:#7b3b9b"></div>
<div class="fb" style="left:300.0px;top:496.3px;width:2.0px;height:33.3px;background:#7b3b9b"></div>
<div class="fb" style="left:306.2px;top:496.3px;width:4.0px;height:33.3px;background:#fbca08"></div>
<div class="fb" style="left:314.0px;top:496.3px;width:2.0px;height:33.3px;background:#964e86"></div>
<div class="fb" style="left:320.4px;top:496.3px;width:205.6px;height:33.3px;background:#f7aa2b;color:#0a0a0a"><span style="letter-spacing:-0.45px">get()</span></div>
<div class="fb" style="left:528.2px;top:496.3px;width:109.3px;height:33.3px;background:#c8656f;color:#ffffff"><span style="letter-spacing:0.20px">get()</span></div>
<div class="fb" style="left:640.6px;top:496.3px;width:7.1px;height:33.3px;background:#c44cc0"></div>
<div class="fb" style="left:654.0px;top:496.3px;width:1.6px;height:33.3px;background:#c8656f"></div>
<div class="fb" style="left:658.4px;top:496.3px;width:11.2px;height:33.3px;background:#c8656f"></div>
<div class="fb" style="left:680.3px;top:496.3px;width:3.1px;height:33.3px;background:#fbca08"></div>
<div class="fb" style="left:690.3px;top:496.3px;width:986.0px;height:33.3px;background:#c8656f;color:#ffffff"><span style="letter-spacing:0.28px">OlxParser.parsePrerenderedStateQuotedBytes(byte[], int, String)</span></div>
<div class="fb" style="left:1678.7px;top:496.3px;width:27.3px;height:33.3px;background:#c8656f"></div>
<div class="fb" style="left:1708.4px;top:496.3px;width:161.3px;height:33.3px;background:#c8656f;color:#ffffff"><span style="letter-spacing:0.62px">extractNex...</span></div>
<div class="fb" style="left:1874.0px;top:496.3px;width:3.0px;height:33.3px;background:#f7aa2b"></div>
<div class="fb" style="left:1882.0px;top:496.3px;width:344.0px;height:33.3px;background:#f7aa2b;color:#0a0a0a"><span style="letter-spacing:-0.58px">get()</span></div>
<div class="fb" style="left:2228.3px;top:496.3px;width:7.7px;height:33.3px;background:#fbca08"></div>
<div class="fb" style="left:2238.0px;top:496.3px;width:1.8px;height:33.3px;background:#3466b0"></div>
<div class="fb" style="left:2242.0px;top:496.3px;width:1.7px;height:33.3px;background:#9a82c0"></div>
<div class="fb" style="left:2249.8px;top:496.3px;width:2.2px;height:33.3px;background:#9a82c0"></div>
<div class="fb" style="left:2256.0px;top:496.3px;width:54.0px;height:33.3px;background:#559a24"></div>
<div class="fb" style="left:2322.0px;top:496.3px;width:60.0px;height:33.3px;background:#e0844f"></div>
<div class="fb" style="left:2458.3px;top:496.3px;width:1.7px;height:33.3px;background:#36c4cc"></div>
<div class="fb" style="left:4.0px;top:532.3px;width:3.4px;height:33.3px;background:#3466b0"></div>
<div class="fb" style="left:10.2px;top:532.3px;width:11.6px;height:33.3px;background:#c44cc0"></div>
<div class="fb" style="left:34.0px;top:532.3px;width:1.7px;height:33.3px;background:#2fb1e0"></div>
<div class="fb" style="left:40.0px;top:532.3px;width:1.8px;height:33.3px;background:#e0844f"></div>
<div class="fb" style="left:44.4px;top:532.3px;width:27.0px;height:33.3px;background:#c68ad0"></div>
<div class="fb" style="left:76.7px;top:532.3px;width:1.7px;height:33.3px;background:#55b594"></div>
<div class="fb" style="left:81.9px;top:532.3px;width:3.5px;height:33.3px;background:#8834a8"></div>
<div class="fb" style="left:88.5px;top:532.3px;width:41.3px;height:33.3px;background:#8834a8"></div>
<div class="fb" style="left:134.0px;top:532.3px;width:1.7px;height:33.3px;background:#3f7a58"></div>
<div class="fb" style="left:138.3px;top:532.3px;width:1.3px;height:33.3px;background:#3f7a58"></div>
<div class="fb" style="left:142.0px;top:532.3px;width:3.5px;height:33.3px;background:#2fb1e0"></div>
<div class="fb" style="left:148.0px;top:532.3px;width:12.0px;height:33.3px;background:#3f7a58"></div>
<div class="fb" style="left:162.0px;top:532.3px;width:3.5px;height:33.3px;background:#e0844f"></div>
<div class="fb" style="left:168.0px;top:532.3px;width:3.6px;height:33.3px;background:#c8656f"></div>
<div class="fb" style="left:177.8px;top:532.3px;width:2.1px;height:33.3px;background:#7b3b9b"></div>
<div class="fb" style="left:184.2px;top:532.3px;width:1.8px;height:33.3px;background:#d0865a"></div>
<div class="fb" style="left:192.0px;top:532.3px;width:1.9px;height:33.3px;background:#3a5c9a"></div>
<div class="fb" style="left:200.0px;top:532.3px;width:1.9px;height:33.3px;background:#5aa68e"></div>
<div class="fb" style="left:206.2px;top:532.3px;width:1.9px;height:33.3px;background:#7b3b9b"></div>
<div class="fb" style="left:214.2px;top:532.3px;width:1.9px;height:33.3px;background:#3b6b50"></div>
<div class="fb" style="left:220.0px;top:532.3px;width:1.9px;height:33.3px;background:#7b3b9b"></div>
<div class="fb" style="left:228.0px;top:532.3px;width:1.8px;height:33.3px;background:#3b6b50"></div>
<div class="fb" style="left:236.0px;top:532.3px;width:1.8px;height:33.3px;background:#3a9ccc"></div>
<div class="fb" style="left:242.0px;top:532.3px;width:1.9px;height:33.3px;background:#7b3b9b"></div>
<div class="fb" style="left:250.0px;top:532.3px;width:1.9px;height:33.3px;background:#4889b9"></div>
<div class="fb" style="left:256.1px;top:532.3px;width:1.9px;height:33.3px;background:#d0865a"></div>
<div class="fb" style="left:260.0px;top:532.3px;width:1.9px;height:33.3px;background:#d0865a"></div>
<div class="fb" style="left:264.0px;top:532.3px;width:1.9px;height:33.3px;background:#8878a8"></div>
<div class="fb" style="left:272.0px;top:532.3px;width:1.9px;height:33.3px;background:#d0865a"></div>
<div class="fb" style="left:286.0px;top:532.3px;width:2.0px;height:33.3px;background:#7b3b9b"></div>
<div class="fb" style="left:292.0px;top:532.3px;width:1.9px;height:33.3px;background:#8878a8"></div>
<div class="fb" style="left:300.0px;top:532.3px;width:2.0px;height:33.3px;background:#6a68b8"></div>
<div class="fb" style="left:306.2px;top:532.3px;width:4.0px;height:33.3px;background:#fbca08"></div>
<div class="fb" style="left:314.0px;top:532.3px;width:2.0px;height:33.3px;background:#964e86"></div>
<div class="fb" style="left:320.4px;top:532.3px;width:205.6px;height:33.3px;background:#f7aa2b;color:#0a0a0a"><span style="letter-spacing:0.20px">lambda$extra...</span></div>
<div class="fb" style="left:528.2px;top:532.3px;width:109.3px;height:33.3px;background:#c8656f;color:#ffffff"><span style="letter-spacing:0.20px">lambd...</span></div>
<div class="fb" style="left:640.6px;top:532.3px;width:7.1px;height:33.3px;background:#c44cc0"></div>
<div class="fb" style="left:654.0px;top:532.3px;width:1.6px;height:33.3px;background:#c8656f"></div>
<div class="fb" style="left:658.4px;top:532.3px;width:11.2px;height:33.3px;background:#c8656f"></div>
<div class="fb" style="left:680.3px;top:532.3px;width:3.1px;height:33.3px;background:#fbca08"></div>
<div class="fb" style="left:690.3px;top:532.3px;width:127.7px;height:33.3px;background:#c8656f;color:#ffffff"><span style="letter-spacing:0.59px">extract...</span></div>
<div class="fb" style="left:820.0px;top:532.3px;width:242.0px;height:33.3px;background:#55b594;color:#ffffff"><span style="letter-spacing:1.20px">&lt;init&gt;</span></div>
<div class="fb" style="left:1064.0px;top:532.3px;width:153.0px;height:33.3px;background:#c8656f;color:#ffffff"><span style="letter-spacing:0.53px">decodeHt...</span></div>
<div class="fb" style="left:1220.0px;top:532.3px;width:270.0px;height:33.3px;background:#c8656f;color:#ffffff"><span style="letter-spacing:-0.22px">unescapeJsonStringIf...</span></div>
<div class="fb" style="left:1492.3px;top:532.3px;width:184.0px;height:33.3px;background:#2fb1e0;color:#ffffff"><span style="letter-spacing:0.64px">readTree</span></div>
<div class="fb" style="left:1708.4px;top:532.3px;width:161.3px;height:33.3px;background:#c8656f;color:#ffffff"><span style="letter-spacing:0.52px">indexOf</span></div>
<div class="fb" style="left:1873.0px;top:532.3px;width:4.0px;height:33.3px;background:#964e86"></div>
<div class="fb" style="left:1882.0px;top:532.3px;width:344.0px;height:33.3px;background:#f7aa2b;color:#0a0a0a"><span style="letter-spacing:0.64px">lambda$extractFields$1</span></div>
<div class="fb" style="left:2228.3px;top:532.3px;width:7.7px;height:33.3px;background:#fbca08"></div>
<div class="fb" style="left:2238.0px;top:532.3px;width:1.8px;height:33.3px;background:#3466b0"></div>
<div class="fb" style="left:2242.0px;top:532.3px;width:1.7px;height:33.3px;background:#9a82c0"></div>
<div class="fb" style="left:2249.8px;top:532.3px;width:2.2px;height:33.3px;background:#9a82c0"></div>
<div class="fb" style="left:2256.0px;top:532.3px;width:52.0px;height:33.3px;background:#3a98d0"></div>
<div class="fb" style="left:2322.0px;top:532.3px;width:60.0px;height:33.3px;background:#e0844f"></div>
<div class="fb" style="left:2458.3px;top:532.3px;width:1.7px;height:33.3px;background:#36c4cc"></div>
<div class="fb" style="left:4.0px;top:568.3px;width:3.4px;height:33.3px;background:#3466b0"></div>
<div class="fb" style="left:10.2px;top:568.3px;width:11.6px;height:33.3px;background:#3466b0"></div>
<div class="fb" style="left:34.0px;top:568.3px;width:1.7px;height:33.3px;background:#2fb1e0"></div>
<div class="fb" style="left:40.0px;top:568.3px;width:1.8px;height:33.3px;background:#8a9a3a"></div>
<div class="fb" style="left:44.4px;top:568.3px;width:27.0px;height:33.3px;background:#c68ad0"></div>
<div class="fb" style="left:76.7px;top:568.3px;width:1.7px;height:33.3px;background:#8834a8"></div>
<div class="fb" style="left:81.9px;top:568.3px;width:3.5px;height:33.3px;background:#8834a8"></div>
<div class="fb" style="left:88.5px;top:568.3px;width:41.3px;height:33.3px;background:#8834a8"></div>
<div class="fb" style="left:134.0px;top:568.3px;width:1.7px;height:33.3px;background:#3f7a58"></div>
<div class="fb" style="left:138.3px;top:568.3px;width:1.3px;height:33.3px;background:#3f7a58"></div>
<div class="fb" style="left:142.0px;top:568.3px;width:3.5px;height:33.3px;background:#3f7a58"></div>
<div class="fb" style="left:148.0px;top:568.3px;width:12.0px;height:33.3px;background:#3f7a58"></div>
<div class="fb" style="left:162.0px;top:568.3px;width:3.5px;height:33.3px;background:#e0844f"></div>
<div class="fb" style="left:168.0px;top:568.3px;width:3.6px;height:33.3px;background:#c8656f"></div>
<div class="fb" style="left:177.8px;top:568.3px;width:2.1px;height:33.3px;background:#7b3b9b"></div>
<div class="fb" style="left:184.2px;top:568.3px;width:1.8px;height:33.3px;background:#3a5c9a"></div>
<div class="fb" style="left:192.0px;top:568.3px;width:1.9px;height:33.3px;background:#b8c23a"></div>
<div class="fb" style="left:200.0px;top:568.3px;width:1.9px;height:33.3px;background:#5aa68e"></div>
<div class="fb" style="left:206.2px;top:568.3px;width:1.9px;height:33.3px;background:#7b3b9b"></div>
<div class="fb" style="left:214.2px;top:568.3px;width:1.9px;height:33.3px;background:#3b6b50"></div>
<div class="fb" style="left:220.0px;top:568.3px;width:1.9px;height:33.3px;background:#b088c0"></div>
<div class="fb" style="left:228.0px;top:568.3px;width:1.8px;height:33.3px;background:#3b6b50"></div>
<div class="fb" style="left:236.0px;top:568.3px;width:1.8px;height:33.3px;background:#7b3b9b"></div>
<div class="fb" style="left:242.0px;top:568.3px;width:1.9px;height:33.3px;background:#7b3b9b"></div>
<div class="fb" style="left:250.0px;top:568.3px;width:1.9px;height:33.3px;background:#4889b9"></div>
<div class="fb" style="left:256.1px;top:568.3px;width:1.9px;height:33.3px;background:#d0865a"></div>
<div class="fb" style="left:260.0px;top:568.3px;width:1.9px;height:33.3px;background:#d0865a"></div>
<div class="fb" style="left:264.0px;top:568.3px;width:1.9px;height:33.3px;background:#8878a8"></div>
<div class="fb" style="left:272.0px;top:568.3px;width:1.9px;height:33.3px;background:#d0865a"></div>
<div class="fb" style="left:286.0px;top:568.3px;width:2.0px;height:33.3px;background:#d0865a"></div>
<div class="fb" style="left:292.0px;top:568.3px;width:1.9px;height:33.3px;background:#5aa68e"></div>
<div class="fb" style="left:300.0px;top:568.3px;width:2.0px;height:33.3px;background:#6a68b8"></div>
<div class="fb" style="left:306.2px;top:568.3px;width:4.0px;height:33.3px;background:#fbca08"></div>
<div class="fb" style="left:314.0px;top:568.3px;width:2.0px;height:33.3px;background:#9a82c0"></div>
<div class="fb" style="left:320.4px;top:568.3px;width:193.0px;height:33.3px;background:#c68ad0;color:#ffffff"><span style="letter-spacing:0.10px">forEachRemai...</span></div>
<div class="fb" style="left:517.0px;top:568.3px;width:4.8px;height:33.3px;background:#f7aa2b"></div>
<div class="fb" style="left:528.2px;top:568.3px;width:69.6px;height:33.3px;background:#c8656f;color:#ffffff"><span style="letter-spacing:0.20px">ext...</span></div>
<div class="fb" style="left:600.2px;top:568.3px;width:15.4px;height:33.3px;background:#f7aa2b"></div>
<div class="fb" style="left:618.5px;top:568.3px;width:19.0px;height:33.3px;background:#2fb1e0"></div>
<div class="fb" style="left:640.6px;top:568.3px;width:7.1px;height:33.3px;background:#c44cc0"></div>
<div class="fb" style="left:680.3px;top:568.3px;width:3.1px;height:33.3px;background:#fbca08"></div>
<div class="fb" style="left:820.0px;top:568.3px;width:242.0px;height:33.3px;background:#55b594;color:#ffffff"><span style="letter-spacing:1.20px">&lt;init&gt;</span></div>
<div class="fb" style="left:1064.0px;top:568.3px;width:149.0px;height:33.3px;background:#c8656f;color:#ffffff"><span style="letter-spacing:0.53px">decodeHt...</span></div>
<div class="fb" style="left:1215.5px;top:568.3px;width:2.0px;height:33.3px;background:#c8656f"></div>
<div class="fb" style="left:1220.0px;top:568.3px;width:270.0px;height:33.3px;background:#c8656f;color:#ffffff"><span style="letter-spacing:0.20px">unescapeJsonString</span></div>
<div class="fb" style="left:1492.3px;top:568.3px;width:184.0px;height:33.3px;background:#2fb1e0;color:#ffffff"><span style="letter-spacing:0.41px">_readTreeAn...</span></div>
<div class="fb" style="left:1874.0px;top:568.3px;width:3.0px;height:33.3px;background:#f7aa2b"></div>
<div class="fb" style="left:1882.0px;top:568.3px;width:325.8px;height:33.3px;background:#c68ad0;color:#ffffff"><span style="letter-spacing:-0.10px">forEachRemaining</span></div>
<div class="fb" style="left:2210.0px;top:568.3px;width:15.8px;height:33.3px;background:#f7aa2b"></div>
<div class="fb" style="left:2228.3px;top:568.3px;width:7.7px;height:33.3px;background:#fbca08"></div>
<div class="fb" style="left:2238.0px;top:568.3px;width:1.8px;height:33.3px;background:#3466b0"></div>
<div class="fb" style="left:2242.0px;top:568.3px;width:1.7px;height:33.3px;background:#9a82c0"></div>
<div class="fb" style="left:2249.8px;top:568.3px;width:2.2px;height:33.3px;background:#3f7a58"></div>
<div class="fb" style="left:2256.0px;top:568.3px;width:52.0px;height:33.3px;background:#fbca08"></div>
<div class="fb" style="left:2322.0px;top:568.3px;width:60.0px;height:33.3px;background:#3a98d0"></div>
<div class="fb" style="left:4.0px;top:604.3px;width:3.4px;height:33.3px;background:#3466b0"></div>
<div class="fb" style="left:10.2px;top:604.3px;width:11.6px;height:33.3px;background:#3466b0"></div>
<div class="fb" style="left:34.0px;top:604.3px;width:1.7px;height:33.3px;background:#2fb1e0"></div>
<div class="fb" style="left:40.0px;top:604.3px;width:1.8px;height:33.3px;background:#e0844f"></div>
<div class="fb" style="left:44.4px;top:604.3px;width:27.0px;height:33.3px;background:#e0844f"></div>
<div class="fb" style="left:76.7px;top:604.3px;width:1.7px;height:33.3px;background:#e0844f"></div>
<div class="fb" style="left:81.9px;top:604.3px;width:3.5px;height:33.3px;background:#8834a8"></div>
<div class="fb" style="left:88.5px;top:604.3px;width:27.4px;height:33.3px;background:#8834a8"></div>
<div class="fb" style="left:118.5px;top:604.3px;width:11.3px;height:33.3px;background:#8834a8"></div>
<div class="fb" style="left:134.0px;top:604.3px;width:1.7px;height:33.3px;background:#3f7a58"></div>
<div class="fb" style="left:138.3px;top:604.3px;width:1.3px;height:33.3px;background:#3f7a58"></div>
<div class="fb" style="left:142.0px;top:604.3px;width:3.5px;height:33.3px;background:#3f7a58"></div>
<div class="fb" style="left:148.0px;top:604.3px;width:12.0px;height:33.3px;background:#3f7a58"></div>
<div class="fb" style="left:162.0px;top:604.3px;width:3.5px;height:33.3px;background:#e0844f"></div>
<div class="fb" style="left:168.0px;top:604.3px;width:3.6px;height:33.3px;background:#e0844f"></div>
<div class="fb" style="left:177.8px;top:604.3px;width:2.1px;height:33.3px;background:#7b3b9b"></div>
<div class="fb" style="left:184.2px;top:604.3px;width:1.8px;height:33.3px;background:#3a5c9a"></div>
<div class="fb" style="left:192.0px;top:604.3px;width:1.9px;height:33.3px;background:#b8c23a"></div>
<div class="fb" style="left:200.0px;top:604.3px;width:1.9px;height:33.3px;background:#5aa68e"></div>
<div class="fb" style="left:206.2px;top:604.3px;width:1.9px;height:33.3px;background:#7b3b9b"></div>
<div class="fb" style="left:214.2px;top:604.3px;width:1.9px;height:33.3px;background:#3b6b50"></div>
<div class="fb" style="left:220.0px;top:604.3px;width:1.9px;height:33.3px;background:#b088c0"></div>
<div class="fb" style="left:228.0px;top:604.3px;width:1.8px;height:33.3px;background:#3b6b50"></div>
<div class="fb" style="left:236.0px;top:604.3px;width:1.8px;height:33.3px;background:#3a9ccc"></div>
<div class="fb" style="left:242.0px;top:604.3px;width:1.9px;height:33.3px;background:#b088c0"></div>
<div class="fb" style="left:250.0px;top:604.3px;width:1.9px;height:33.3px;background:#4889b9"></div>
<div class="fb" style="left:256.1px;top:604.3px;width:1.9px;height:33.3px;background:#d0865a"></div>
<div class="fb" style="left:260.0px;top:604.3px;width:1.9px;height:33.3px;background:#d0865a"></div>
<div class="fb" style="left:264.0px;top:604.3px;width:1.9px;height:33.3px;background:#3a5c9a"></div>
<div class="fb" style="left:272.0px;top:604.3px;width:1.9px;height:33.3px;background:#4889b9"></div>
<div class="fb" style="left:286.0px;top:604.3px;width:2.0px;height:33.3px;background:#d0865a"></div>
<div class="fb" style="left:292.0px;top:604.3px;width:1.9px;height:33.3px;background:#5aa68e"></div>
<div class="fb" style="left:300.0px;top:604.3px;width:2.0px;height:33.3px;background:#7b3b9b"></div>
<div class="fb" style="left:306.2px;top:604.3px;width:4.0px;height:33.3px;background:#fbca08"></div>
<div class="fb" style="left:314.0px;top:604.3px;width:2.0px;height:33.3px;background:#9a82c0"></div>
<div class="fb" style="left:320.4px;top:604.3px;width:193.0px;height:33.3px;background:#f7aa2b;color:#0a0a0a"><span style="letter-spacing:0.26px">accept(Object)</span></div>
<div class="fb" style="left:516.3px;top:604.3px;width:3.7px;height:33.3px;background:#2fb1e0"></div>
<div class="fb" style="left:528.2px;top:604.3px;width:69.6px;height:33.3px;background:#c8656f;color:#ffffff"><span style="letter-spacing:0.20px">ind...</span></div>
<div class="fb" style="left:600.2px;top:604.3px;width:15.4px;height:33.3px;background:#f7aa2b"></div>
<div class="fb" style="left:618.5px;top:604.3px;width:15.0px;height:33.3px;background:#2fb1e0"></div>
<div class="fb" style="left:635.8px;top:604.3px;width:1.7px;height:33.3px;background:#c8656f"></div>
<div class="fb" style="left:640.6px;top:604.3px;width:7.1px;height:33.3px;background:#c44cc0"></div>
<div class="fb" style="left:680.3px;top:604.3px;width:3.1px;height:33.3px;background:#fbca08"></div>
<div class="fb" style="left:820.0px;top:604.3px;width:242.0px;height:33.3px;background:#55b594;color:#ffffff"><span style="letter-spacing:-0.12px">decodeUTF8_UTF...</span></div>
<div class="fb" style="left:1064.0px;top:604.3px;width:149.0px;height:33.3px;background:#55b594;color:#ffffff"><span style="letter-spacing:0.15px">replace</span></div>
<div class="fb" style="left:1215.5px;top:604.3px;width:2.0px;height:33.3px;background:#55b594"></div>
<div class="fb" style="left:1220.0px;top:604.3px;width:217.6px;height:33.3px;background:#55b594;color:#ffffff"><span style="letter-spacing:0.20px">append(char)</span></div>
<div class="fb" style="left:1440.0px;top:604.3px;width:39.4px;height:33.3px;background:#55b594"></div>
<div class="fb" style="left:1492.3px;top:604.3px;width:184.0px;height:33.3px;background:#3cc8c8;color:#0a0a0a"><span style="letter-spacing:0.18px">readRootValue</span></div>
<div class="fb" style="left:1874.0px;top:604.3px;width:3.0px;height:33.3px;background:#f7aa2b"></div>
<div class="fb" style="left:1882.0px;top:604.3px;width:325.8px;height:33.3px;background:#f7aa2b;color:#0a0a0a"><span style="letter-spacing:0.26px">accept(Object)</span></div>
<div class="fb" style="left:2210.0px;top:604.3px;width:8.0px;height:33.3px;background:#2fb1e0"></div>
<div class="fb" style="left:2220.0px;top:604.3px;width:5.8px;height:33.3px;background:#2fb1e0"></div>
<div class="fb" style="left:2228.3px;top:604.3px;width:7.7px;height:33.3px;background:#fbca08"></div>
<div class="fb" style="left:2238.0px;top:604.3px;width:1.8px;height:33.3px;background:#3466b0"></div>
<div class="fb" style="left:2242.0px;top:604.3px;width:1.7px;height:33.3px;background:#9a82c0"></div>
<div class="fb" style="left:2249.8px;top:604.3px;width:2.2px;height:33.3px;background:#3f7a58"></div>
<div class="fb" style="left:2256.0px;top:604.3px;width:52.0px;height:33.3px;background:#fbca08"></div>
<div class="fb" style="left:2322.0px;top:604.3px;width:60.0px;height:33.3px;background:#3a98d0"></div>
</div>
<div class="r" style="left:0.00px;top:1747.00px;width:2476.00px;height:1.50px;background:#e6e6e6;"></div>
<div class="r" style="left:2476.00px;top:1104.00px;width:1.50px;height:644.50px;background:#e2e2e2;"></div>
<div class="r" style="left:2504.00px;top:985.00px;width:2.00px;height:763.50px;background:#e9e9e9;"></div>
<div class="r" style="left:2484px;top:1170px;width:16px;height:172px;border-radius:8px;background:#c2c2c2"></div>
<div class="r" style="left:2388px;top:1661px;width:53px;height:53px;border-radius:50%;background:#ededed"></div>
<svg class="r" style="left:2401px;top:1678px" width="28" height="20" viewBox="0 0 28 20"><path d="M3 15.5 L14 4.5 L25 15.5" stroke="#000" stroke-width="4.2" fill="none"/></svg>
</body></html>
